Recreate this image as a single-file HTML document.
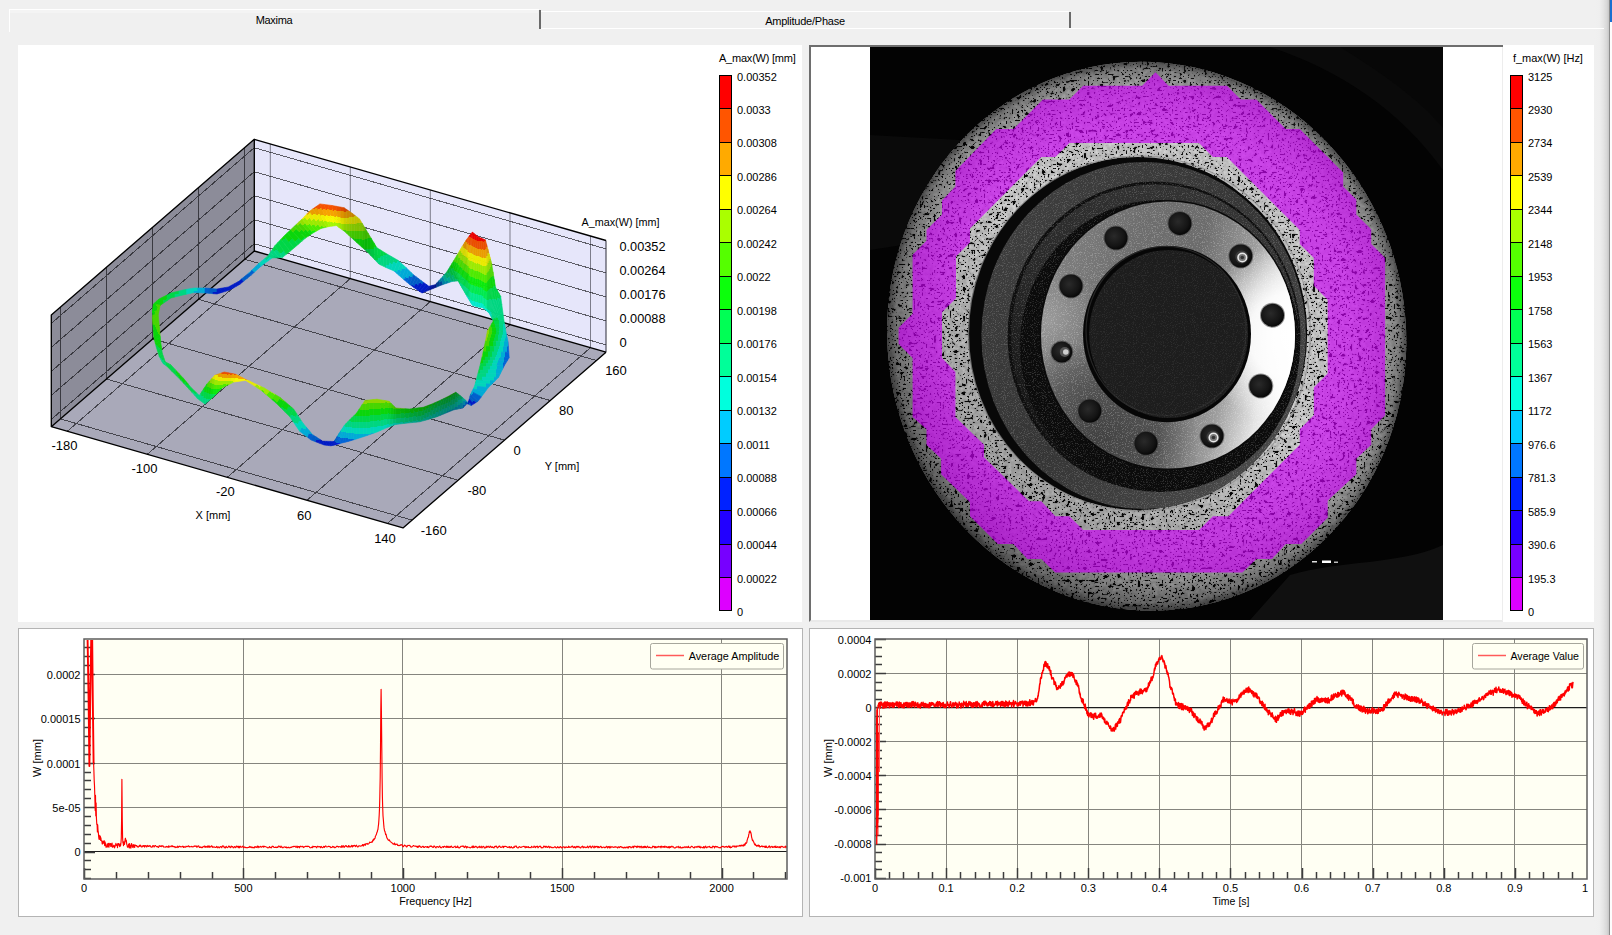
<!DOCTYPE html>
<html lang="en"><head><meta charset="utf-8"><title>Maxima</title>
<style>
html,body{margin:0;padding:0;}
body{width:1612px;height:935px;overflow:hidden;background:#f0f0f0;position:relative;
 font-family:"Liberation Sans", sans-serif;font-size:11px;color:#000;}
.abs{position:absolute;}
svg{position:absolute;left:0;top:0;overflow:visible;}
svg text{font-family:"Liberation Sans", sans-serif;fill:#000;}
.tab{position:absolute;text-align:center;font-size:11px;line-height:13px;white-space:nowrap;}
.panel{position:absolute;background:#fff;box-sizing:border-box;}
.cbl{position:absolute;font-size:11px;line-height:12px;white-space:nowrap;}
</style></head>
<body>
<div class="abs" style="left:1594px;top:0;width:15px;height:935px;background:linear-gradient(90deg,#f0f0f0 0,#efefef 35%,#e6e6e6 60%,#d8d8d8 85%,#c6c6c6 100%)"></div>
<div class="abs" style="left:9px;top:9px;width:530px;height:1px;background:#fff"></div>
<div class="abs" style="left:9px;top:9px;width:1px;height:23px;background:#fff"></div>
<div class="abs" style="left:10px;top:10px;width:528px;height:3px;background:#f4f4f4"></div>
<div class="abs" style="left:539px;top:10px;width:2px;height:19px;background:#6a6a6a"></div>
<div class="abs" style="left:541px;top:11px;width:528px;height:1px;background:#fff"></div>
<div class="abs" style="left:1069px;top:12px;width:2px;height:16px;background:#6a6a6a"></div>
<div class="abs" style="left:541px;top:28px;width:1063px;height:1px;background:#fff"></div>
<div class="tab" style="left:9px;top:14px;width:530px;letter-spacing:-0.3px;">Maxima</div>
<div class="tab" style="left:541px;top:15px;width:528px;letter-spacing:-0.23px;">Amplitude/Phase</div>
<div class="abs" style="left:1609px;top:0;width:1px;height:935px;background:#8c8c8c"></div>
<div class="abs" style="left:1610px;top:0;width:2px;height:935px;background:#fdfdfd"></div>
<div class="abs" style="left:1610px;top:0;width:2px;height:22px;background:#1a6fd0"></div>
<div class="panel" style="left:18px;top:45px;width:784px;height:577px;"></div>
<div class="panel" style="left:809px;top:45px;width:694px;height:577px;border-left:2px solid #6e6e6e;border-top:2px solid #6e6e6e;border-bottom:2px solid #e9e9e9;"></div>
<div class="panel" style="left:1503px;top:45px;width:91px;height:577px;"></div>
<div class="abs" style="left:1502px;top:47px;width:1px;height:574px;background:#ededed"></div>
<div class="panel" style="left:18px;top:628px;width:785px;height:289px;border:1px solid #b4b4b4;"></div>
<div class="panel" style="left:809px;top:628px;width:785px;height:289px;border:1px solid #b4b4b4;"></div>
<svg width="1612" height="935" viewBox="0 0 1612 935" shape-rendering="crispEdges"><rect x="719" y="75" width="13" height="536" fill="#000"/><rect x="720" y="76" width="11" height="32" fill="#ff0000"/><rect x="720" y="109" width="11" height="33" fill="#ff5500"/><rect x="720" y="143" width="11" height="32" fill="#ffaa00"/><rect x="720" y="176" width="11" height="33" fill="#ffff00"/><rect x="720" y="210" width="11" height="32" fill="#aaff00"/><rect x="720" y="243" width="11" height="33" fill="#55ff00"/><rect x="720" y="277" width="11" height="32" fill="#0cff0c"/><rect x="720" y="310" width="11" height="33" fill="#00ff55"/><rect x="720" y="344" width="11" height="32" fill="#00ff99"/><rect x="720" y="377" width="11" height="33" fill="#00ffdd"/><rect x="720" y="411" width="11" height="32" fill="#00ccff"/><rect x="720" y="444" width="11" height="33" fill="#0077ff"/><rect x="720" y="478" width="11" height="32" fill="#0022ff"/><rect x="720" y="511" width="11" height="33" fill="#2200ff"/><rect x="720" y="545" width="11" height="32" fill="#7700ff"/><rect x="720" y="578" width="11" height="32" fill="#dd00ff"/></svg>
<div class="cbl" style="left:719px;top:52px;letter-spacing:-0.22px;">A_max(W) [mm]</div>
<div class="cbl" style="left:737px;top:70.5px;">0.00352</div>
<div class="cbl" style="left:737px;top:104.0px;">0.0033</div>
<div class="cbl" style="left:737px;top:137.4px;">0.00308</div>
<div class="cbl" style="left:737px;top:170.9px;">0.00286</div>
<div class="cbl" style="left:737px;top:204.4px;">0.00264</div>
<div class="cbl" style="left:737px;top:237.8px;">0.00242</div>
<div class="cbl" style="left:737px;top:271.3px;">0.0022</div>
<div class="cbl" style="left:737px;top:304.8px;">0.00198</div>
<div class="cbl" style="left:737px;top:338.2px;">0.00176</div>
<div class="cbl" style="left:737px;top:371.7px;">0.00154</div>
<div class="cbl" style="left:737px;top:405.2px;">0.00132</div>
<div class="cbl" style="left:737px;top:438.7px;">0.0011</div>
<div class="cbl" style="left:737px;top:472.1px;">0.00088</div>
<div class="cbl" style="left:737px;top:505.6px;">0.00066</div>
<div class="cbl" style="left:737px;top:539.1px;">0.00044</div>
<div class="cbl" style="left:737px;top:572.5px;">0.00022</div>
<div class="cbl" style="left:737px;top:606.0px;">0</div>
<svg width="1612" height="935" viewBox="0 0 1612 935" shape-rendering="crispEdges"><rect x="1510" y="75" width="13" height="536" fill="#000"/><rect x="1511" y="76" width="11" height="32" fill="#ff0000"/><rect x="1511" y="109" width="11" height="33" fill="#ff5500"/><rect x="1511" y="143" width="11" height="32" fill="#ffaa00"/><rect x="1511" y="176" width="11" height="33" fill="#ffff00"/><rect x="1511" y="210" width="11" height="32" fill="#aaff00"/><rect x="1511" y="243" width="11" height="33" fill="#55ff00"/><rect x="1511" y="277" width="11" height="32" fill="#0cff0c"/><rect x="1511" y="310" width="11" height="33" fill="#00ff55"/><rect x="1511" y="344" width="11" height="32" fill="#00ff99"/><rect x="1511" y="377" width="11" height="33" fill="#00ffdd"/><rect x="1511" y="411" width="11" height="32" fill="#00ccff"/><rect x="1511" y="444" width="11" height="33" fill="#0077ff"/><rect x="1511" y="478" width="11" height="32" fill="#0022ff"/><rect x="1511" y="511" width="11" height="33" fill="#2200ff"/><rect x="1511" y="545" width="11" height="32" fill="#7700ff"/><rect x="1511" y="578" width="11" height="32" fill="#dd00ff"/></svg>
<div class="cbl" style="left:1513px;top:52px;letter-spacing:-0.03px;">f_max(W) [Hz]</div>
<div class="cbl" style="left:1528px;top:70.5px;">3125</div>
<div class="cbl" style="left:1528px;top:104.0px;">2930</div>
<div class="cbl" style="left:1528px;top:137.4px;">2734</div>
<div class="cbl" style="left:1528px;top:170.9px;">2539</div>
<div class="cbl" style="left:1528px;top:204.4px;">2344</div>
<div class="cbl" style="left:1528px;top:237.8px;">2148</div>
<div class="cbl" style="left:1528px;top:271.3px;">1953</div>
<div class="cbl" style="left:1528px;top:304.8px;">1758</div>
<div class="cbl" style="left:1528px;top:338.2px;">1563</div>
<div class="cbl" style="left:1528px;top:371.7px;">1367</div>
<div class="cbl" style="left:1528px;top:405.2px;">1172</div>
<div class="cbl" style="left:1528px;top:438.7px;">976.6</div>
<div class="cbl" style="left:1528px;top:472.1px;">781.3</div>
<div class="cbl" style="left:1528px;top:505.6px;">585.9</div>
<div class="cbl" style="left:1528px;top:539.1px;">390.6</div>
<div class="cbl" style="left:1528px;top:572.5px;">195.3</div>
<div class="cbl" style="left:1528px;top:606.0px;">0</div>
<svg width="1612" height="935" viewBox="0 0 1612 935"><polygon points="254.30,139.30 51.30,315.00 51.30,426.70 254.30,251.00" fill="#8c8c99"/>
<polygon points="254.30,139.30 606.00,240.50 606.00,352.20 254.30,251.00" fill="#e6e6fa"/>
<polygon points="254.30,251.00 606.00,352.20 403.00,527.90 51.30,426.70" fill="#a9a9b9"/>
<path d="M270.3 255.6 V143.9 M350.3 278.6 V166.9 M430.3 301.6 V189.9 M510.0 324.6 V212.9 M590.5 347.7 V236.0" stroke="#7c7c8a" stroke-width="1" fill="none"/>
<path d="M244.7 259.3 V147.6 M244.7 259.3 l351.7 101.2 M198.5 299.3 V187.6 M198.5 299.3 l351.7 101.2 M152.7 338.9 V227.2 M152.7 338.9 l351.7 101.2 M106.4 379.0 V267.3 M106.4 379.0 l351.7 101.2 M60.3 418.9 V307.2 M60.3 418.9 l351.7 101.2 M254.3 243.7 l-203.0 175.7 M254.3 243.7 l351.7 101.2 M254.3 219.7 l-203.0 175.7 M254.3 219.7 l351.7 101.2 M254.3 195.7 l-203.0 175.7 M254.3 195.7 l351.7 101.2 M254.3 171.7 l-203.0 175.7 M254.3 171.7 l351.7 101.2 M254.3 147.7 l-203.0 175.7 M254.3 147.7 l351.7 101.2 M270.3 255.6 l-203.0 175.7 M350.3 278.6 l-203.0 175.7 M430.3 301.6 l-203.0 175.7 M510.0 324.6 l-203.0 175.7 M590.5 347.7 l-203.0 175.7" stroke="#08080c" stroke-width="1" fill="none" stroke-opacity="0.62" shape-rendering="crispEdges"/>
<path d="M606.00,240.50 L606.00,352.20" stroke="#2a2a38" stroke-width="1" fill="none"/>
<path d="M51.30,426.70 L51.30,315.00 L254.30,139.30 L606.00,240.50 M606.00,352.20 L403.00,527.90 L51.30,426.70 L254.30,251.00 L606.00,352.20 M254.30,251.00 L254.30,139.30" stroke="#000" stroke-width="1.35" fill="none" stroke-linejoin="round"/>
<defs><linearGradient id="rb0" gradientUnits="userSpaceOnUse" x1="154.42" y1="303.17" x2="153.75" y2="311.75"><stop offset="0.000" stop-color="#0ad60a"/><stop offset="1.000" stop-color="#0ad60a"/></linearGradient><linearGradient id="rb1" gradientUnits="userSpaceOnUse" x1="156.25" y1="301.50" x2="156.25" y2="309.25"><stop offset="0.000" stop-color="#0ad60a"/><stop offset="1.000" stop-color="#0ad60a"/></linearGradient><linearGradient id="rb2" gradientUnits="userSpaceOnUse" x1="158.08" y1="299.83" x2="158.75" y2="306.75"><stop offset="0.000" stop-color="#0ad60a"/><stop offset="1.000" stop-color="#0ad60a"/></linearGradient><linearGradient id="rb3" gradientUnits="userSpaceOnUse" x1="161.00" y1="298.00" x2="161.83" y2="304.25"><stop offset="0.000" stop-color="#0ad60a"/><stop offset="1.000" stop-color="#0ad60a"/></linearGradient><linearGradient id="rb4" gradientUnits="userSpaceOnUse" x1="165.00" y1="296.00" x2="165.50" y2="301.75"><stop offset="0.000" stop-color="#0ad60a"/><stop offset="0.625" stop-color="#0ad60a"/><stop offset="0.625" stop-color="#00d647"/><stop offset="1.000" stop-color="#00d647"/></linearGradient><linearGradient id="rb5" gradientUnits="userSpaceOnUse" x1="169.00" y1="294.00" x2="169.17" y2="299.25"><stop offset="0.000" stop-color="#00d647"/><stop offset="1.000" stop-color="#00d647"/></linearGradient><linearGradient id="rb6" gradientUnits="userSpaceOnUse" x1="173.00" y1="292.50" x2="173.00" y2="297.50"><stop offset="0.000" stop-color="#00d647"/><stop offset="1.000" stop-color="#00d647"/></linearGradient><linearGradient id="rb7" gradientUnits="userSpaceOnUse" x1="177.00" y1="291.50" x2="177.00" y2="296.50"><stop offset="0.000" stop-color="#00d647"/><stop offset="0.500" stop-color="#00d647"/><stop offset="0.500" stop-color="#00d680"/><stop offset="1.000" stop-color="#00d680"/></linearGradient><linearGradient id="rb8" gradientUnits="userSpaceOnUse" x1="181.00" y1="290.50" x2="181.00" y2="295.50"><stop offset="0.000" stop-color="#00d680"/><stop offset="1.000" stop-color="#00d680"/></linearGradient><linearGradient id="rb9" gradientUnits="userSpaceOnUse" x1="184.83" y1="289.67" x2="184.83" y2="294.58"><stop offset="0.000" stop-color="#00d680"/><stop offset="1.000" stop-color="#00d680"/></linearGradient><linearGradient id="rb10" gradientUnits="userSpaceOnUse" x1="188.50" y1="289.00" x2="188.50" y2="293.75"><stop offset="0.000" stop-color="#00d6b9"/><stop offset="1.000" stop-color="#00d6b9"/></linearGradient><linearGradient id="rb11" gradientUnits="userSpaceOnUse" x1="192.17" y1="288.33" x2="192.17" y2="292.92"><stop offset="0.000" stop-color="#00d6b9"/><stop offset="1.000" stop-color="#00d6b9"/></linearGradient><linearGradient id="rb12" gradientUnits="userSpaceOnUse" x1="195.83" y1="288.00" x2="195.83" y2="292.58"><stop offset="0.000" stop-color="#00d6b9"/><stop offset="0.583" stop-color="#00d6b9"/><stop offset="0.583" stop-color="#00abd6"/><stop offset="1.000" stop-color="#00abd6"/></linearGradient><linearGradient id="rb13" gradientUnits="userSpaceOnUse" x1="199.50" y1="288.00" x2="199.50" y2="292.75"><stop offset="0.000" stop-color="#00abd6"/><stop offset="1.000" stop-color="#00abd6"/></linearGradient><linearGradient id="rb14" gradientUnits="userSpaceOnUse" x1="203.17" y1="288.00" x2="203.17" y2="292.92"><stop offset="0.000" stop-color="#00abd6"/><stop offset="1.000" stop-color="#00abd6"/></linearGradient><linearGradient id="rb15" gradientUnits="userSpaceOnUse" x1="207.00" y1="288.17" x2="207.00" y2="293.17"><stop offset="0.000" stop-color="#0060ce"/><stop offset="1.000" stop-color="#0060ce"/></linearGradient><linearGradient id="rb16" gradientUnits="userSpaceOnUse" x1="211.00" y1="288.50" x2="211.00" y2="293.50"><stop offset="0.000" stop-color="#005cc6"/><stop offset="1.000" stop-color="#005cc6"/></linearGradient><linearGradient id="rb17" gradientUnits="userSpaceOnUse" x1="215.00" y1="288.83" x2="215.00" y2="293.83"><stop offset="0.000" stop-color="#005cc6"/><stop offset="0.583" stop-color="#005cc6"/><stop offset="0.583" stop-color="#001ac6"/><stop offset="1.000" stop-color="#001ac6"/></linearGradient><linearGradient id="rb18" gradientUnits="userSpaceOnUse" x1="218.88" y1="288.67" x2="219.12" y2="293.33"><stop offset="0.000" stop-color="#001ac6"/><stop offset="1.000" stop-color="#001ac6"/></linearGradient><linearGradient id="rb19" gradientUnits="userSpaceOnUse" x1="222.62" y1="288.00" x2="223.38" y2="292.00"><stop offset="0.000" stop-color="#001ac6"/><stop offset="1.000" stop-color="#001ac6"/></linearGradient><linearGradient id="rb20" gradientUnits="userSpaceOnUse" x1="226.38" y1="287.33" x2="227.62" y2="290.67"><stop offset="0.000" stop-color="#001ac6"/><stop offset="1.000" stop-color="#001ac6"/></linearGradient><linearGradient id="rb21" gradientUnits="userSpaceOnUse" x1="229.93" y1="286.10" x2="231.41" y2="289.07"><stop offset="0.000" stop-color="#001ac6"/><stop offset="1.000" stop-color="#001ac6"/></linearGradient><linearGradient id="rb22" gradientUnits="userSpaceOnUse" x1="233.28" y1="284.30" x2="234.72" y2="287.20"><stop offset="0.000" stop-color="#001ac6"/><stop offset="1.000" stop-color="#001ac6"/></linearGradient><linearGradient id="rb23" gradientUnits="userSpaceOnUse" x1="236.62" y1="282.50" x2="238.04" y2="285.33"><stop offset="0.000" stop-color="#001ac6"/><stop offset="1.000" stop-color="#001ac6"/></linearGradient><linearGradient id="rb24" gradientUnits="userSpaceOnUse" x1="240.01" y1="280.21" x2="241.63" y2="282.84"><stop offset="0.000" stop-color="#005cc6"/><stop offset="-0.000" stop-color="#005cc6"/><stop offset="-0.000" stop-color="#001ac6"/><stop offset="1.000" stop-color="#001ac6"/></linearGradient><linearGradient id="rb25" gradientUnits="userSpaceOnUse" x1="243.42" y1="277.44" x2="245.48" y2="279.71"><stop offset="0.000" stop-color="#005cc6"/><stop offset="1.000" stop-color="#005cc6"/></linearGradient><linearGradient id="rb26" gradientUnits="userSpaceOnUse" x1="246.83" y1="274.66" x2="249.34" y2="276.59"><stop offset="0.000" stop-color="#005cc6"/><stop offset="1.000" stop-color="#005cc6"/></linearGradient><linearGradient id="rb27" gradientUnits="userSpaceOnUse" x1="250.23" y1="271.66" x2="252.94" y2="273.50"><stop offset="0.000" stop-color="#00a5ce"/><stop offset="0.042" stop-color="#00a5ce"/><stop offset="0.042" stop-color="#0060ce"/><stop offset="1.000" stop-color="#0060ce"/></linearGradient><linearGradient id="rb28" gradientUnits="userSpaceOnUse" x1="253.62" y1="268.44" x2="256.28" y2="270.46"><stop offset="0.000" stop-color="#00abd6"/><stop offset="1.000" stop-color="#00abd6"/></linearGradient><linearGradient id="rb29" gradientUnits="userSpaceOnUse" x1="257.01" y1="265.22" x2="259.63" y2="267.41"><stop offset="0.000" stop-color="#00abd6"/><stop offset="1.000" stop-color="#00abd6"/></linearGradient><linearGradient id="rb30" gradientUnits="userSpaceOnUse" x1="260.23" y1="262.33" x2="263.10" y2="264.57"><stop offset="0.000" stop-color="#00d6b9"/><stop offset="0.917" stop-color="#00d6b9"/><stop offset="0.917" stop-color="#00abd6"/><stop offset="1.000" stop-color="#00abd6"/></linearGradient><linearGradient id="rb31" gradientUnits="userSpaceOnUse" x1="263.30" y1="259.77" x2="266.70" y2="261.93"><stop offset="0.000" stop-color="#00d6b9"/><stop offset="1.000" stop-color="#00d6b9"/></linearGradient><linearGradient id="rb32" gradientUnits="userSpaceOnUse" x1="266.37" y1="257.21" x2="270.30" y2="259.29"><stop offset="0.000" stop-color="#00d680"/><stop offset="0.458" stop-color="#00d680"/><stop offset="0.458" stop-color="#00d6b9"/><stop offset="1.000" stop-color="#00d6b9"/></linearGradient><linearGradient id="rb33" gradientUnits="userSpaceOnUse" x1="269.05" y1="254.25" x2="273.83" y2="257.87"><stop offset="0.000" stop-color="#00d680"/><stop offset="1.000" stop-color="#00d680"/></linearGradient><linearGradient id="rb34" gradientUnits="userSpaceOnUse" x1="271.35" y1="250.87" x2="277.30" y2="257.68"><stop offset="0.000" stop-color="#00d680"/><stop offset="1.000" stop-color="#00d680"/></linearGradient><linearGradient id="rb35" gradientUnits="userSpaceOnUse" x1="273.65" y1="247.49" x2="280.77" y2="257.49"><stop offset="0.000" stop-color="#00d647"/><stop offset="0.273" stop-color="#00d647"/><stop offset="0.273" stop-color="#00d680"/><stop offset="1.000" stop-color="#00d680"/></linearGradient><linearGradient id="rb36" gradientUnits="userSpaceOnUse" x1="276.33" y1="244.17" x2="284.42" y2="255.83"><stop offset="0.000" stop-color="#00d647"/><stop offset="0.692" stop-color="#00d647"/><stop offset="0.692" stop-color="#00d680"/><stop offset="1.000" stop-color="#00d680"/></linearGradient><linearGradient id="rb37" gradientUnits="userSpaceOnUse" x1="279.40" y1="240.90" x2="288.25" y2="252.70"><stop offset="0.000" stop-color="#00d647"/><stop offset="1.000" stop-color="#00d647"/></linearGradient><linearGradient id="rb38" gradientUnits="userSpaceOnUse" x1="282.47" y1="237.63" x2="292.08" y2="249.57"><stop offset="0.000" stop-color="#0ad60a"/><stop offset="0.132" stop-color="#0ad60a"/><stop offset="0.132" stop-color="#00d647"/><stop offset="1.000" stop-color="#00d647"/></linearGradient><linearGradient id="rb39" gradientUnits="userSpaceOnUse" x1="285.67" y1="234.43" x2="295.93" y2="246.33"><stop offset="0.000" stop-color="#0ad60a"/><stop offset="0.462" stop-color="#0ad60a"/><stop offset="0.462" stop-color="#00d647"/><stop offset="1.000" stop-color="#00d647"/></linearGradient><linearGradient id="rb40" gradientUnits="userSpaceOnUse" x1="289.00" y1="231.30" x2="299.80" y2="243.00"><stop offset="0.000" stop-color="#0ad60a"/><stop offset="0.719" stop-color="#0ad60a"/><stop offset="0.719" stop-color="#00d647"/><stop offset="1.000" stop-color="#00d647"/></linearGradient><linearGradient id="rb41" gradientUnits="userSpaceOnUse" x1="292.33" y1="228.17" x2="303.67" y2="239.67"><stop offset="0.000" stop-color="#47d600"/><stop offset="0.232" stop-color="#47d600"/><stop offset="0.232" stop-color="#0ad60a"/><stop offset="0.902" stop-color="#0ad60a"/><stop offset="0.902" stop-color="#00d647"/><stop offset="1.000" stop-color="#00d647"/></linearGradient><linearGradient id="rb42" gradientUnits="userSpaceOnUse" x1="295.33" y1="225.33" x2="306.83" y2="237.17"><stop offset="0.000" stop-color="#47d600"/><stop offset="0.453" stop-color="#47d600"/><stop offset="0.453" stop-color="#0ad60a"/><stop offset="1.000" stop-color="#0ad60a"/></linearGradient><linearGradient id="rb43" gradientUnits="userSpaceOnUse" x1="298.00" y1="222.80" x2="309.30" y2="235.50"><stop offset="0.000" stop-color="#8ed600"/><stop offset="0.104" stop-color="#8ed600"/><stop offset="0.104" stop-color="#47d600"/><stop offset="0.625" stop-color="#47d600"/><stop offset="0.625" stop-color="#0ad60a"/><stop offset="1.000" stop-color="#0ad60a"/></linearGradient><linearGradient id="rb44" gradientUnits="userSpaceOnUse" x1="300.67" y1="220.27" x2="311.77" y2="233.83"><stop offset="0.000" stop-color="#95e000"/><stop offset="0.294" stop-color="#95e000"/><stop offset="0.294" stop-color="#4ae000"/><stop offset="0.762" stop-color="#4ae000"/><stop offset="0.762" stop-color="#0ae00a"/><stop offset="1.000" stop-color="#0ae00a"/></linearGradient><linearGradient id="rb45" gradientUnits="userSpaceOnUse" x1="303.25" y1="217.70" x2="314.33" y2="232.25"><stop offset="0.000" stop-color="#eaea00"/><stop offset="0.045" stop-color="#eaea00"/><stop offset="0.045" stop-color="#9cea00"/><stop offset="0.472" stop-color="#9cea00"/><stop offset="0.472" stop-color="#4eea00"/><stop offset="0.898" stop-color="#4eea00"/><stop offset="0.898" stop-color="#0bea0b"/><stop offset="1.000" stop-color="#0bea0b"/></linearGradient><linearGradient id="rb46" gradientUnits="userSpaceOnUse" x1="305.75" y1="215.10" x2="317.00" y2="230.75"><stop offset="0.000" stop-color="#eaea00"/><stop offset="0.250" stop-color="#eaea00"/><stop offset="0.250" stop-color="#9cea00"/><stop offset="0.641" stop-color="#9cea00"/><stop offset="0.641" stop-color="#4eea00"/><stop offset="1.000" stop-color="#4eea00"/></linearGradient><linearGradient id="rb47" gradientUnits="userSpaceOnUse" x1="308.25" y1="212.50" x2="319.67" y2="229.25"><stop offset="0.000" stop-color="#ea9c00"/><stop offset="0.062" stop-color="#ea9c00"/><stop offset="0.062" stop-color="#eaea00"/><stop offset="0.423" stop-color="#eaea00"/><stop offset="0.423" stop-color="#9cea00"/><stop offset="0.784" stop-color="#9cea00"/><stop offset="0.784" stop-color="#4eea00"/><stop offset="1.000" stop-color="#4eea00"/></linearGradient><linearGradient id="rb48" gradientUnits="userSpaceOnUse" x1="311.25" y1="209.98" x2="322.33" y2="228.17"><stop offset="0.000" stop-color="#ea9c00"/><stop offset="0.222" stop-color="#ea9c00"/><stop offset="0.222" stop-color="#eaea00"/><stop offset="0.556" stop-color="#eaea00"/><stop offset="0.556" stop-color="#9cea00"/><stop offset="0.889" stop-color="#9cea00"/><stop offset="0.889" stop-color="#4eea00"/><stop offset="1.000" stop-color="#4eea00"/></linearGradient><linearGradient id="rb49" gradientUnits="userSpaceOnUse" x1="314.75" y1="207.55" x2="325.00" y2="227.50"><stop offset="0.000" stop-color="#ea4e00"/><stop offset="0.037" stop-color="#ea4e00"/><stop offset="0.037" stop-color="#ea9c00"/><stop offset="0.346" stop-color="#ea9c00"/><stop offset="0.346" stop-color="#eaea00"/><stop offset="0.654" stop-color="#eaea00"/><stop offset="0.654" stop-color="#9cea00"/><stop offset="0.963" stop-color="#9cea00"/><stop offset="0.963" stop-color="#4eea00"/><stop offset="1.000" stop-color="#4eea00"/></linearGradient><linearGradient id="rb50" gradientUnits="userSpaceOnUse" x1="318.25" y1="205.12" x2="327.67" y2="226.83"><stop offset="0.000" stop-color="#f05000"/><stop offset="0.165" stop-color="#f05000"/><stop offset="0.165" stop-color="#f0a000"/><stop offset="0.452" stop-color="#f0a000"/><stop offset="0.452" stop-color="#f0f000"/><stop offset="0.739" stop-color="#f0f000"/><stop offset="0.739" stop-color="#a0f000"/><stop offset="1.000" stop-color="#a0f000"/></linearGradient><linearGradient id="rb51" gradientUnits="userSpaceOnUse" x1="322.00" y1="204.17" x2="330.23" y2="226.35"><stop offset="0.000" stop-color="#f75200"/><stop offset="0.223" stop-color="#f75200"/><stop offset="0.223" stop-color="#f7a400"/><stop offset="0.506" stop-color="#f7a400"/><stop offset="0.506" stop-color="#f7f700"/><stop offset="0.789" stop-color="#f7f700"/><stop offset="0.789" stop-color="#a4f700"/><stop offset="1.000" stop-color="#a4f700"/></linearGradient><linearGradient id="rb52" gradientUnits="userSpaceOnUse" x1="326.00" y1="204.70" x2="332.70" y2="226.05"><stop offset="0.000" stop-color="#f75200"/><stop offset="0.224" stop-color="#f75200"/><stop offset="0.224" stop-color="#f7a400"/><stop offset="0.518" stop-color="#f7a400"/><stop offset="0.518" stop-color="#f7f700"/><stop offset="0.812" stop-color="#f7f700"/><stop offset="0.812" stop-color="#a4f700"/><stop offset="1.000" stop-color="#a4f700"/></linearGradient><linearGradient id="rb53" gradientUnits="userSpaceOnUse" x1="330.00" y1="205.23" x2="335.17" y2="225.75"><stop offset="0.000" stop-color="#f75200"/><stop offset="0.224" stop-color="#f75200"/><stop offset="0.224" stop-color="#f7a400"/><stop offset="0.531" stop-color="#f7a400"/><stop offset="0.531" stop-color="#f7f700"/><stop offset="0.837" stop-color="#f7f700"/><stop offset="0.837" stop-color="#a4f700"/><stop offset="1.000" stop-color="#a4f700"/></linearGradient><linearGradient id="rb54" gradientUnits="userSpaceOnUse" x1="334.00" y1="205.87" x2="337.67" y2="226.50"><stop offset="0.000" stop-color="#f35100"/><stop offset="0.215" stop-color="#f35100"/><stop offset="0.215" stop-color="#f3a200"/><stop offset="0.518" stop-color="#f3a200"/><stop offset="0.518" stop-color="#f3f300"/><stop offset="0.822" stop-color="#f3f300"/><stop offset="0.822" stop-color="#a2f300"/><stop offset="1.000" stop-color="#a2f300"/></linearGradient><linearGradient id="rb55" gradientUnits="userSpaceOnUse" x1="338.00" y1="206.60" x2="340.20" y2="228.30"><stop offset="0.000" stop-color="#ea4e00"/><stop offset="0.195" stop-color="#ea4e00"/><stop offset="0.195" stop-color="#ea9c00"/><stop offset="0.483" stop-color="#ea9c00"/><stop offset="0.483" stop-color="#eaea00"/><stop offset="0.770" stop-color="#eaea00"/><stop offset="0.770" stop-color="#9cea00"/><stop offset="1.000" stop-color="#9cea00"/></linearGradient><linearGradient id="rb56" gradientUnits="userSpaceOnUse" x1="342.00" y1="207.33" x2="342.73" y2="230.10"><stop offset="0.000" stop-color="#dd4900"/><stop offset="0.178" stop-color="#dd4900"/><stop offset="0.178" stop-color="#dd9300"/><stop offset="0.451" stop-color="#dd9300"/><stop offset="0.451" stop-color="#dddd00"/><stop offset="0.724" stop-color="#dddd00"/><stop offset="0.724" stop-color="#93dd00"/><stop offset="0.996" stop-color="#93dd00"/><stop offset="0.996" stop-color="#49dd00"/><stop offset="1.000" stop-color="#49dd00"/></linearGradient><linearGradient id="rb57" gradientUnits="userSpaceOnUse" x1="345.30" y1="208.58" x2="345.30" y2="232.17"><stop offset="0.000" stop-color="#d04500"/><stop offset="0.125" stop-color="#d04500"/><stop offset="0.125" stop-color="#d08b00"/><stop offset="0.391" stop-color="#d08b00"/><stop offset="0.391" stop-color="#d0d000"/><stop offset="0.658" stop-color="#d0d000"/><stop offset="0.658" stop-color="#8bd000"/><stop offset="0.925" stop-color="#8bd000"/><stop offset="0.925" stop-color="#45d000"/><stop offset="1.000" stop-color="#45d000"/></linearGradient><linearGradient id="rb58" gradientUnits="userSpaceOnUse" x1="347.90" y1="210.35" x2="347.90" y2="234.50"><stop offset="0.000" stop-color="#cc4400"/><stop offset="0.032" stop-color="#cc4400"/><stop offset="0.032" stop-color="#cc8800"/><stop offset="0.301" stop-color="#cc8800"/><stop offset="0.301" stop-color="#cccc00"/><stop offset="0.570" stop-color="#cccc00"/><stop offset="0.570" stop-color="#88cc00"/><stop offset="0.839" stop-color="#88cc00"/><stop offset="0.839" stop-color="#44cc00"/><stop offset="1.000" stop-color="#44cc00"/></linearGradient><linearGradient id="rb59" gradientUnits="userSpaceOnUse" x1="350.50" y1="212.12" x2="350.50" y2="236.83"><stop offset="0.000" stop-color="#c78400"/><stop offset="0.209" stop-color="#c78400"/><stop offset="0.209" stop-color="#c7c700"/><stop offset="0.480" stop-color="#c7c700"/><stop offset="0.480" stop-color="#84c700"/><stop offset="0.751" stop-color="#84c700"/><stop offset="0.751" stop-color="#42c700"/><stop offset="1.000" stop-color="#42c700"/></linearGradient><linearGradient id="rb60" gradientUnits="userSpaceOnUse" x1="353.08" y1="213.98" x2="353.08" y2="239.17"><stop offset="0.000" stop-color="#c48200"/><stop offset="0.115" stop-color="#c48200"/><stop offset="0.115" stop-color="#c4c400"/><stop offset="0.393" stop-color="#c4c400"/><stop offset="0.393" stop-color="#82c400"/><stop offset="0.670" stop-color="#82c400"/><stop offset="0.670" stop-color="#41c400"/><stop offset="0.948" stop-color="#41c400"/><stop offset="0.948" stop-color="#09c409"/><stop offset="1.000" stop-color="#09c409"/></linearGradient><linearGradient id="rb61" gradientUnits="userSpaceOnUse" x1="355.65" y1="215.95" x2="355.65" y2="241.50"><stop offset="0.000" stop-color="#c28100"/><stop offset="0.012" stop-color="#c28100"/><stop offset="0.012" stop-color="#c2c200"/><stop offset="0.302" stop-color="#c2c200"/><stop offset="0.302" stop-color="#81c200"/><stop offset="0.593" stop-color="#81c200"/><stop offset="0.593" stop-color="#40c200"/><stop offset="0.884" stop-color="#40c200"/><stop offset="0.884" stop-color="#09c209"/><stop offset="1.000" stop-color="#09c209"/></linearGradient><linearGradient id="rb62" gradientUnits="userSpaceOnUse" x1="358.22" y1="217.92" x2="358.22" y2="243.83"><stop offset="0.000" stop-color="#c1c100"/><stop offset="0.203" stop-color="#c1c100"/><stop offset="0.203" stop-color="#80c100"/><stop offset="0.508" stop-color="#80c100"/><stop offset="0.508" stop-color="#40c100"/><stop offset="0.813" stop-color="#40c100"/><stop offset="0.813" stop-color="#09c109"/><stop offset="1.000" stop-color="#09c109"/></linearGradient><linearGradient id="rb63" gradientUnits="userSpaceOnUse" x1="360.92" y1="221.25" x2="360.75" y2="246.10"><stop offset="0.000" stop-color="#c1c100"/><stop offset="0.054" stop-color="#c1c100"/><stop offset="0.054" stop-color="#81c100"/><stop offset="0.392" stop-color="#81c100"/><stop offset="0.392" stop-color="#40c100"/><stop offset="0.730" stop-color="#40c100"/><stop offset="0.730" stop-color="#09c109"/><stop offset="1.000" stop-color="#09c109"/></linearGradient><linearGradient id="rb64" gradientUnits="userSpaceOnUse" x1="363.75" y1="225.95" x2="363.25" y2="248.30"><stop offset="0.000" stop-color="#7cbb00"/><stop offset="0.210" stop-color="#7cbb00"/><stop offset="0.210" stop-color="#3ebb00"/><stop offset="0.613" stop-color="#3ebb00"/><stop offset="0.613" stop-color="#08bb08"/><stop offset="1.000" stop-color="#08bb08"/></linearGradient><linearGradient id="rb65" gradientUnits="userSpaceOnUse" x1="366.58" y1="230.65" x2="365.75" y2="250.50"><stop offset="0.000" stop-color="#3cb400"/><stop offset="0.440" stop-color="#3cb400"/><stop offset="0.440" stop-color="#08b408"/><stop offset="0.940" stop-color="#08b408"/><stop offset="0.940" stop-color="#00b43c"/><stop offset="1.000" stop-color="#00b43c"/></linearGradient><linearGradient id="rb66" gradientUnits="userSpaceOnUse" x1="369.48" y1="235.47" x2="368.97" y2="253.67"><stop offset="0.000" stop-color="#3ebb00"/><stop offset="0.161" stop-color="#3ebb00"/><stop offset="0.161" stop-color="#08bb08"/><stop offset="0.766" stop-color="#08bb08"/><stop offset="0.766" stop-color="#00bb3e"/><stop offset="1.000" stop-color="#00bb3e"/></linearGradient><linearGradient id="rb67" gradientUnits="userSpaceOnUse" x1="372.45" y1="240.40" x2="372.90" y2="257.80"><stop offset="0.000" stop-color="#09c609"/><stop offset="0.472" stop-color="#09c609"/><stop offset="0.472" stop-color="#00c642"/><stop offset="1.000" stop-color="#00c642"/></linearGradient><linearGradient id="rb68" gradientUnits="userSpaceOnUse" x1="375.42" y1="245.33" x2="376.83" y2="261.93"><stop offset="0.000" stop-color="#09d009"/><stop offset="0.076" stop-color="#09d009"/><stop offset="0.076" stop-color="#00d045"/><stop offset="0.891" stop-color="#00d045"/><stop offset="0.891" stop-color="#00d07d"/><stop offset="1.000" stop-color="#00d07d"/></linearGradient><linearGradient id="rb69" gradientUnits="userSpaceOnUse" x1="378.58" y1="248.83" x2="380.00" y2="264.58"><stop offset="0.000" stop-color="#00d647"/><stop offset="0.595" stop-color="#00d647"/><stop offset="0.595" stop-color="#00d680"/><stop offset="1.000" stop-color="#00d680"/></linearGradient><linearGradient id="rb70" gradientUnits="userSpaceOnUse" x1="381.95" y1="250.90" x2="382.40" y2="265.75"><stop offset="0.000" stop-color="#00d647"/><stop offset="0.357" stop-color="#00d647"/><stop offset="0.357" stop-color="#00d680"/><stop offset="1.000" stop-color="#00d680"/></linearGradient><linearGradient id="rb71" gradientUnits="userSpaceOnUse" x1="385.32" y1="252.97" x2="384.80" y2="266.92"><stop offset="0.000" stop-color="#00d647"/><stop offset="0.119" stop-color="#00d647"/><stop offset="0.119" stop-color="#00d680"/><stop offset="1.000" stop-color="#00d680"/></linearGradient><linearGradient id="rb72" gradientUnits="userSpaceOnUse" x1="388.83" y1="255.05" x2="387.33" y2="268.08"><stop offset="0.000" stop-color="#00d680"/><stop offset="0.774" stop-color="#00d680"/><stop offset="0.774" stop-color="#00d6b9"/><stop offset="1.000" stop-color="#00d6b9"/></linearGradient><linearGradient id="rb73" gradientUnits="userSpaceOnUse" x1="392.50" y1="257.15" x2="390.00" y2="269.25"><stop offset="0.000" stop-color="#00d680"/><stop offset="0.536" stop-color="#00d680"/><stop offset="0.536" stop-color="#00d6b9"/><stop offset="1.000" stop-color="#00d6b9"/></linearGradient><linearGradient id="rb74" gradientUnits="userSpaceOnUse" x1="396.17" y1="259.25" x2="392.67" y2="270.42"><stop offset="0.000" stop-color="#00d680"/><stop offset="0.298" stop-color="#00d680"/><stop offset="0.298" stop-color="#00d6b9"/><stop offset="1.000" stop-color="#00d6b9"/></linearGradient><linearGradient id="rb75" gradientUnits="userSpaceOnUse" x1="399.33" y1="261.50" x2="395.33" y2="272.17"><stop offset="0.000" stop-color="#00d680"/><stop offset="0.012" stop-color="#00d680"/><stop offset="0.012" stop-color="#00d6b9"/><stop offset="0.927" stop-color="#00d6b9"/><stop offset="0.927" stop-color="#00abd6"/><stop offset="1.000" stop-color="#00abd6"/></linearGradient><linearGradient id="rb76" gradientUnits="userSpaceOnUse" x1="402.00" y1="263.90" x2="398.00" y2="274.50"><stop offset="0.000" stop-color="#00d6b9"/><stop offset="0.615" stop-color="#00d6b9"/><stop offset="0.615" stop-color="#00abd6"/><stop offset="1.000" stop-color="#00abd6"/></linearGradient><linearGradient id="rb77" gradientUnits="userSpaceOnUse" x1="404.67" y1="266.30" x2="400.67" y2="276.83"><stop offset="0.000" stop-color="#00d6b9"/><stop offset="0.270" stop-color="#00d6b9"/><stop offset="0.270" stop-color="#00abd6"/><stop offset="1.000" stop-color="#00abd6"/></linearGradient><linearGradient id="rb78" gradientUnits="userSpaceOnUse" x1="407.23" y1="268.70" x2="403.27" y2="279.07"><stop offset="0.000" stop-color="#00abd6"/><stop offset="0.986" stop-color="#00abd6"/><stop offset="0.986" stop-color="#0063d6"/><stop offset="1.000" stop-color="#0063d6"/></linearGradient><linearGradient id="rb79" gradientUnits="userSpaceOnUse" x1="409.70" y1="271.10" x2="405.80" y2="281.20"><stop offset="0.000" stop-color="#00abd6"/><stop offset="0.682" stop-color="#00abd6"/><stop offset="0.682" stop-color="#0063d6"/><stop offset="1.000" stop-color="#0063d6"/></linearGradient><linearGradient id="rb80" gradientUnits="userSpaceOnUse" x1="412.17" y1="273.50" x2="408.33" y2="283.33"><stop offset="0.000" stop-color="#00a5ce"/><stop offset="0.339" stop-color="#00a5ce"/><stop offset="0.339" stop-color="#0060ce"/><stop offset="1.000" stop-color="#0060ce"/></linearGradient><linearGradient id="rb81" gradientUnits="userSpaceOnUse" x1="414.67" y1="275.67" x2="410.67" y2="285.17"><stop offset="0.000" stop-color="#005cc6"/><stop offset="1.000" stop-color="#005cc6"/></linearGradient><linearGradient id="rb82" gradientUnits="userSpaceOnUse" x1="417.20" y1="277.60" x2="412.80" y2="286.70"><stop offset="0.000" stop-color="#005cc6"/><stop offset="0.900" stop-color="#005cc6"/><stop offset="0.900" stop-color="#001ac6"/><stop offset="1.000" stop-color="#001ac6"/></linearGradient><linearGradient id="rb83" gradientUnits="userSpaceOnUse" x1="419.73" y1="279.53" x2="414.93" y2="288.23"><stop offset="0.000" stop-color="#005cc6"/><stop offset="0.567" stop-color="#005cc6"/><stop offset="0.567" stop-color="#001ac6"/><stop offset="1.000" stop-color="#001ac6"/></linearGradient><linearGradient id="rb84" gradientUnits="userSpaceOnUse" x1="422.32" y1="281.47" x2="417.00" y2="289.67"><stop offset="0.000" stop-color="#005cc6"/><stop offset="0.259" stop-color="#005cc6"/><stop offset="0.259" stop-color="#001ac6"/><stop offset="1.000" stop-color="#001ac6"/></linearGradient><linearGradient id="rb85" gradientUnits="userSpaceOnUse" x1="424.95" y1="283.40" x2="419.00" y2="291.00"><stop offset="0.000" stop-color="#001ac6"/><stop offset="1.000" stop-color="#001ac6"/></linearGradient><linearGradient id="rb86" gradientUnits="userSpaceOnUse" x1="427.58" y1="285.33" x2="421.00" y2="292.33"><stop offset="0.000" stop-color="#001ac6"/><stop offset="1.000" stop-color="#001ac6"/></linearGradient><linearGradient id="rb87" gradientUnits="userSpaceOnUse" x1="429.95" y1="286.03" x2="423.83" y2="292.25"><stop offset="0.000" stop-color="#0019bc"/><stop offset="1.000" stop-color="#0019bc"/></linearGradient><linearGradient id="rb88" gradientUnits="userSpaceOnUse" x1="432.05" y1="285.50" x2="427.50" y2="290.75"><stop offset="0.000" stop-color="#0016a9"/><stop offset="1.000" stop-color="#0016a9"/></linearGradient><linearGradient id="rb89" gradientUnits="userSpaceOnUse" x1="434.15" y1="284.97" x2="431.17" y2="289.25"><stop offset="0.000" stop-color="#001395"/><stop offset="1.000" stop-color="#001395"/></linearGradient><linearGradient id="rb90" gradientUnits="userSpaceOnUse" x1="436.17" y1="283.67" x2="434.67" y2="287.83"><stop offset="0.000" stop-color="#00128c"/><stop offset="1.000" stop-color="#00128c"/></linearGradient><linearGradient id="rb91" gradientUnits="userSpaceOnUse" x1="438.10" y1="281.60" x2="438.00" y2="286.50"><stop offset="0.000" stop-color="#004390"/><stop offset="1.000" stop-color="#004390"/></linearGradient><linearGradient id="rb92" gradientUnits="userSpaceOnUse" x1="440.03" y1="279.53" x2="441.33" y2="285.17"><stop offset="0.000" stop-color="#007a99"/><stop offset="0.352" stop-color="#007a99"/><stop offset="0.352" stop-color="#004799"/><stop offset="1.000" stop-color="#004799"/></linearGradient><linearGradient id="rb93" gradientUnits="userSpaceOnUse" x1="441.97" y1="277.40" x2="444.50" y2="284.00"><stop offset="0.000" stop-color="#00a28c"/><stop offset="-0.000" stop-color="#00a28c"/><stop offset="-0.000" stop-color="#0081a2"/><stop offset="1.000" stop-color="#0081a2"/></linearGradient><linearGradient id="rb94" gradientUnits="userSpaceOnUse" x1="443.90" y1="275.20" x2="447.50" y2="283.00"><stop offset="0.000" stop-color="#00a68f"/><stop offset="0.769" stop-color="#00a68f"/><stop offset="0.769" stop-color="#0084a6"/><stop offset="1.000" stop-color="#0084a6"/></linearGradient><linearGradient id="rb95" gradientUnits="userSpaceOnUse" x1="445.83" y1="273.00" x2="450.50" y2="282.00"><stop offset="0.000" stop-color="#00a965"/><stop offset="0.500" stop-color="#00a965"/><stop offset="0.500" stop-color="#00a992"/><stop offset="1.000" stop-color="#00a992"/></linearGradient><linearGradient id="rb96" gradientUnits="userSpaceOnUse" x1="447.67" y1="270.50" x2="453.05" y2="281.40"><stop offset="0.000" stop-color="#00ae3a"/><stop offset="0.200" stop-color="#00ae3a"/><stop offset="0.200" stop-color="#00ae68"/><stop offset="0.950" stop-color="#00ae68"/><stop offset="0.950" stop-color="#00ae97"/><stop offset="1.000" stop-color="#00ae97"/></linearGradient><linearGradient id="rb97" gradientUnits="userSpaceOnUse" x1="449.40" y1="267.70" x2="455.15" y2="281.20"><stop offset="0.000" stop-color="#00b63c"/><stop offset="0.556" stop-color="#00b63c"/><stop offset="0.556" stop-color="#00b66d"/><stop offset="1.000" stop-color="#00b66d"/></linearGradient><linearGradient id="rb98" gradientUnits="userSpaceOnUse" x1="451.13" y1="264.90" x2="457.25" y2="281.00"><stop offset="0.000" stop-color="#08bd08"/><stop offset="0.216" stop-color="#08bd08"/><stop offset="0.216" stop-color="#00bd3f"/><stop offset="0.862" stop-color="#00bd3f"/><stop offset="0.862" stop-color="#00bd71"/><stop offset="1.000" stop-color="#00bd71"/></linearGradient><linearGradient id="rb99" gradientUnits="userSpaceOnUse" x1="452.83" y1="262.12" x2="458.75" y2="281.75"><stop offset="0.000" stop-color="#09c409"/><stop offset="0.436" stop-color="#09c409"/><stop offset="0.436" stop-color="#00c441"/><stop offset="0.971" stop-color="#00c441"/><stop offset="0.971" stop-color="#00c475"/><stop offset="1.000" stop-color="#00c475"/></linearGradient><linearGradient id="rb100" gradientUnits="userSpaceOnUse" x1="454.50" y1="259.35" x2="459.65" y2="283.45"><stop offset="0.000" stop-color="#43cb00"/><stop offset="0.100" stop-color="#43cb00"/><stop offset="0.100" stop-color="#09cb09"/><stop offset="0.517" stop-color="#09cb09"/><stop offset="0.517" stop-color="#00cb43"/><stop offset="0.933" stop-color="#00cb43"/><stop offset="0.933" stop-color="#00cb7a"/><stop offset="1.000" stop-color="#00cb7a"/></linearGradient><linearGradient id="rb101" gradientUnits="userSpaceOnUse" x1="456.17" y1="256.58" x2="460.55" y2="285.15"><stop offset="0.000" stop-color="#46d200"/><stop offset="0.227" stop-color="#46d200"/><stop offset="0.227" stop-color="#09d209"/><stop offset="0.568" stop-color="#09d209"/><stop offset="0.568" stop-color="#00d246"/><stop offset="0.909" stop-color="#00d246"/><stop offset="0.909" stop-color="#00d27e"/><stop offset="1.000" stop-color="#00d27e"/></linearGradient><linearGradient id="rb102" gradientUnits="userSpaceOnUse" x1="457.67" y1="254.08" x2="461.62" y2="287.07"><stop offset="0.000" stop-color="#8ed600"/><stop offset="0.041" stop-color="#8ed600"/><stop offset="0.041" stop-color="#47d600"/><stop offset="0.323" stop-color="#47d600"/><stop offset="0.323" stop-color="#0ad60a"/><stop offset="0.605" stop-color="#0ad60a"/><stop offset="0.605" stop-color="#00d647"/><stop offset="0.887" stop-color="#00d647"/><stop offset="0.887" stop-color="#00d680"/><stop offset="1.000" stop-color="#00d680"/></linearGradient><linearGradient id="rb103" gradientUnits="userSpaceOnUse" x1="459.00" y1="251.85" x2="462.85" y2="289.20"><stop offset="0.000" stop-color="#8ed600"/><stop offset="0.160" stop-color="#8ed600"/><stop offset="0.160" stop-color="#47d600"/><stop offset="0.396" stop-color="#47d600"/><stop offset="0.396" stop-color="#0ad60a"/><stop offset="0.632" stop-color="#0ad60a"/><stop offset="0.632" stop-color="#00d647"/><stop offset="0.868" stop-color="#00d647"/><stop offset="0.868" stop-color="#00d680"/><stop offset="1.000" stop-color="#00d680"/></linearGradient><linearGradient id="rb104" gradientUnits="userSpaceOnUse" x1="460.33" y1="249.62" x2="464.08" y2="291.33"><stop offset="0.000" stop-color="#d6d600"/><stop offset="0.043" stop-color="#d6d600"/><stop offset="0.043" stop-color="#8ed600"/><stop offset="0.246" stop-color="#8ed600"/><stop offset="0.246" stop-color="#47d600"/><stop offset="0.449" stop-color="#47d600"/><stop offset="0.449" stop-color="#0ad60a"/><stop offset="0.651" stop-color="#0ad60a"/><stop offset="0.651" stop-color="#00d647"/><stop offset="0.854" stop-color="#00d647"/><stop offset="0.854" stop-color="#00d680"/><stop offset="1.000" stop-color="#00d680"/></linearGradient><linearGradient id="rb105" gradientUnits="userSpaceOnUse" x1="461.62" y1="247.48" x2="465.33" y2="293.50"><stop offset="0.000" stop-color="#d6d600"/><stop offset="0.124" stop-color="#d6d600"/><stop offset="0.124" stop-color="#8ed600"/><stop offset="0.304" stop-color="#8ed600"/><stop offset="0.304" stop-color="#47d600"/><stop offset="0.483" stop-color="#47d600"/><stop offset="0.483" stop-color="#0ad60a"/><stop offset="0.663" stop-color="#0ad60a"/><stop offset="0.663" stop-color="#00d647"/><stop offset="0.842" stop-color="#00d647"/><stop offset="0.842" stop-color="#00d680"/><stop offset="1.000" stop-color="#00d680"/></linearGradient><linearGradient id="rb106" gradientUnits="userSpaceOnUse" x1="462.85" y1="245.45" x2="466.60" y2="295.70"><stop offset="0.000" stop-color="#d68e00"/><stop offset="0.019" stop-color="#d68e00"/><stop offset="0.019" stop-color="#d6d600"/><stop offset="0.182" stop-color="#d6d600"/><stop offset="0.182" stop-color="#8ed600"/><stop offset="0.344" stop-color="#8ed600"/><stop offset="0.344" stop-color="#47d600"/><stop offset="0.506" stop-color="#47d600"/><stop offset="0.506" stop-color="#0ad60a"/><stop offset="0.669" stop-color="#0ad60a"/><stop offset="0.669" stop-color="#00d647"/><stop offset="0.831" stop-color="#00d647"/><stop offset="0.831" stop-color="#00d680"/><stop offset="0.994" stop-color="#00d680"/><stop offset="0.994" stop-color="#00d6b9"/><stop offset="1.000" stop-color="#00d6b9"/></linearGradient><linearGradient id="rb107" gradientUnits="userSpaceOnUse" x1="464.08" y1="243.42" x2="467.87" y2="297.90"><stop offset="0.000" stop-color="#d68e00"/><stop offset="0.081" stop-color="#d68e00"/><stop offset="0.081" stop-color="#d6d600"/><stop offset="0.229" stop-color="#d6d600"/><stop offset="0.229" stop-color="#8ed600"/><stop offset="0.377" stop-color="#8ed600"/><stop offset="0.377" stop-color="#47d600"/><stop offset="0.526" stop-color="#47d600"/><stop offset="0.526" stop-color="#0ad60a"/><stop offset="0.674" stop-color="#0ad60a"/><stop offset="0.674" stop-color="#00d647"/><stop offset="0.822" stop-color="#00d647"/><stop offset="0.822" stop-color="#00d680"/><stop offset="0.970" stop-color="#00d680"/><stop offset="0.970" stop-color="#00d6b9"/><stop offset="1.000" stop-color="#00d6b9"/></linearGradient><linearGradient id="rb108" gradientUnits="userSpaceOnUse" x1="465.33" y1="241.50" x2="469.15" y2="300.05"><stop offset="0.000" stop-color="#d68e00"/><stop offset="0.130" stop-color="#d68e00"/><stop offset="0.130" stop-color="#d6d600"/><stop offset="0.267" stop-color="#d6d600"/><stop offset="0.267" stop-color="#8ed600"/><stop offset="0.405" stop-color="#8ed600"/><stop offset="0.405" stop-color="#47d600"/><stop offset="0.542" stop-color="#47d600"/><stop offset="0.542" stop-color="#0ad60a"/><stop offset="0.679" stop-color="#0ad60a"/><stop offset="0.679" stop-color="#00d647"/><stop offset="0.817" stop-color="#00d647"/><stop offset="0.817" stop-color="#00d680"/><stop offset="0.954" stop-color="#00d680"/><stop offset="0.954" stop-color="#00d6b9"/><stop offset="1.000" stop-color="#00d6b9"/></linearGradient><linearGradient id="rb109" gradientUnits="userSpaceOnUse" x1="466.60" y1="239.70" x2="470.45" y2="302.15"><stop offset="0.000" stop-color="#e04a00"/><stop offset="0.041" stop-color="#e04a00"/><stop offset="0.041" stop-color="#e09500"/><stop offset="0.170" stop-color="#e09500"/><stop offset="0.170" stop-color="#e0e000"/><stop offset="0.299" stop-color="#e0e000"/><stop offset="0.299" stop-color="#95e000"/><stop offset="0.428" stop-color="#95e000"/><stop offset="0.428" stop-color="#4ae000"/><stop offset="0.557" stop-color="#4ae000"/><stop offset="0.557" stop-color="#0ae00a"/><stop offset="0.686" stop-color="#0ae00a"/><stop offset="0.686" stop-color="#00e04a"/><stop offset="0.814" stop-color="#00e04a"/><stop offset="0.814" stop-color="#00e086"/><stop offset="0.943" stop-color="#00e086"/><stop offset="0.943" stop-color="#00e0c2"/><stop offset="1.000" stop-color="#00e0c2"/></linearGradient><linearGradient id="rb110" gradientUnits="userSpaceOnUse" x1="467.87" y1="237.90" x2="471.75" y2="304.25"><stop offset="0.000" stop-color="#ea4e00"/><stop offset="0.084" stop-color="#ea4e00"/><stop offset="0.084" stop-color="#ea9c00"/><stop offset="0.206" stop-color="#ea9c00"/><stop offset="0.206" stop-color="#eaea00"/><stop offset="0.327" stop-color="#eaea00"/><stop offset="0.327" stop-color="#9cea00"/><stop offset="0.448" stop-color="#9cea00"/><stop offset="0.448" stop-color="#4eea00"/><stop offset="0.570" stop-color="#4eea00"/><stop offset="0.570" stop-color="#0bea0b"/><stop offset="0.691" stop-color="#0bea0b"/><stop offset="0.691" stop-color="#00ea4e"/><stop offset="0.812" stop-color="#00ea4e"/><stop offset="0.812" stop-color="#00ea8c"/><stop offset="0.934" stop-color="#00ea8c"/><stop offset="0.934" stop-color="#00eacb"/><stop offset="1.000" stop-color="#00eacb"/></linearGradient><linearGradient id="rb111" gradientUnits="userSpaceOnUse" x1="469.15" y1="236.18" x2="473.17" y2="305.55"><stop offset="0.000" stop-color="#ea0000"/><stop offset="0.005" stop-color="#ea0000"/><stop offset="0.005" stop-color="#ea4e00"/><stop offset="0.120" stop-color="#ea4e00"/><stop offset="0.120" stop-color="#ea9c00"/><stop offset="0.236" stop-color="#ea9c00"/><stop offset="0.236" stop-color="#eaea00"/><stop offset="0.352" stop-color="#eaea00"/><stop offset="0.352" stop-color="#9cea00"/><stop offset="0.468" stop-color="#9cea00"/><stop offset="0.468" stop-color="#4eea00"/><stop offset="0.583" stop-color="#4eea00"/><stop offset="0.583" stop-color="#0bea0b"/><stop offset="0.699" stop-color="#0bea0b"/><stop offset="0.699" stop-color="#00ea4e"/><stop offset="0.815" stop-color="#00ea4e"/><stop offset="0.815" stop-color="#00ea8c"/><stop offset="0.931" stop-color="#00ea8c"/><stop offset="0.931" stop-color="#00eacb"/><stop offset="1.000" stop-color="#00eacb"/></linearGradient><linearGradient id="rb112" gradientUnits="userSpaceOnUse" x1="470.45" y1="234.55" x2="474.70" y2="306.05"><stop offset="0.000" stop-color="#ea0000"/><stop offset="0.040" stop-color="#ea0000"/><stop offset="0.040" stop-color="#ea4e00"/><stop offset="0.152" stop-color="#ea4e00"/><stop offset="0.152" stop-color="#ea9c00"/><stop offset="0.263" stop-color="#ea9c00"/><stop offset="0.263" stop-color="#eaea00"/><stop offset="0.375" stop-color="#eaea00"/><stop offset="0.375" stop-color="#9cea00"/><stop offset="0.487" stop-color="#9cea00"/><stop offset="0.487" stop-color="#4eea00"/><stop offset="0.598" stop-color="#4eea00"/><stop offset="0.598" stop-color="#0bea0b"/><stop offset="0.710" stop-color="#0bea0b"/><stop offset="0.710" stop-color="#00ea4e"/><stop offset="0.821" stop-color="#00ea4e"/><stop offset="0.821" stop-color="#00ea8c"/><stop offset="0.933" stop-color="#00ea8c"/><stop offset="0.933" stop-color="#00eacb"/><stop offset="1.000" stop-color="#00eacb"/></linearGradient><linearGradient id="rb113" gradientUnits="userSpaceOnUse" x1="471.75" y1="232.92" x2="476.23" y2="306.55"><stop offset="0.000" stop-color="#ea0000"/><stop offset="0.073" stop-color="#ea0000"/><stop offset="0.073" stop-color="#ea4e00"/><stop offset="0.181" stop-color="#ea4e00"/><stop offset="0.181" stop-color="#ea9c00"/><stop offset="0.289" stop-color="#ea9c00"/><stop offset="0.289" stop-color="#eaea00"/><stop offset="0.397" stop-color="#eaea00"/><stop offset="0.397" stop-color="#9cea00"/><stop offset="0.504" stop-color="#9cea00"/><stop offset="0.504" stop-color="#4eea00"/><stop offset="0.612" stop-color="#4eea00"/><stop offset="0.612" stop-color="#0bea0b"/><stop offset="0.720" stop-color="#0bea0b"/><stop offset="0.720" stop-color="#00ea4e"/><stop offset="0.828" stop-color="#00ea4e"/><stop offset="0.828" stop-color="#00ea8c"/><stop offset="0.935" stop-color="#00ea8c"/><stop offset="0.935" stop-color="#00eacb"/><stop offset="1.000" stop-color="#00eacb"/></linearGradient><linearGradient id="rb114" gradientUnits="userSpaceOnUse" x1="473.47" y1="232.95" x2="477.95" y2="306.97"><stop offset="0.000" stop-color="#ea0000"/><stop offset="0.084" stop-color="#ea0000"/><stop offset="0.084" stop-color="#ea4e00"/><stop offset="0.190" stop-color="#ea4e00"/><stop offset="0.190" stop-color="#ea9c00"/><stop offset="0.297" stop-color="#ea9c00"/><stop offset="0.297" stop-color="#eaea00"/><stop offset="0.403" stop-color="#eaea00"/><stop offset="0.403" stop-color="#9cea00"/><stop offset="0.510" stop-color="#9cea00"/><stop offset="0.510" stop-color="#4eea00"/><stop offset="0.616" stop-color="#4eea00"/><stop offset="0.616" stop-color="#0bea0b"/><stop offset="0.723" stop-color="#0bea0b"/><stop offset="0.723" stop-color="#00ea4e"/><stop offset="0.830" stop-color="#00ea4e"/><stop offset="0.830" stop-color="#00ea8c"/><stop offset="0.936" stop-color="#00ea8c"/><stop offset="0.936" stop-color="#00eacb"/><stop offset="1.000" stop-color="#00eacb"/></linearGradient><linearGradient id="rb115" gradientUnits="userSpaceOnUse" x1="475.60" y1="234.65" x2="479.85" y2="307.30"><stop offset="0.000" stop-color="#ea0000"/><stop offset="0.073" stop-color="#ea0000"/><stop offset="0.073" stop-color="#ea4e00"/><stop offset="0.181" stop-color="#ea4e00"/><stop offset="0.181" stop-color="#ea9c00"/><stop offset="0.289" stop-color="#ea9c00"/><stop offset="0.289" stop-color="#eaea00"/><stop offset="0.397" stop-color="#eaea00"/><stop offset="0.397" stop-color="#9cea00"/><stop offset="0.504" stop-color="#9cea00"/><stop offset="0.504" stop-color="#4eea00"/><stop offset="0.612" stop-color="#4eea00"/><stop offset="0.612" stop-color="#0bea0b"/><stop offset="0.720" stop-color="#0bea0b"/><stop offset="0.720" stop-color="#00ea4e"/><stop offset="0.828" stop-color="#00ea4e"/><stop offset="0.828" stop-color="#00ea8c"/><stop offset="0.935" stop-color="#00ea8c"/><stop offset="0.935" stop-color="#00eacb"/><stop offset="1.000" stop-color="#00eacb"/></linearGradient><linearGradient id="rb116" gradientUnits="userSpaceOnUse" x1="477.73" y1="236.35" x2="481.75" y2="307.63"><stop offset="0.000" stop-color="#ea0000"/><stop offset="0.063" stop-color="#ea0000"/><stop offset="0.063" stop-color="#ea4e00"/><stop offset="0.172" stop-color="#ea4e00"/><stop offset="0.172" stop-color="#ea9c00"/><stop offset="0.281" stop-color="#ea9c00"/><stop offset="0.281" stop-color="#eaea00"/><stop offset="0.390" stop-color="#eaea00"/><stop offset="0.390" stop-color="#9cea00"/><stop offset="0.499" stop-color="#9cea00"/><stop offset="0.499" stop-color="#4eea00"/><stop offset="0.608" stop-color="#4eea00"/><stop offset="0.608" stop-color="#0bea0b"/><stop offset="0.717" stop-color="#0bea0b"/><stop offset="0.717" stop-color="#00ea4e"/><stop offset="0.826" stop-color="#00ea4e"/><stop offset="0.826" stop-color="#00ea8c"/><stop offset="0.935" stop-color="#00ea8c"/><stop offset="0.935" stop-color="#00eacb"/><stop offset="1.000" stop-color="#00eacb"/></linearGradient><linearGradient id="rb117" gradientUnits="userSpaceOnUse" x1="479.88" y1="237.63" x2="483.42" y2="308.33"><stop offset="0.000" stop-color="#ea0000"/><stop offset="0.052" stop-color="#ea0000"/><stop offset="0.052" stop-color="#ea4e00"/><stop offset="0.163" stop-color="#ea4e00"/><stop offset="0.163" stop-color="#ea9c00"/><stop offset="0.274" stop-color="#ea9c00"/><stop offset="0.274" stop-color="#eaea00"/><stop offset="0.385" stop-color="#eaea00"/><stop offset="0.385" stop-color="#9cea00"/><stop offset="0.496" stop-color="#9cea00"/><stop offset="0.496" stop-color="#4eea00"/><stop offset="0.607" stop-color="#4eea00"/><stop offset="0.607" stop-color="#0bea0b"/><stop offset="0.717" stop-color="#0bea0b"/><stop offset="0.717" stop-color="#00ea4e"/><stop offset="0.828" stop-color="#00ea4e"/><stop offset="0.828" stop-color="#00ea8c"/><stop offset="0.939" stop-color="#00ea8c"/><stop offset="0.939" stop-color="#00eacb"/><stop offset="1.000" stop-color="#00eacb"/></linearGradient><linearGradient id="rb118" gradientUnits="userSpaceOnUse" x1="482.05" y1="238.50" x2="484.85" y2="309.40"><stop offset="0.000" stop-color="#ea0000"/><stop offset="0.041" stop-color="#ea0000"/><stop offset="0.041" stop-color="#ea4e00"/><stop offset="0.155" stop-color="#ea4e00"/><stop offset="0.155" stop-color="#ea9c00"/><stop offset="0.268" stop-color="#ea9c00"/><stop offset="0.268" stop-color="#eaea00"/><stop offset="0.382" stop-color="#eaea00"/><stop offset="0.382" stop-color="#9cea00"/><stop offset="0.495" stop-color="#9cea00"/><stop offset="0.495" stop-color="#4eea00"/><stop offset="0.609" stop-color="#4eea00"/><stop offset="0.609" stop-color="#0bea0b"/><stop offset="0.723" stop-color="#0bea0b"/><stop offset="0.723" stop-color="#00ea4e"/><stop offset="0.836" stop-color="#00ea4e"/><stop offset="0.836" stop-color="#00ea8c"/><stop offset="0.950" stop-color="#00ea8c"/><stop offset="0.950" stop-color="#00eacb"/><stop offset="1.000" stop-color="#00eacb"/></linearGradient><linearGradient id="rb119" gradientUnits="userSpaceOnUse" x1="484.22" y1="239.37" x2="486.28" y2="310.47"><stop offset="0.000" stop-color="#ea0000"/><stop offset="0.030" stop-color="#ea0000"/><stop offset="0.030" stop-color="#ea4e00"/><stop offset="0.146" stop-color="#ea4e00"/><stop offset="0.146" stop-color="#ea9c00"/><stop offset="0.262" stop-color="#ea9c00"/><stop offset="0.262" stop-color="#eaea00"/><stop offset="0.379" stop-color="#eaea00"/><stop offset="0.379" stop-color="#9cea00"/><stop offset="0.495" stop-color="#9cea00"/><stop offset="0.495" stop-color="#4eea00"/><stop offset="0.612" stop-color="#4eea00"/><stop offset="0.612" stop-color="#0bea0b"/><stop offset="0.728" stop-color="#0bea0b"/><stop offset="0.728" stop-color="#00ea4e"/><stop offset="0.845" stop-color="#00ea4e"/><stop offset="0.845" stop-color="#00ea8c"/><stop offset="0.961" stop-color="#00ea8c"/><stop offset="0.961" stop-color="#00eacb"/><stop offset="1.000" stop-color="#00eacb"/></linearGradient><linearGradient id="rb120" gradientUnits="userSpaceOnUse" x1="485.93" y1="242.15" x2="487.17" y2="311.17"><stop offset="0.000" stop-color="#ea4e00"/><stop offset="0.099" stop-color="#ea4e00"/><stop offset="0.099" stop-color="#ea9c00"/><stop offset="0.223" stop-color="#ea9c00"/><stop offset="0.223" stop-color="#eaea00"/><stop offset="0.347" stop-color="#eaea00"/><stop offset="0.347" stop-color="#9cea00"/><stop offset="0.470" stop-color="#9cea00"/><stop offset="0.470" stop-color="#4eea00"/><stop offset="0.594" stop-color="#4eea00"/><stop offset="0.594" stop-color="#0bea0b"/><stop offset="0.718" stop-color="#0bea0b"/><stop offset="0.718" stop-color="#00ea4e"/><stop offset="0.842" stop-color="#00ea4e"/><stop offset="0.842" stop-color="#00ea8c"/><stop offset="0.965" stop-color="#00ea8c"/><stop offset="0.965" stop-color="#00eacb"/><stop offset="1.000" stop-color="#00eacb"/></linearGradient><linearGradient id="rb121" gradientUnits="userSpaceOnUse" x1="487.20" y1="246.85" x2="487.50" y2="311.50"><stop offset="0.000" stop-color="#e04a00"/><stop offset="-0.000" stop-color="#e04a00"/><stop offset="-0.000" stop-color="#e09500"/><stop offset="0.137" stop-color="#e09500"/><stop offset="0.137" stop-color="#e0e000"/><stop offset="0.275" stop-color="#e0e000"/><stop offset="0.275" stop-color="#95e000"/><stop offset="0.412" stop-color="#95e000"/><stop offset="0.412" stop-color="#4ae000"/><stop offset="0.549" stop-color="#4ae000"/><stop offset="0.549" stop-color="#0ae00a"/><stop offset="0.687" stop-color="#0ae00a"/><stop offset="0.687" stop-color="#00e04a"/><stop offset="0.824" stop-color="#00e04a"/><stop offset="0.824" stop-color="#00e086"/><stop offset="0.962" stop-color="#00e086"/><stop offset="0.962" stop-color="#00e0c2"/><stop offset="1.000" stop-color="#00e0c2"/></linearGradient><linearGradient id="rb122" gradientUnits="userSpaceOnUse" x1="488.47" y1="251.55" x2="487.83" y2="311.83"><stop offset="0.000" stop-color="#d68e00"/><stop offset="0.031" stop-color="#d68e00"/><stop offset="0.031" stop-color="#d6d600"/><stop offset="0.185" stop-color="#d6d600"/><stop offset="0.185" stop-color="#8ed600"/><stop offset="0.340" stop-color="#8ed600"/><stop offset="0.340" stop-color="#47d600"/><stop offset="0.494" stop-color="#47d600"/><stop offset="0.494" stop-color="#0ad60a"/><stop offset="0.648" stop-color="#0ad60a"/><stop offset="0.648" stop-color="#00d647"/><stop offset="0.802" stop-color="#00d647"/><stop offset="0.802" stop-color="#00d680"/><stop offset="0.957" stop-color="#00d680"/><stop offset="0.957" stop-color="#00d6b9"/><stop offset="1.000" stop-color="#00d6b9"/></linearGradient><linearGradient id="rb123" gradientUnits="userSpaceOnUse" x1="489.53" y1="255.62" x2="488.18" y2="312.17"><stop offset="0.000" stop-color="#d6d600"/><stop offset="0.092" stop-color="#d6d600"/><stop offset="0.092" stop-color="#8ed600"/><stop offset="0.264" stop-color="#8ed600"/><stop offset="0.264" stop-color="#47d600"/><stop offset="0.436" stop-color="#47d600"/><stop offset="0.436" stop-color="#0ad60a"/><stop offset="0.608" stop-color="#0ad60a"/><stop offset="0.608" stop-color="#00d647"/><stop offset="0.780" stop-color="#00d647"/><stop offset="0.780" stop-color="#00d680"/><stop offset="0.952" stop-color="#00d680"/><stop offset="0.952" stop-color="#00d6b9"/><stop offset="1.000" stop-color="#00d6b9"/></linearGradient><linearGradient id="rb124" gradientUnits="userSpaceOnUse" x1="490.40" y1="259.05" x2="488.55" y2="312.50"><stop offset="0.000" stop-color="#d6d600"/><stop offset="-0.000" stop-color="#d6d600"/><stop offset="-0.000" stop-color="#8ed600"/><stop offset="0.189" stop-color="#8ed600"/><stop offset="0.189" stop-color="#47d600"/><stop offset="0.379" stop-color="#47d600"/><stop offset="0.379" stop-color="#0ad60a"/><stop offset="0.568" stop-color="#0ad60a"/><stop offset="0.568" stop-color="#00d647"/><stop offset="0.758" stop-color="#00d647"/><stop offset="0.758" stop-color="#00d680"/><stop offset="0.947" stop-color="#00d680"/><stop offset="0.947" stop-color="#00d6b9"/><stop offset="1.000" stop-color="#00d6b9"/></linearGradient><linearGradient id="rb125" gradientUnits="userSpaceOnUse" x1="491.27" y1="262.48" x2="488.92" y2="312.83"><stop offset="0.000" stop-color="#8ed600"/><stop offset="0.098" stop-color="#8ed600"/><stop offset="0.098" stop-color="#47d600"/><stop offset="0.309" stop-color="#47d600"/><stop offset="0.309" stop-color="#0ad60a"/><stop offset="0.520" stop-color="#0ad60a"/><stop offset="0.520" stop-color="#00d647"/><stop offset="0.730" stop-color="#00d647"/><stop offset="0.730" stop-color="#00d680"/><stop offset="0.941" stop-color="#00d680"/><stop offset="0.941" stop-color="#00d6b9"/><stop offset="1.000" stop-color="#00d6b9"/></linearGradient><linearGradient id="rb126" gradientUnits="userSpaceOnUse" x1="492.33" y1="268.05" x2="489.42" y2="313.58"><stop offset="0.000" stop-color="#47d600"/><stop offset="0.196" stop-color="#47d600"/><stop offset="0.196" stop-color="#0ad60a"/><stop offset="0.441" stop-color="#0ad60a"/><stop offset="0.441" stop-color="#00d647"/><stop offset="0.686" stop-color="#00d647"/><stop offset="0.686" stop-color="#00d680"/><stop offset="0.931" stop-color="#00d680"/><stop offset="0.931" stop-color="#00d6b9"/><stop offset="1.000" stop-color="#00d6b9"/></linearGradient><linearGradient id="rb127" gradientUnits="userSpaceOnUse" x1="493.60" y1="275.75" x2="490.05" y2="314.75"><stop offset="0.000" stop-color="#47d600"/><stop offset="-0.000" stop-color="#47d600"/><stop offset="-0.000" stop-color="#0ad60a"/><stop offset="0.305" stop-color="#0ad60a"/><stop offset="0.305" stop-color="#00d647"/><stop offset="0.610" stop-color="#00d647"/><stop offset="0.610" stop-color="#00d680"/><stop offset="0.915" stop-color="#00d680"/><stop offset="0.915" stop-color="#00d6b9"/><stop offset="1.000" stop-color="#00d6b9"/></linearGradient><linearGradient id="rb128" gradientUnits="userSpaceOnUse" x1="494.87" y1="283.45" x2="490.68" y2="315.92"><stop offset="0.000" stop-color="#0ad60a"/><stop offset="0.081" stop-color="#0ad60a"/><stop offset="0.081" stop-color="#00d647"/><stop offset="0.484" stop-color="#00d647"/><stop offset="0.484" stop-color="#00d680"/><stop offset="0.887" stop-color="#00d680"/><stop offset="0.887" stop-color="#00d6b9"/><stop offset="1.000" stop-color="#00d6b9"/></linearGradient><linearGradient id="rb129" gradientUnits="userSpaceOnUse" x1="496.37" y1="288.80" x2="491.33" y2="317.08"><stop offset="0.000" stop-color="#00d647"/><stop offset="0.362" stop-color="#00d647"/><stop offset="0.362" stop-color="#00d680"/><stop offset="0.906" stop-color="#00d680"/><stop offset="0.906" stop-color="#00d6b9"/><stop offset="1.000" stop-color="#00d6b9"/></linearGradient><linearGradient id="rb130" gradientUnits="userSpaceOnUse" x1="498.10" y1="291.80" x2="492.00" y2="318.25"><stop offset="0.000" stop-color="#00d647"/><stop offset="0.294" stop-color="#00d647"/><stop offset="0.294" stop-color="#00d680"/><stop offset="1.000" stop-color="#00d680"/></linearGradient><linearGradient id="rb131" gradientUnits="userSpaceOnUse" x1="499.83" y1="294.80" x2="492.67" y2="319.42"><stop offset="0.000" stop-color="#00d647"/><stop offset="0.152" stop-color="#00d647"/><stop offset="0.152" stop-color="#00d680"/><stop offset="1.000" stop-color="#00d680"/></linearGradient><linearGradient id="rb132" gradientUnits="userSpaceOnUse" x1="501.23" y1="300.25" x2="493.07" y2="320.13"><stop offset="0.000" stop-color="#00d680"/><stop offset="1.000" stop-color="#00d680"/></linearGradient><linearGradient id="rb133" gradientUnits="userSpaceOnUse" x1="502.30" y1="308.15" x2="493.20" y2="320.40"><stop offset="0.000" stop-color="#00d680"/><stop offset="0.833" stop-color="#00d680"/><stop offset="0.833" stop-color="#00d647"/><stop offset="1.000" stop-color="#00d647"/></linearGradient><linearGradient id="rb134" gradientUnits="userSpaceOnUse" x1="503.37" y1="316.05" x2="493.33" y2="320.67"><stop offset="0.000" stop-color="#00d680"/><stop offset="0.543" stop-color="#00d680"/><stop offset="0.543" stop-color="#00d647"/><stop offset="1.000" stop-color="#00d647"/></linearGradient><linearGradient id="rb135" gradientUnits="userSpaceOnUse" x1="504.25" y1="322.00" x2="492.40" y2="322.52"><stop offset="0.000" stop-color="#00d680"/><stop offset="0.440" stop-color="#00d680"/><stop offset="0.440" stop-color="#00d647"/><stop offset="0.887" stop-color="#00d647"/><stop offset="0.887" stop-color="#0ad60a"/><stop offset="1.000" stop-color="#0ad60a"/></linearGradient><linearGradient id="rb136" gradientUnits="userSpaceOnUse" x1="504.95" y1="326.00" x2="490.40" y2="325.95"><stop offset="0.000" stop-color="#00d6b9"/><stop offset="0.102" stop-color="#00d6b9"/><stop offset="0.102" stop-color="#00d680"/><stop offset="0.386" stop-color="#00d680"/><stop offset="0.386" stop-color="#00d647"/><stop offset="0.670" stop-color="#00d647"/><stop offset="0.670" stop-color="#0ad60a"/><stop offset="0.955" stop-color="#0ad60a"/><stop offset="0.955" stop-color="#47d600"/><stop offset="1.000" stop-color="#47d600"/></linearGradient><linearGradient id="rb137" gradientUnits="userSpaceOnUse" x1="505.65" y1="330.00" x2="488.40" y2="329.38"><stop offset="0.000" stop-color="#00d6b9"/><stop offset="0.153" stop-color="#00d6b9"/><stop offset="0.153" stop-color="#00d680"/><stop offset="0.361" stop-color="#00d680"/><stop offset="0.361" stop-color="#00d647"/><stop offset="0.569" stop-color="#00d647"/><stop offset="0.569" stop-color="#0ad60a"/><stop offset="0.778" stop-color="#0ad60a"/><stop offset="0.778" stop-color="#47d600"/><stop offset="0.986" stop-color="#47d600"/><stop offset="0.986" stop-color="#8ed600"/><stop offset="1.000" stop-color="#8ed600"/></linearGradient><linearGradient id="rb138" gradientUnits="userSpaceOnUse" x1="506.33" y1="333.57" x2="487.08" y2="332.75"><stop offset="0.000" stop-color="#00abd6"/><stop offset="0.014" stop-color="#00abd6"/><stop offset="0.014" stop-color="#00d6b9"/><stop offset="0.195" stop-color="#00d6b9"/><stop offset="0.195" stop-color="#00d680"/><stop offset="0.375" stop-color="#00d680"/><stop offset="0.375" stop-color="#00d647"/><stop offset="0.555" stop-color="#00d647"/><stop offset="0.555" stop-color="#0ad60a"/><stop offset="0.736" stop-color="#0ad60a"/><stop offset="0.736" stop-color="#47d600"/><stop offset="0.916" stop-color="#47d600"/><stop offset="0.916" stop-color="#8ed600"/><stop offset="1.000" stop-color="#8ed600"/></linearGradient><linearGradient id="rb139" gradientUnits="userSpaceOnUse" x1="507.00" y1="336.70" x2="486.45" y2="336.05"><stop offset="0.000" stop-color="#00abd6"/><stop offset="0.069" stop-color="#00abd6"/><stop offset="0.069" stop-color="#00d6b9"/><stop offset="0.243" stop-color="#00d6b9"/><stop offset="0.243" stop-color="#00d680"/><stop offset="0.417" stop-color="#00d680"/><stop offset="0.417" stop-color="#00d647"/><stop offset="0.590" stop-color="#00d647"/><stop offset="0.590" stop-color="#0ad60a"/><stop offset="0.764" stop-color="#0ad60a"/><stop offset="0.764" stop-color="#47d600"/><stop offset="0.938" stop-color="#47d600"/><stop offset="0.938" stop-color="#8ed600"/><stop offset="1.000" stop-color="#8ed600"/></linearGradient><linearGradient id="rb140" gradientUnits="userSpaceOnUse" x1="507.67" y1="339.83" x2="485.82" y2="339.35"><stop offset="0.000" stop-color="#00abd6"/><stop offset="0.121" stop-color="#00abd6"/><stop offset="0.121" stop-color="#00d6b9"/><stop offset="0.288" stop-color="#00d6b9"/><stop offset="0.288" stop-color="#00d680"/><stop offset="0.455" stop-color="#00d680"/><stop offset="0.455" stop-color="#00d647"/><stop offset="0.623" stop-color="#00d647"/><stop offset="0.623" stop-color="#0ad60a"/><stop offset="0.790" stop-color="#0ad60a"/><stop offset="0.790" stop-color="#47d600"/><stop offset="0.958" stop-color="#47d600"/><stop offset="0.958" stop-color="#8ed600"/><stop offset="1.000" stop-color="#8ed600"/></linearGradient><linearGradient id="rb141" gradientUnits="userSpaceOnUse" x1="508.20" y1="344.10" x2="484.92" y2="343.67"><stop offset="0.000" stop-color="#0063d6"/><stop offset="0.011" stop-color="#0063d6"/><stop offset="0.011" stop-color="#00abd6"/><stop offset="0.176" stop-color="#00abd6"/><stop offset="0.176" stop-color="#00d6b9"/><stop offset="0.341" stop-color="#00d6b9"/><stop offset="0.341" stop-color="#00d680"/><stop offset="0.507" stop-color="#00d680"/><stop offset="0.507" stop-color="#00d647"/><stop offset="0.672" stop-color="#00d647"/><stop offset="0.672" stop-color="#0ad60a"/><stop offset="0.837" stop-color="#0ad60a"/><stop offset="0.837" stop-color="#47d600"/><stop offset="1.000" stop-color="#47d600"/></linearGradient><linearGradient id="rb142" gradientUnits="userSpaceOnUse" x1="508.60" y1="349.50" x2="483.75" y2="349.00"><stop offset="0.000" stop-color="#0063d6"/><stop offset="0.073" stop-color="#0063d6"/><stop offset="0.073" stop-color="#00abd6"/><stop offset="0.240" stop-color="#00abd6"/><stop offset="0.240" stop-color="#00d6b9"/><stop offset="0.407" stop-color="#00d6b9"/><stop offset="0.407" stop-color="#00d680"/><stop offset="0.573" stop-color="#00d680"/><stop offset="0.573" stop-color="#00d647"/><stop offset="0.740" stop-color="#00d647"/><stop offset="0.740" stop-color="#0ad60a"/><stop offset="0.907" stop-color="#0ad60a"/><stop offset="0.907" stop-color="#47d600"/><stop offset="1.000" stop-color="#47d600"/></linearGradient><linearGradient id="rb143" gradientUnits="userSpaceOnUse" x1="509.00" y1="354.90" x2="482.58" y2="354.33"><stop offset="0.000" stop-color="#0063d6"/><stop offset="0.137" stop-color="#0063d6"/><stop offset="0.137" stop-color="#00abd6"/><stop offset="0.305" stop-color="#00abd6"/><stop offset="0.305" stop-color="#00d6b9"/><stop offset="0.473" stop-color="#00d6b9"/><stop offset="0.473" stop-color="#00d680"/><stop offset="0.641" stop-color="#00d680"/><stop offset="0.641" stop-color="#00d647"/><stop offset="0.809" stop-color="#00d647"/><stop offset="0.809" stop-color="#0ad60a"/><stop offset="0.978" stop-color="#0ad60a"/><stop offset="0.978" stop-color="#47d600"/><stop offset="1.000" stop-color="#47d600"/></linearGradient><linearGradient id="rb144" gradientUnits="userSpaceOnUse" x1="508.42" y1="358.88" x2="481.62" y2="358.67"><stop offset="0.000" stop-color="#0063d6"/><stop offset="0.155" stop-color="#0063d6"/><stop offset="0.155" stop-color="#00abd6"/><stop offset="0.333" stop-color="#00abd6"/><stop offset="0.333" stop-color="#00d6b9"/><stop offset="0.512" stop-color="#00d6b9"/><stop offset="0.512" stop-color="#00d680"/><stop offset="0.690" stop-color="#00d680"/><stop offset="0.690" stop-color="#00d647"/><stop offset="0.869" stop-color="#00d647"/><stop offset="0.869" stop-color="#0ad60a"/><stop offset="1.000" stop-color="#0ad60a"/></linearGradient><linearGradient id="rb145" gradientUnits="userSpaceOnUse" x1="506.85" y1="361.45" x2="480.85" y2="362.00"><stop offset="0.000" stop-color="#0063d6"/><stop offset="0.121" stop-color="#0063d6"/><stop offset="0.121" stop-color="#00abd6"/><stop offset="0.323" stop-color="#00abd6"/><stop offset="0.323" stop-color="#00d6b9"/><stop offset="0.524" stop-color="#00d6b9"/><stop offset="0.524" stop-color="#00d680"/><stop offset="0.726" stop-color="#00d680"/><stop offset="0.726" stop-color="#00d647"/><stop offset="0.927" stop-color="#00d647"/><stop offset="0.927" stop-color="#0ad60a"/><stop offset="1.000" stop-color="#0ad60a"/></linearGradient><linearGradient id="rb146" gradientUnits="userSpaceOnUse" x1="505.28" y1="364.02" x2="480.08" y2="365.33"><stop offset="0.000" stop-color="#0063d6"/><stop offset="0.077" stop-color="#0063d6"/><stop offset="0.077" stop-color="#00abd6"/><stop offset="0.309" stop-color="#00abd6"/><stop offset="0.309" stop-color="#00d6b9"/><stop offset="0.540" stop-color="#00d6b9"/><stop offset="0.540" stop-color="#00d680"/><stop offset="0.772" stop-color="#00d680"/><stop offset="0.772" stop-color="#00d647"/><stop offset="1.000" stop-color="#00d647"/></linearGradient><linearGradient id="rb147" gradientUnits="userSpaceOnUse" x1="503.52" y1="367.30" x2="479.25" y2="368.67"><stop offset="0.000" stop-color="#0063d6"/><stop offset="0.011" stop-color="#0063d6"/><stop offset="0.011" stop-color="#00abd6"/><stop offset="0.285" stop-color="#00abd6"/><stop offset="0.285" stop-color="#00d6b9"/><stop offset="0.558" stop-color="#00d6b9"/><stop offset="0.558" stop-color="#00d680"/><stop offset="0.832" stop-color="#00d680"/><stop offset="0.832" stop-color="#00d647"/><stop offset="1.000" stop-color="#00d647"/></linearGradient><linearGradient id="rb148" gradientUnits="userSpaceOnUse" x1="501.55" y1="371.30" x2="478.35" y2="372.00"><stop offset="0.000" stop-color="#00abd6"/><stop offset="0.243" stop-color="#00abd6"/><stop offset="0.243" stop-color="#00d6b9"/><stop offset="0.581" stop-color="#00d6b9"/><stop offset="0.581" stop-color="#00d680"/><stop offset="0.919" stop-color="#00d680"/><stop offset="0.919" stop-color="#00d647"/><stop offset="1.000" stop-color="#00d647"/></linearGradient><linearGradient id="rb149" gradientUnits="userSpaceOnUse" x1="499.58" y1="375.30" x2="477.45" y2="375.33"><stop offset="0.000" stop-color="#00abd6"/><stop offset="0.176" stop-color="#00abd6"/><stop offset="0.176" stop-color="#00d6b9"/><stop offset="0.618" stop-color="#00d6b9"/><stop offset="0.618" stop-color="#00d680"/><stop offset="1.000" stop-color="#00d680"/></linearGradient><linearGradient id="rb150" gradientUnits="userSpaceOnUse" x1="496.88" y1="379.02" x2="476.60" y2="378.48"><stop offset="0.000" stop-color="#00abd6"/><stop offset="0.141" stop-color="#00abd6"/><stop offset="0.141" stop-color="#00d6b9"/><stop offset="0.727" stop-color="#00d6b9"/><stop offset="0.727" stop-color="#00d680"/><stop offset="1.000" stop-color="#00d680"/></linearGradient><linearGradient id="rb151" gradientUnits="userSpaceOnUse" x1="493.45" y1="382.45" x2="475.80" y2="381.45"><stop offset="0.000" stop-color="#00abd6"/><stop offset="0.188" stop-color="#00abd6"/><stop offset="0.188" stop-color="#00d6b9"/><stop offset="0.969" stop-color="#00d6b9"/><stop offset="0.969" stop-color="#00d680"/><stop offset="1.000" stop-color="#00d680"/></linearGradient><linearGradient id="rb152" gradientUnits="userSpaceOnUse" x1="490.02" y1="385.88" x2="475.00" y2="384.42"><stop offset="0.000" stop-color="#00abd6"/><stop offset="0.281" stop-color="#00abd6"/><stop offset="0.281" stop-color="#00d6b9"/><stop offset="1.000" stop-color="#00d6b9"/></linearGradient><linearGradient id="rb153" gradientUnits="userSpaceOnUse" x1="486.58" y1="389.88" x2="473.92" y2="387.33"><stop offset="0.000" stop-color="#00abd6"/><stop offset="0.783" stop-color="#00abd6"/><stop offset="0.783" stop-color="#00d6b9"/><stop offset="1.000" stop-color="#00d6b9"/></linearGradient><linearGradient id="rb154" gradientUnits="userSpaceOnUse" x1="483.15" y1="394.45" x2="472.55" y2="390.20"><stop offset="0.000" stop-color="#00abd6"/><stop offset="1.000" stop-color="#00abd6"/></linearGradient><linearGradient id="rb155" gradientUnits="userSpaceOnUse" x1="479.72" y1="399.02" x2="471.18" y2="393.07"><stop offset="0.000" stop-color="#0060ce"/><stop offset="0.868" stop-color="#0060ce"/><stop offset="0.868" stop-color="#00a5ce"/><stop offset="1.000" stop-color="#00a5ce"/></linearGradient><linearGradient id="rb156" gradientUnits="userSpaceOnUse" x1="476.87" y1="402.00" x2="470.18" y2="395.63"><stop offset="0.000" stop-color="#005cc6"/><stop offset="1.000" stop-color="#005cc6"/></linearGradient><linearGradient id="rb157" gradientUnits="userSpaceOnUse" x1="474.60" y1="403.40" x2="469.55" y2="397.90"><stop offset="0.000" stop-color="#001ac6"/><stop offset="0.333" stop-color="#001ac6"/><stop offset="0.333" stop-color="#005cc6"/><stop offset="1.000" stop-color="#005cc6"/></linearGradient><linearGradient id="rb158" gradientUnits="userSpaceOnUse" x1="472.33" y1="404.80" x2="468.92" y2="400.17"><stop offset="0.000" stop-color="#001ac6"/><stop offset="1.000" stop-color="#001ac6"/></linearGradient><linearGradient id="rb159" gradientUnits="userSpaceOnUse" x1="469.67" y1="404.08" x2="467.67" y2="402.42"><stop offset="0.000" stop-color="#0058bd"/><stop offset="0.333" stop-color="#0058bd"/><stop offset="0.333" stop-color="#0019bd"/><stop offset="1.000" stop-color="#0019bd"/></linearGradient><linearGradient id="rb160" gradientUnits="userSpaceOnUse" x1="466.60" y1="401.25" x2="465.80" y2="404.65"><stop offset="0.000" stop-color="#008db1"/><stop offset="0.300" stop-color="#008db1"/><stop offset="0.300" stop-color="#0052b1"/><stop offset="1.000" stop-color="#0052b1"/></linearGradient><linearGradient id="rb161" gradientUnits="userSpaceOnUse" x1="463.53" y1="398.42" x2="463.93" y2="406.88"><stop offset="0.000" stop-color="#00a48e"/><stop offset="0.293" stop-color="#00a48e"/><stop offset="0.293" stop-color="#0083a4"/><stop offset="0.793" stop-color="#0083a4"/><stop offset="0.793" stop-color="#004ca4"/><stop offset="1.000" stop-color="#004ca4"/></linearGradient><linearGradient id="rb162" gradientUnits="userSpaceOnUse" x1="460.97" y1="396.20" x2="461.50" y2="408.30"><stop offset="0.000" stop-color="#00965a"/><stop offset="0.209" stop-color="#00965a"/><stop offset="0.209" stop-color="#009682"/><stop offset="0.592" stop-color="#009682"/><stop offset="0.592" stop-color="#007896"/><stop offset="0.974" stop-color="#007896"/><stop offset="0.974" stop-color="#004696"/><stop offset="1.000" stop-color="#004696"/></linearGradient><linearGradient id="rb163" gradientUnits="userSpaceOnUse" x1="458.90" y1="394.60" x2="458.50" y2="408.90"><stop offset="0.000" stop-color="#008f2f"/><stop offset="0.079" stop-color="#008f2f"/><stop offset="0.079" stop-color="#008f56"/><stop offset="0.408" stop-color="#008f56"/><stop offset="0.408" stop-color="#008f7c"/><stop offset="0.737" stop-color="#008f7c"/><stop offset="0.737" stop-color="#00728f"/><stop offset="1.000" stop-color="#00728f"/></linearGradient><linearGradient id="rb164" gradientUnits="userSpaceOnUse" x1="456.83" y1="393.00" x2="455.50" y2="409.50"><stop offset="0.000" stop-color="#00882d"/><stop offset="0.269" stop-color="#00882d"/><stop offset="0.269" stop-color="#008851"/><stop offset="0.558" stop-color="#008851"/><stop offset="0.558" stop-color="#008876"/><stop offset="0.846" stop-color="#008876"/><stop offset="0.846" stop-color="#006d88"/><stop offset="1.000" stop-color="#006d88"/></linearGradient><linearGradient id="rb165" gradientUnits="userSpaceOnUse" x1="454.67" y1="392.83" x2="452.67" y2="410.33"><stop offset="0.000" stop-color="#068406"/><stop offset="0.077" stop-color="#068406"/><stop offset="0.077" stop-color="#00842c"/><stop offset="0.350" stop-color="#00842c"/><stop offset="0.350" stop-color="#00844f"/><stop offset="0.624" stop-color="#00844f"/><stop offset="0.624" stop-color="#008473"/><stop offset="0.898" stop-color="#008473"/><stop offset="0.898" stop-color="#006a84"/><stop offset="1.000" stop-color="#006a84"/></linearGradient><linearGradient id="rb166" gradientUnits="userSpaceOnUse" x1="452.40" y1="394.10" x2="450.00" y2="411.40"><stop offset="0.000" stop-color="#068406"/><stop offset="0.078" stop-color="#068406"/><stop offset="0.078" stop-color="#00842c"/><stop offset="0.356" stop-color="#00842c"/><stop offset="0.356" stop-color="#00844f"/><stop offset="0.633" stop-color="#00844f"/><stop offset="0.633" stop-color="#008473"/><stop offset="0.911" stop-color="#008473"/><stop offset="0.911" stop-color="#006a84"/><stop offset="1.000" stop-color="#006a84"/></linearGradient><linearGradient id="rb167" gradientUnits="userSpaceOnUse" x1="450.13" y1="395.37" x2="447.33" y2="412.47"><stop offset="0.000" stop-color="#068406"/><stop offset="0.079" stop-color="#068406"/><stop offset="0.079" stop-color="#00842c"/><stop offset="0.361" stop-color="#00842c"/><stop offset="0.361" stop-color="#00844f"/><stop offset="0.643" stop-color="#00844f"/><stop offset="0.643" stop-color="#008473"/><stop offset="0.925" stop-color="#008473"/><stop offset="0.925" stop-color="#006a84"/><stop offset="1.000" stop-color="#006a84"/></linearGradient><linearGradient id="rb168" gradientUnits="userSpaceOnUse" x1="447.83" y1="396.58" x2="444.50" y2="413.62"><stop offset="0.000" stop-color="#068506"/><stop offset="0.066" stop-color="#068506"/><stop offset="0.066" stop-color="#00852c"/><stop offset="0.359" stop-color="#00852c"/><stop offset="0.359" stop-color="#008550"/><stop offset="0.652" stop-color="#008550"/><stop offset="0.652" stop-color="#008573"/><stop offset="0.945" stop-color="#008573"/><stop offset="0.945" stop-color="#006a85"/><stop offset="1.000" stop-color="#006a85"/></linearGradient><linearGradient id="rb169" gradientUnits="userSpaceOnUse" x1="445.50" y1="397.75" x2="441.50" y2="414.85"><stop offset="0.000" stop-color="#068606"/><stop offset="0.038" stop-color="#068606"/><stop offset="0.038" stop-color="#00862c"/><stop offset="0.350" stop-color="#00862c"/><stop offset="0.350" stop-color="#008650"/><stop offset="0.663" stop-color="#008650"/><stop offset="0.663" stop-color="#008674"/><stop offset="0.975" stop-color="#008674"/><stop offset="0.975" stop-color="#006b86"/><stop offset="1.000" stop-color="#006b86"/></linearGradient><linearGradient id="rb170" gradientUnits="userSpaceOnUse" x1="443.17" y1="398.92" x2="438.50" y2="416.08"><stop offset="0.000" stop-color="#068806"/><stop offset="0.004" stop-color="#068806"/><stop offset="0.004" stop-color="#00882d"/><stop offset="0.339" stop-color="#00882d"/><stop offset="0.339" stop-color="#008851"/><stop offset="0.674" stop-color="#008851"/><stop offset="0.674" stop-color="#008876"/><stop offset="1.000" stop-color="#008876"/></linearGradient><linearGradient id="rb171" gradientUnits="userSpaceOnUse" x1="440.33" y1="400.25" x2="435.50" y2="417.17"><stop offset="0.000" stop-color="#068a06"/><stop offset="0.005" stop-color="#068a06"/><stop offset="0.005" stop-color="#008a2e"/><stop offset="0.352" stop-color="#008a2e"/><stop offset="0.352" stop-color="#008a53"/><stop offset="0.699" stop-color="#008a53"/><stop offset="0.699" stop-color="#008a78"/><stop offset="1.000" stop-color="#008a78"/></linearGradient><linearGradient id="rb172" gradientUnits="userSpaceOnUse" x1="437.00" y1="401.75" x2="432.50" y2="418.10"><stop offset="0.000" stop-color="#068d06"/><stop offset="0.042" stop-color="#068d06"/><stop offset="0.042" stop-color="#008d2f"/><stop offset="0.389" stop-color="#008d2f"/><stop offset="0.389" stop-color="#008d54"/><stop offset="0.736" stop-color="#008d54"/><stop offset="0.736" stop-color="#008d7a"/><stop offset="1.000" stop-color="#008d7a"/></linearGradient><linearGradient id="rb173" gradientUnits="userSpaceOnUse" x1="433.67" y1="403.25" x2="429.50" y2="419.03"><stop offset="0.000" stop-color="#069006"/><stop offset="0.079" stop-color="#069006"/><stop offset="0.079" stop-color="#009030"/><stop offset="0.426" stop-color="#009030"/><stop offset="0.426" stop-color="#009056"/><stop offset="0.773" stop-color="#009056"/><stop offset="0.773" stop-color="#00907c"/><stop offset="1.000" stop-color="#00907c"/></linearGradient><linearGradient id="rb174" gradientUnits="userSpaceOnUse" x1="430.53" y1="404.55" x2="426.63" y2="419.88"><stop offset="0.000" stop-color="#069306"/><stop offset="0.116" stop-color="#069306"/><stop offset="0.116" stop-color="#009331"/><stop offset="0.463" stop-color="#009331"/><stop offset="0.463" stop-color="#009358"/><stop offset="0.810" stop-color="#009358"/><stop offset="0.810" stop-color="#00937f"/><stop offset="1.000" stop-color="#00937f"/></linearGradient><linearGradient id="rb175" gradientUnits="userSpaceOnUse" x1="427.60" y1="405.65" x2="423.90" y2="420.65"><stop offset="0.000" stop-color="#079507"/><stop offset="0.153" stop-color="#079507"/><stop offset="0.153" stop-color="#009531"/><stop offset="0.500" stop-color="#009531"/><stop offset="0.500" stop-color="#009559"/><stop offset="0.847" stop-color="#009559"/><stop offset="0.847" stop-color="#009581"/><stop offset="1.000" stop-color="#009581"/></linearGradient><linearGradient id="rb176" gradientUnits="userSpaceOnUse" x1="424.67" y1="406.75" x2="421.17" y2="421.42"><stop offset="0.000" stop-color="#079807"/><stop offset="0.190" stop-color="#079807"/><stop offset="0.190" stop-color="#009832"/><stop offset="0.537" stop-color="#009832"/><stop offset="0.537" stop-color="#00985b"/><stop offset="0.884" stop-color="#00985b"/><stop offset="0.884" stop-color="#009884"/><stop offset="1.000" stop-color="#009884"/></linearGradient><linearGradient id="rb177" gradientUnits="userSpaceOnUse" x1="420.93" y1="407.58" x2="417.83" y2="422.00"><stop offset="0.000" stop-color="#079c07"/><stop offset="0.223" stop-color="#079c07"/><stop offset="0.223" stop-color="#009c34"/><stop offset="0.564" stop-color="#009c34"/><stop offset="0.564" stop-color="#009c5d"/><stop offset="0.905" stop-color="#009c5d"/><stop offset="0.905" stop-color="#009c87"/><stop offset="1.000" stop-color="#009c87"/></linearGradient><linearGradient id="rb178" gradientUnits="userSpaceOnUse" x1="416.40" y1="408.15" x2="413.90" y2="422.40"><stop offset="0.000" stop-color="#07a007"/><stop offset="0.250" stop-color="#07a007"/><stop offset="0.250" stop-color="#00a035"/><stop offset="0.579" stop-color="#00a035"/><stop offset="0.579" stop-color="#00a060"/><stop offset="0.908" stop-color="#00a060"/><stop offset="0.908" stop-color="#00a08b"/><stop offset="1.000" stop-color="#00a08b"/></linearGradient><linearGradient id="rb179" gradientUnits="userSpaceOnUse" x1="411.87" y1="408.72" x2="409.97" y2="422.80"><stop offset="0.000" stop-color="#07a407"/><stop offset="0.275" stop-color="#07a407"/><stop offset="0.275" stop-color="#00a436"/><stop offset="0.593" stop-color="#00a436"/><stop offset="0.593" stop-color="#00a462"/><stop offset="0.911" stop-color="#00a462"/><stop offset="0.911" stop-color="#00a48e"/><stop offset="1.000" stop-color="#00a48e"/></linearGradient><linearGradient id="rb180" gradientUnits="userSpaceOnUse" x1="407.32" y1="408.85" x2="405.98" y2="423.23"><stop offset="0.000" stop-color="#07a907"/><stop offset="0.299" stop-color="#07a907"/><stop offset="0.299" stop-color="#00a938"/><stop offset="0.607" stop-color="#00a938"/><stop offset="0.607" stop-color="#00a965"/><stop offset="0.914" stop-color="#00a965"/><stop offset="0.914" stop-color="#00a992"/><stop offset="1.000" stop-color="#00a992"/></linearGradient><linearGradient id="rb181" gradientUnits="userSpaceOnUse" x1="402.75" y1="408.55" x2="401.95" y2="423.70"><stop offset="0.000" stop-color="#3aae00"/><stop offset="0.024" stop-color="#3aae00"/><stop offset="0.024" stop-color="#08ae08"/><stop offset="0.321" stop-color="#08ae08"/><stop offset="0.321" stop-color="#00ae3a"/><stop offset="0.619" stop-color="#00ae3a"/><stop offset="0.619" stop-color="#00ae68"/><stop offset="0.917" stop-color="#00ae68"/><stop offset="0.917" stop-color="#00ae97"/><stop offset="1.000" stop-color="#00ae97"/></linearGradient><linearGradient id="rb182" gradientUnits="userSpaceOnUse" x1="398.18" y1="408.25" x2="397.92" y2="424.17"><stop offset="0.000" stop-color="#3bb300"/><stop offset="0.054" stop-color="#3bb300"/><stop offset="0.054" stop-color="#08b308"/><stop offset="0.342" stop-color="#08b308"/><stop offset="0.342" stop-color="#00b33b"/><stop offset="0.631" stop-color="#00b33b"/><stop offset="0.631" stop-color="#00b36b"/><stop offset="0.919" stop-color="#00b36b"/><stop offset="0.919" stop-color="#00b39b"/><stop offset="1.000" stop-color="#00b39b"/></linearGradient><linearGradient id="rb183" gradientUnits="userSpaceOnUse" x1="394.75" y1="406.97" x2="394.25" y2="425.00"><stop offset="0.000" stop-color="#3ebb00"/><stop offset="0.107" stop-color="#3ebb00"/><stop offset="0.107" stop-color="#08bb08"/><stop offset="0.375" stop-color="#08bb08"/><stop offset="0.375" stop-color="#00bb3e"/><stop offset="0.643" stop-color="#00bb3e"/><stop offset="0.643" stop-color="#00bb70"/><stop offset="0.911" stop-color="#00bb70"/><stop offset="0.911" stop-color="#00bba2"/><stop offset="1.000" stop-color="#00bba2"/></linearGradient><linearGradient id="rb184" gradientUnits="userSpaceOnUse" x1="392.45" y1="404.70" x2="390.95" y2="426.20"><stop offset="0.000" stop-color="#42c600"/><stop offset="0.173" stop-color="#42c600"/><stop offset="0.173" stop-color="#09c609"/><stop offset="0.413" stop-color="#09c609"/><stop offset="0.413" stop-color="#00c642"/><stop offset="0.654" stop-color="#00c642"/><stop offset="0.654" stop-color="#00c676"/><stop offset="0.894" stop-color="#00c676"/><stop offset="0.894" stop-color="#00c6ab"/><stop offset="1.000" stop-color="#00c6ab"/></linearGradient><linearGradient id="rb185" gradientUnits="userSpaceOnUse" x1="390.15" y1="402.43" x2="387.65" y2="427.40"><stop offset="0.000" stop-color="#8bd000"/><stop offset="0.009" stop-color="#8bd000"/><stop offset="0.009" stop-color="#45d000"/><stop offset="0.227" stop-color="#45d000"/><stop offset="0.227" stop-color="#09d009"/><stop offset="0.445" stop-color="#09d009"/><stop offset="0.445" stop-color="#00d045"/><stop offset="0.663" stop-color="#00d045"/><stop offset="0.663" stop-color="#00d07d"/><stop offset="0.881" stop-color="#00d07d"/><stop offset="0.881" stop-color="#00d0b4"/><stop offset="1.000" stop-color="#00d0b4"/></linearGradient><linearGradient id="rb186" gradientUnits="userSpaceOnUse" x1="387.00" y1="400.95" x2="384.50" y2="428.67"><stop offset="0.000" stop-color="#8ed600"/><stop offset="0.057" stop-color="#8ed600"/><stop offset="0.057" stop-color="#47d600"/><stop offset="0.259" stop-color="#47d600"/><stop offset="0.259" stop-color="#0ad60a"/><stop offset="0.462" stop-color="#0ad60a"/><stop offset="0.462" stop-color="#00d647"/><stop offset="0.665" stop-color="#00d647"/><stop offset="0.665" stop-color="#00d680"/><stop offset="0.868" stop-color="#00d680"/><stop offset="0.868" stop-color="#00d6b9"/><stop offset="1.000" stop-color="#00d6b9"/></linearGradient><linearGradient id="rb187" gradientUnits="userSpaceOnUse" x1="383.00" y1="400.25" x2="381.50" y2="430.00"><stop offset="0.000" stop-color="#8ed600"/><stop offset="0.085" stop-color="#8ed600"/><stop offset="0.085" stop-color="#47d600"/><stop offset="0.277" stop-color="#47d600"/><stop offset="0.277" stop-color="#0ad60a"/><stop offset="0.469" stop-color="#0ad60a"/><stop offset="0.469" stop-color="#00d647"/><stop offset="0.662" stop-color="#00d647"/><stop offset="0.662" stop-color="#00d680"/><stop offset="0.854" stop-color="#00d680"/><stop offset="0.854" stop-color="#00d6b9"/><stop offset="1.000" stop-color="#00d6b9"/></linearGradient><linearGradient id="rb188" gradientUnits="userSpaceOnUse" x1="379.00" y1="399.55" x2="378.50" y2="431.33"><stop offset="0.000" stop-color="#8ed600"/><stop offset="0.110" stop-color="#8ed600"/><stop offset="0.110" stop-color="#47d600"/><stop offset="0.293" stop-color="#47d600"/><stop offset="0.293" stop-color="#0ad60a"/><stop offset="0.476" stop-color="#0ad60a"/><stop offset="0.476" stop-color="#00d647"/><stop offset="0.659" stop-color="#00d647"/><stop offset="0.659" stop-color="#00d680"/><stop offset="0.841" stop-color="#00d680"/><stop offset="0.841" stop-color="#00d6b9"/><stop offset="1.000" stop-color="#00d6b9"/></linearGradient><linearGradient id="rb189" gradientUnits="userSpaceOnUse" x1="375.00" y1="399.40" x2="375.33" y2="432.58"><stop offset="0.000" stop-color="#8ed600"/><stop offset="0.116" stop-color="#8ed600"/><stop offset="0.116" stop-color="#47d600"/><stop offset="0.294" stop-color="#47d600"/><stop offset="0.294" stop-color="#0ad60a"/><stop offset="0.472" stop-color="#0ad60a"/><stop offset="0.472" stop-color="#00d647"/><stop offset="0.649" stop-color="#00d647"/><stop offset="0.649" stop-color="#00d680"/><stop offset="0.827" stop-color="#00d680"/><stop offset="0.827" stop-color="#00d6b9"/><stop offset="1.000" stop-color="#00d6b9"/></linearGradient><linearGradient id="rb190" gradientUnits="userSpaceOnUse" x1="371.00" y1="399.80" x2="372.00" y2="433.75"><stop offset="0.000" stop-color="#8ed600"/><stop offset="0.106" stop-color="#8ed600"/><stop offset="0.106" stop-color="#47d600"/><stop offset="0.282" stop-color="#47d600"/><stop offset="0.282" stop-color="#0ad60a"/><stop offset="0.458" stop-color="#0ad60a"/><stop offset="0.458" stop-color="#00d647"/><stop offset="0.634" stop-color="#00d647"/><stop offset="0.634" stop-color="#00d680"/><stop offset="0.810" stop-color="#00d680"/><stop offset="0.810" stop-color="#00d6b9"/><stop offset="0.986" stop-color="#00d6b9"/><stop offset="0.986" stop-color="#00abd6"/><stop offset="1.000" stop-color="#00abd6"/></linearGradient><linearGradient id="rb191" gradientUnits="userSpaceOnUse" x1="367.00" y1="400.20" x2="368.67" y2="434.92"><stop offset="0.000" stop-color="#8ed600"/><stop offset="0.095" stop-color="#8ed600"/><stop offset="0.095" stop-color="#47d600"/><stop offset="0.270" stop-color="#47d600"/><stop offset="0.270" stop-color="#0ad60a"/><stop offset="0.444" stop-color="#0ad60a"/><stop offset="0.444" stop-color="#00d647"/><stop offset="0.619" stop-color="#00d647"/><stop offset="0.619" stop-color="#00d680"/><stop offset="0.793" stop-color="#00d680"/><stop offset="0.793" stop-color="#00d6b9"/><stop offset="0.967" stop-color="#00d6b9"/><stop offset="0.967" stop-color="#00abd6"/><stop offset="1.000" stop-color="#00abd6"/></linearGradient><linearGradient id="rb192" gradientUnits="userSpaceOnUse" x1="363.58" y1="402.53" x2="365.25" y2="436.08"><stop offset="0.000" stop-color="#8ed600"/><stop offset="0.036" stop-color="#8ed600"/><stop offset="0.036" stop-color="#47d600"/><stop offset="0.216" stop-color="#47d600"/><stop offset="0.216" stop-color="#0ad60a"/><stop offset="0.397" stop-color="#0ad60a"/><stop offset="0.397" stop-color="#00d647"/><stop offset="0.577" stop-color="#00d647"/><stop offset="0.577" stop-color="#00d680"/><stop offset="0.757" stop-color="#00d680"/><stop offset="0.757" stop-color="#00d6b9"/><stop offset="0.938" stop-color="#00d6b9"/><stop offset="0.938" stop-color="#00abd6"/><stop offset="1.000" stop-color="#00abd6"/></linearGradient><linearGradient id="rb193" gradientUnits="userSpaceOnUse" x1="360.75" y1="406.80" x2="361.75" y2="437.25"><stop offset="0.000" stop-color="#47d600"/><stop offset="0.109" stop-color="#47d600"/><stop offset="0.109" stop-color="#0ad60a"/><stop offset="0.305" stop-color="#0ad60a"/><stop offset="0.305" stop-color="#00d647"/><stop offset="0.500" stop-color="#00d647"/><stop offset="0.500" stop-color="#00d680"/><stop offset="0.695" stop-color="#00d680"/><stop offset="0.695" stop-color="#00d6b9"/><stop offset="0.891" stop-color="#00d6b9"/><stop offset="0.891" stop-color="#00abd6"/><stop offset="1.000" stop-color="#00abd6"/></linearGradient><linearGradient id="rb194" gradientUnits="userSpaceOnUse" x1="357.92" y1="411.07" x2="358.25" y2="438.42"><stop offset="0.000" stop-color="#0ad60a"/><stop offset="0.196" stop-color="#0ad60a"/><stop offset="0.196" stop-color="#00d647"/><stop offset="0.409" stop-color="#00d647"/><stop offset="0.409" stop-color="#00d680"/><stop offset="0.622" stop-color="#00d680"/><stop offset="0.622" stop-color="#00d6b9"/><stop offset="0.835" stop-color="#00d6b9"/><stop offset="0.835" stop-color="#00abd6"/><stop offset="1.000" stop-color="#00abd6"/></linearGradient><linearGradient id="rb195" gradientUnits="userSpaceOnUse" x1="355.42" y1="414.25" x2="355.08" y2="439.42"><stop offset="0.000" stop-color="#0ad60a"/><stop offset="0.088" stop-color="#0ad60a"/><stop offset="0.088" stop-color="#00d647"/><stop offset="0.317" stop-color="#00d647"/><stop offset="0.317" stop-color="#00d680"/><stop offset="0.546" stop-color="#00d680"/><stop offset="0.546" stop-color="#00d6b9"/><stop offset="0.774" stop-color="#00d6b9"/><stop offset="0.774" stop-color="#00abd6"/><stop offset="1.000" stop-color="#00abd6"/></linearGradient><linearGradient id="rb196" gradientUnits="userSpaceOnUse" x1="353.25" y1="416.35" x2="352.25" y2="440.25"><stop offset="0.000" stop-color="#00d647"/><stop offset="0.231" stop-color="#00d647"/><stop offset="0.231" stop-color="#00d680"/><stop offset="0.471" stop-color="#00d680"/><stop offset="0.471" stop-color="#00d6b9"/><stop offset="0.712" stop-color="#00d6b9"/><stop offset="0.712" stop-color="#00abd6"/><stop offset="0.952" stop-color="#00abd6"/><stop offset="0.952" stop-color="#0063d6"/><stop offset="1.000" stop-color="#0063d6"/></linearGradient><linearGradient id="rb197" gradientUnits="userSpaceOnUse" x1="351.08" y1="418.45" x2="349.42" y2="441.08"><stop offset="0.000" stop-color="#00d647"/><stop offset="0.135" stop-color="#00d647"/><stop offset="0.135" stop-color="#00d680"/><stop offset="0.389" stop-color="#00d680"/><stop offset="0.389" stop-color="#00d6b9"/><stop offset="0.642" stop-color="#00d6b9"/><stop offset="0.642" stop-color="#00abd6"/><stop offset="0.895" stop-color="#00abd6"/><stop offset="0.895" stop-color="#0063d6"/><stop offset="1.000" stop-color="#0063d6"/></linearGradient><linearGradient id="rb198" gradientUnits="userSpaceOnUse" x1="349.08" y1="420.45" x2="346.67" y2="441.83"><stop offset="0.000" stop-color="#00d647"/><stop offset="0.036" stop-color="#00d647"/><stop offset="0.036" stop-color="#00d680"/><stop offset="0.304" stop-color="#00d680"/><stop offset="0.304" stop-color="#00d6b9"/><stop offset="0.571" stop-color="#00d6b9"/><stop offset="0.571" stop-color="#00abd6"/><stop offset="0.839" stop-color="#00abd6"/><stop offset="0.839" stop-color="#0063d6"/><stop offset="1.000" stop-color="#0063d6"/></linearGradient><linearGradient id="rb199" gradientUnits="userSpaceOnUse" x1="347.25" y1="422.35" x2="344.00" y2="442.50"><stop offset="0.000" stop-color="#00d680"/><stop offset="0.216" stop-color="#00d680"/><stop offset="0.216" stop-color="#00d6b9"/><stop offset="0.500" stop-color="#00d6b9"/><stop offset="0.500" stop-color="#00abd6"/><stop offset="0.784" stop-color="#00abd6"/><stop offset="0.784" stop-color="#0063d6"/><stop offset="1.000" stop-color="#0063d6"/></linearGradient><linearGradient id="rb200" gradientUnits="userSpaceOnUse" x1="345.42" y1="424.25" x2="341.33" y2="443.17"><stop offset="0.000" stop-color="#00d680"/><stop offset="0.117" stop-color="#00d680"/><stop offset="0.117" stop-color="#00d6b9"/><stop offset="0.419" stop-color="#00d6b9"/><stop offset="0.419" stop-color="#00abd6"/><stop offset="0.722" stop-color="#00abd6"/><stop offset="0.722" stop-color="#0063d6"/><stop offset="1.000" stop-color="#0063d6"/></linearGradient><linearGradient id="rb201" gradientUnits="userSpaceOnUse" x1="343.58" y1="426.58" x2="339.17" y2="443.75"><stop offset="0.000" stop-color="#00d6b9"/><stop offset="0.310" stop-color="#00d6b9"/><stop offset="0.310" stop-color="#00abd6"/><stop offset="0.642" stop-color="#00abd6"/><stop offset="0.642" stop-color="#0063d6"/><stop offset="0.973" stop-color="#0063d6"/><stop offset="0.973" stop-color="#001cd6"/><stop offset="1.000" stop-color="#001cd6"/></linearGradient><linearGradient id="rb202" gradientUnits="userSpaceOnUse" x1="341.75" y1="429.35" x2="337.50" y2="444.25"><stop offset="0.000" stop-color="#00d6b9"/><stop offset="0.152" stop-color="#00d6b9"/><stop offset="0.152" stop-color="#00abd6"/><stop offset="0.530" stop-color="#00abd6"/><stop offset="0.530" stop-color="#0063d6"/><stop offset="0.909" stop-color="#0063d6"/><stop offset="0.909" stop-color="#001cd6"/><stop offset="1.000" stop-color="#001cd6"/></linearGradient><linearGradient id="rb203" gradientUnits="userSpaceOnUse" x1="339.92" y1="432.12" x2="335.83" y2="444.75"><stop offset="0.000" stop-color="#00a5ce"/><stop offset="0.382" stop-color="#00a5ce"/><stop offset="0.382" stop-color="#0060ce"/><stop offset="0.824" stop-color="#0060ce"/><stop offset="0.824" stop-color="#001bce"/><stop offset="1.000" stop-color="#001bce"/></linearGradient><linearGradient id="rb204" gradientUnits="userSpaceOnUse" x1="338.20" y1="434.83" x2="334.30" y2="445.13"><stop offset="0.000" stop-color="#009fc6"/><stop offset="0.167" stop-color="#009fc6"/><stop offset="0.167" stop-color="#005cc6"/><stop offset="0.710" stop-color="#005cc6"/><stop offset="0.710" stop-color="#001ac6"/><stop offset="1.000" stop-color="#001ac6"/></linearGradient><linearGradient id="rb205" gradientUnits="userSpaceOnUse" x1="336.60" y1="437.50" x2="332.90" y2="445.40"><stop offset="0.000" stop-color="#005cc6"/><stop offset="0.529" stop-color="#005cc6"/><stop offset="0.529" stop-color="#001ac6"/><stop offset="1.000" stop-color="#001ac6"/></linearGradient><linearGradient id="rb206" gradientUnits="userSpaceOnUse" x1="335.00" y1="440.17" x2="331.50" y2="445.67"><stop offset="0.000" stop-color="#005cc6"/><stop offset="0.152" stop-color="#005cc6"/><stop offset="0.152" stop-color="#001ac6"/><stop offset="1.000" stop-color="#001ac6"/></linearGradient><linearGradient id="rb207" gradientUnits="userSpaceOnUse" x1="332.28" y1="441.45" x2="329.70" y2="445.67"><stop offset="0.000" stop-color="#001ac6"/><stop offset="1.000" stop-color="#001ac6"/></linearGradient><linearGradient id="rb208" gradientUnits="userSpaceOnUse" x1="328.44" y1="441.34" x2="327.50" y2="445.41"><stop offset="0.000" stop-color="#001ac6"/><stop offset="1.000" stop-color="#001ac6"/></linearGradient><linearGradient id="rb209" gradientUnits="userSpaceOnUse" x1="324.61" y1="441.23" x2="325.31" y2="445.15"><stop offset="0.000" stop-color="#001ac6"/><stop offset="1.000" stop-color="#001ac6"/></linearGradient><linearGradient id="rb210" gradientUnits="userSpaceOnUse" x1="321.01" y1="440.10" x2="322.02" y2="444.19"><stop offset="0.000" stop-color="#001ac6"/><stop offset="1.000" stop-color="#001ac6"/></linearGradient><linearGradient id="rb211" gradientUnits="userSpaceOnUse" x1="317.65" y1="437.93" x2="317.65" y2="442.52"><stop offset="0.000" stop-color="#005cc6"/><stop offset="0.400" stop-color="#005cc6"/><stop offset="0.400" stop-color="#001ac6"/><stop offset="1.000" stop-color="#001ac6"/></linearGradient><linearGradient id="rb212" gradientUnits="userSpaceOnUse" x1="314.29" y1="435.75" x2="313.28" y2="440.86"><stop offset="0.000" stop-color="#005cc6"/><stop offset="1.000" stop-color="#005cc6"/></linearGradient><linearGradient id="rb213" gradientUnits="userSpaceOnUse" x1="310.99" y1="432.75" x2="309.19" y2="438.57"><stop offset="0.000" stop-color="#00a5ce"/><stop offset="0.214" stop-color="#00a5ce"/><stop offset="0.214" stop-color="#0060ce"/><stop offset="1.000" stop-color="#0060ce"/></linearGradient><linearGradient id="rb214" gradientUnits="userSpaceOnUse" x1="307.76" y1="428.89" x2="305.39" y2="435.65"><stop offset="0.000" stop-color="#00abd6"/><stop offset="1.000" stop-color="#00abd6"/></linearGradient><linearGradient id="rb215" gradientUnits="userSpaceOnUse" x1="304.53" y1="425.05" x2="301.59" y2="432.74"><stop offset="0.000" stop-color="#00d6b9"/><stop offset="0.455" stop-color="#00d6b9"/><stop offset="0.455" stop-color="#00abd6"/><stop offset="1.000" stop-color="#00abd6"/></linearGradient><linearGradient id="rb216" gradientUnits="userSpaceOnUse" x1="301.36" y1="420.77" x2="298.02" y2="428.83"><stop offset="0.000" stop-color="#00d680"/><stop offset="0.071" stop-color="#00d680"/><stop offset="0.071" stop-color="#00d6b9"/><stop offset="1.000" stop-color="#00d6b9"/></linearGradient><linearGradient id="rb217" gradientUnits="userSpaceOnUse" x1="298.26" y1="416.06" x2="294.69" y2="423.94"><stop offset="0.000" stop-color="#00d680"/><stop offset="0.864" stop-color="#00d680"/><stop offset="0.864" stop-color="#00d6b9"/><stop offset="1.000" stop-color="#00d6b9"/></linearGradient><linearGradient id="rb218" gradientUnits="userSpaceOnUse" x1="295.15" y1="411.35" x2="291.36" y2="419.05"><stop offset="0.000" stop-color="#00d647"/><stop offset="0.548" stop-color="#00d647"/><stop offset="0.548" stop-color="#00d680"/><stop offset="1.000" stop-color="#00d680"/></linearGradient><linearGradient id="rb219" gradientUnits="userSpaceOnUse" x1="291.35" y1="407.07" x2="287.47" y2="414.37"><stop offset="0.000" stop-color="#0ad60a"/><stop offset="0.083" stop-color="#0ad60a"/><stop offset="0.083" stop-color="#00d647"/><stop offset="1.000" stop-color="#00d647"/></linearGradient><linearGradient id="rb220" gradientUnits="userSpaceOnUse" x1="286.85" y1="403.20" x2="283.00" y2="409.90"><stop offset="0.000" stop-color="#0ad60a"/><stop offset="0.750" stop-color="#0ad60a"/><stop offset="0.750" stop-color="#00d647"/><stop offset="1.000" stop-color="#00d647"/></linearGradient><linearGradient id="rb221" gradientUnits="userSpaceOnUse" x1="282.35" y1="399.33" x2="278.53" y2="405.43"><stop offset="0.000" stop-color="#47d600"/><stop offset="0.167" stop-color="#47d600"/><stop offset="0.167" stop-color="#0ad60a"/><stop offset="1.000" stop-color="#0ad60a"/></linearGradient><linearGradient id="rb222" gradientUnits="userSpaceOnUse" x1="277.47" y1="395.85" x2="273.80" y2="401.07"><stop offset="0.000" stop-color="#4ae000"/><stop offset="0.821" stop-color="#4ae000"/><stop offset="0.821" stop-color="#0ae00a"/><stop offset="1.000" stop-color="#0ae00a"/></linearGradient><linearGradient id="rb223" gradientUnits="userSpaceOnUse" x1="272.21" y1="392.75" x2="268.79" y2="396.80"><stop offset="0.000" stop-color="#9cea00"/><stop offset="0.062" stop-color="#9cea00"/><stop offset="0.062" stop-color="#4eea00"/><stop offset="1.000" stop-color="#4eea00"/></linearGradient><linearGradient id="rb224" gradientUnits="userSpaceOnUse" x1="266.95" y1="389.64" x2="263.78" y2="392.54"><stop offset="0.000" stop-color="#9cea00"/><stop offset="0.875" stop-color="#9cea00"/><stop offset="0.875" stop-color="#4eea00"/><stop offset="1.000" stop-color="#4eea00"/></linearGradient><linearGradient id="rb225" gradientUnits="userSpaceOnUse" x1="262.40" y1="387.18" x2="259.60" y2="389.32"><stop offset="0.000" stop-color="#9cea00"/><stop offset="1.000" stop-color="#9cea00"/></linearGradient><linearGradient id="rb226" gradientUnits="userSpaceOnUse" x1="258.56" y1="385.37" x2="256.24" y2="387.13"><stop offset="0.000" stop-color="#eaea00"/><stop offset="0.200" stop-color="#eaea00"/><stop offset="0.200" stop-color="#9cea00"/><stop offset="1.000" stop-color="#9cea00"/></linearGradient><linearGradient id="rb227" gradientUnits="userSpaceOnUse" x1="254.72" y1="383.56" x2="252.88" y2="384.94"><stop offset="0.000" stop-color="#eaea00"/><stop offset="1.000" stop-color="#eaea00"/></linearGradient><linearGradient id="rb228" gradientUnits="userSpaceOnUse" x1="251.58" y1="382.08" x2="250.25" y2="383.27"><stop offset="0.000" stop-color="#eaea00"/><stop offset="1.000" stop-color="#eaea00"/></linearGradient><linearGradient id="rb229" gradientUnits="userSpaceOnUse" x1="249.15" y1="380.94" x2="248.35" y2="382.11"><stop offset="0.000" stop-color="#eaea00"/><stop offset="1.000" stop-color="#eaea00"/></linearGradient><linearGradient id="rb230" gradientUnits="userSpaceOnUse" x1="246.72" y1="379.81" x2="246.45" y2="380.94"><stop offset="0.000" stop-color="#f0a000"/><stop offset="0.042" stop-color="#f0a000"/><stop offset="0.042" stop-color="#f0f000"/><stop offset="1.000" stop-color="#f0f000"/></linearGradient><linearGradient id="rb231" gradientUnits="userSpaceOnUse" x1="243.90" y1="378.42" x2="243.57" y2="380.63"><stop offset="0.000" stop-color="#f7a400"/><stop offset="0.437" stop-color="#f7a400"/><stop offset="0.437" stop-color="#f7f700"/><stop offset="1.000" stop-color="#f7f700"/></linearGradient><linearGradient id="rb232" gradientUnits="userSpaceOnUse" x1="240.70" y1="376.77" x2="239.70" y2="381.18"><stop offset="0.000" stop-color="#f7a400"/><stop offset="0.469" stop-color="#f7a400"/><stop offset="0.469" stop-color="#f7f700"/><stop offset="1.000" stop-color="#f7f700"/></linearGradient><linearGradient id="rb233" gradientUnits="userSpaceOnUse" x1="237.50" y1="375.12" x2="235.83" y2="381.73"><stop offset="0.000" stop-color="#f7a400"/><stop offset="0.479" stop-color="#f7a400"/><stop offset="0.479" stop-color="#f7f700"/><stop offset="1.000" stop-color="#f7f700"/></linearGradient><linearGradient id="rb234" gradientUnits="userSpaceOnUse" x1="233.97" y1="373.92" x2="231.98" y2="382.97"><stop offset="0.000" stop-color="#f05000"/><stop offset="0.070" stop-color="#f05000"/><stop offset="0.070" stop-color="#f0a000"/><stop offset="0.445" stop-color="#f0a000"/><stop offset="0.445" stop-color="#f0f000"/><stop offset="0.820" stop-color="#f0f000"/><stop offset="0.820" stop-color="#a0f000"/><stop offset="1.000" stop-color="#a0f000"/></linearGradient><linearGradient id="rb235" gradientUnits="userSpaceOnUse" x1="230.10" y1="373.15" x2="228.15" y2="384.90"><stop offset="0.000" stop-color="#ea4e00"/><stop offset="0.114" stop-color="#ea4e00"/><stop offset="0.114" stop-color="#ea9c00"/><stop offset="0.398" stop-color="#ea9c00"/><stop offset="0.398" stop-color="#eaea00"/><stop offset="0.682" stop-color="#eaea00"/><stop offset="0.682" stop-color="#9cea00"/><stop offset="0.966" stop-color="#9cea00"/><stop offset="0.966" stop-color="#4eea00"/><stop offset="1.000" stop-color="#4eea00"/></linearGradient><linearGradient id="rb236" gradientUnits="userSpaceOnUse" x1="226.23" y1="372.38" x2="224.32" y2="386.83"><stop offset="0.000" stop-color="#ea4e00"/><stop offset="0.140" stop-color="#ea4e00"/><stop offset="0.140" stop-color="#ea9c00"/><stop offset="0.369" stop-color="#ea9c00"/><stop offset="0.369" stop-color="#eaea00"/><stop offset="0.598" stop-color="#eaea00"/><stop offset="0.598" stop-color="#9cea00"/><stop offset="0.826" stop-color="#9cea00"/><stop offset="0.826" stop-color="#4eea00"/><stop offset="1.000" stop-color="#4eea00"/></linearGradient><linearGradient id="rb237" gradientUnits="userSpaceOnUse" x1="222.70" y1="372.55" x2="220.80" y2="389.40"><stop offset="0.000" stop-color="#ea4e00"/><stop offset="0.084" stop-color="#ea4e00"/><stop offset="0.084" stop-color="#ea9c00"/><stop offset="0.295" stop-color="#ea9c00"/><stop offset="0.295" stop-color="#eaea00"/><stop offset="0.506" stop-color="#eaea00"/><stop offset="0.506" stop-color="#9cea00"/><stop offset="0.716" stop-color="#9cea00"/><stop offset="0.716" stop-color="#4eea00"/><stop offset="0.927" stop-color="#4eea00"/><stop offset="0.927" stop-color="#0bea0b"/><stop offset="1.000" stop-color="#0bea0b"/></linearGradient><linearGradient id="rb238" gradientUnits="userSpaceOnUse" x1="219.50" y1="373.65" x2="217.60" y2="392.60"><stop offset="0.000" stop-color="#ea9c00"/><stop offset="0.164" stop-color="#ea9c00"/><stop offset="0.164" stop-color="#eaea00"/><stop offset="0.379" stop-color="#eaea00"/><stop offset="0.379" stop-color="#9cea00"/><stop offset="0.595" stop-color="#9cea00"/><stop offset="0.595" stop-color="#4eea00"/><stop offset="0.810" stop-color="#4eea00"/><stop offset="0.810" stop-color="#0bea0b"/><stop offset="1.000" stop-color="#0bea0b"/></linearGradient><linearGradient id="rb239" gradientUnits="userSpaceOnUse" x1="216.30" y1="374.75" x2="214.40" y2="395.80"><stop offset="0.000" stop-color="#ea9c00"/><stop offset="0.026" stop-color="#ea9c00"/><stop offset="0.026" stop-color="#eaea00"/><stop offset="0.247" stop-color="#eaea00"/><stop offset="0.247" stop-color="#9cea00"/><stop offset="0.468" stop-color="#9cea00"/><stop offset="0.468" stop-color="#4eea00"/><stop offset="0.688" stop-color="#4eea00"/><stop offset="0.688" stop-color="#0bea0b"/><stop offset="0.909" stop-color="#0bea0b"/><stop offset="0.909" stop-color="#00ea4e"/><stop offset="1.000" stop-color="#00ea4e"/></linearGradient><linearGradient id="rb240" gradientUnits="userSpaceOnUse" x1="213.42" y1="376.73" x2="211.50" y2="398.52"><stop offset="0.000" stop-color="#e0e000"/><stop offset="0.094" stop-color="#e0e000"/><stop offset="0.094" stop-color="#95e000"/><stop offset="0.328" stop-color="#95e000"/><stop offset="0.328" stop-color="#4ae000"/><stop offset="0.562" stop-color="#4ae000"/><stop offset="0.562" stop-color="#0ae00a"/><stop offset="0.797" stop-color="#0ae00a"/><stop offset="0.797" stop-color="#00e04a"/><stop offset="1.000" stop-color="#00e04a"/></linearGradient><linearGradient id="rb241" gradientUnits="userSpaceOnUse" x1="210.85" y1="379.60" x2="208.90" y2="400.75"><stop offset="0.000" stop-color="#8ed600"/><stop offset="0.156" stop-color="#8ed600"/><stop offset="0.156" stop-color="#47d600"/><stop offset="0.417" stop-color="#47d600"/><stop offset="0.417" stop-color="#0ad60a"/><stop offset="0.677" stop-color="#0ad60a"/><stop offset="0.677" stop-color="#00d647"/><stop offset="0.938" stop-color="#00d647"/><stop offset="0.938" stop-color="#00d680"/><stop offset="1.000" stop-color="#00d680"/></linearGradient><linearGradient id="rb242" gradientUnits="userSpaceOnUse" x1="208.28" y1="382.47" x2="206.30" y2="402.98"><stop offset="0.000" stop-color="#47d600"/><stop offset="0.234" stop-color="#47d600"/><stop offset="0.234" stop-color="#0ad60a"/><stop offset="0.527" stop-color="#0ad60a"/><stop offset="0.527" stop-color="#00d647"/><stop offset="0.820" stop-color="#00d647"/><stop offset="0.820" stop-color="#00d680"/><stop offset="1.000" stop-color="#00d680"/></linearGradient><linearGradient id="rb243" gradientUnits="userSpaceOnUse" x1="205.72" y1="385.83" x2="203.73" y2="403.15"><stop offset="0.000" stop-color="#0ad60a"/><stop offset="0.345" stop-color="#0ad60a"/><stop offset="0.345" stop-color="#00d647"/><stop offset="0.709" stop-color="#00d647"/><stop offset="0.709" stop-color="#00d680"/><stop offset="1.000" stop-color="#00d680"/></linearGradient><linearGradient id="rb244" gradientUnits="userSpaceOnUse" x1="203.15" y1="389.70" x2="201.20" y2="401.25"><stop offset="0.000" stop-color="#0ad60a"/><stop offset="0.022" stop-color="#0ad60a"/><stop offset="0.022" stop-color="#00d647"/><stop offset="0.565" stop-color="#00d647"/><stop offset="0.565" stop-color="#00d680"/><stop offset="1.000" stop-color="#00d680"/></linearGradient><linearGradient id="rb245" gradientUnits="userSpaceOnUse" x1="200.58" y1="393.57" x2="198.67" y2="399.35"><stop offset="0.000" stop-color="#00d647"/><stop offset="0.143" stop-color="#00d647"/><stop offset="0.143" stop-color="#00d680"/><stop offset="1.000" stop-color="#00d680"/></linearGradient><linearGradient id="rb246" gradientUnits="userSpaceOnUse" x1="197.88" y1="394.12" x2="196.03" y2="396.88"><stop offset="0.000" stop-color="#00d680"/><stop offset="1.000" stop-color="#00d680"/></linearGradient><linearGradient id="rb247" gradientUnits="userSpaceOnUse" x1="195.05" y1="391.38" x2="193.30" y2="393.82"><stop offset="0.000" stop-color="#00d647"/><stop offset="0.500" stop-color="#00d647"/><stop offset="0.500" stop-color="#00d680"/><stop offset="1.000" stop-color="#00d680"/></linearGradient><linearGradient id="rb248" gradientUnits="userSpaceOnUse" x1="192.22" y1="388.62" x2="190.57" y2="390.77"><stop offset="0.000" stop-color="#00d647"/><stop offset="1.000" stop-color="#00d647"/></linearGradient><linearGradient id="rb249" gradientUnits="userSpaceOnUse" x1="189.59" y1="385.77" x2="187.73" y2="387.68"><stop offset="0.000" stop-color="#00d647"/><stop offset="1.000" stop-color="#00d647"/></linearGradient><linearGradient id="rb250" gradientUnits="userSpaceOnUse" x1="187.16" y1="382.81" x2="184.79" y2="384.53"><stop offset="0.000" stop-color="#0ad60a"/><stop offset="0.357" stop-color="#0ad60a"/><stop offset="0.357" stop-color="#00d647"/><stop offset="1.000" stop-color="#00d647"/></linearGradient><linearGradient id="rb251" gradientUnits="userSpaceOnUse" x1="184.72" y1="379.86" x2="181.86" y2="381.39"><stop offset="0.000" stop-color="#0ad60a"/><stop offset="0.761" stop-color="#0ad60a"/><stop offset="0.761" stop-color="#00d647"/><stop offset="1.000" stop-color="#00d647"/></linearGradient><linearGradient id="rb252" gradientUnits="userSpaceOnUse" x1="181.41" y1="376.13" x2="178.17" y2="377.59"><stop offset="0.000" stop-color="#0ad60a"/><stop offset="0.700" stop-color="#0ad60a"/><stop offset="0.700" stop-color="#00d647"/><stop offset="1.000" stop-color="#00d647"/></linearGradient><linearGradient id="rb253" gradientUnits="userSpaceOnUse" x1="177.22" y1="371.63" x2="173.73" y2="373.12"><stop offset="0.000" stop-color="#0ad60a"/><stop offset="0.278" stop-color="#0ad60a"/><stop offset="0.278" stop-color="#00d647"/><stop offset="1.000" stop-color="#00d647"/></linearGradient><linearGradient id="rb254" gradientUnits="userSpaceOnUse" x1="173.02" y1="367.14" x2="169.30" y2="368.64"><stop offset="0.000" stop-color="#00d647"/><stop offset="1.000" stop-color="#00d647"/></linearGradient><linearGradient id="rb255" gradientUnits="userSpaceOnUse" x1="169.99" y1="364.41" x2="166.40" y2="365.93"><stop offset="0.000" stop-color="#00d647"/><stop offset="0.926" stop-color="#00d647"/><stop offset="0.926" stop-color="#00d680"/><stop offset="1.000" stop-color="#00d680"/></linearGradient><linearGradient id="rb256" gradientUnits="userSpaceOnUse" x1="168.12" y1="363.44" x2="165.03" y2="364.96"><stop offset="0.000" stop-color="#00d647"/><stop offset="0.714" stop-color="#00d647"/><stop offset="0.714" stop-color="#00d680"/><stop offset="1.000" stop-color="#00d680"/></linearGradient><linearGradient id="rb257" gradientUnits="userSpaceOnUse" x1="166.25" y1="362.47" x2="163.67" y2="363.99"><stop offset="0.000" stop-color="#00d647"/><stop offset="0.333" stop-color="#00d647"/><stop offset="0.333" stop-color="#00d680"/><stop offset="1.000" stop-color="#00d680"/></linearGradient><linearGradient id="rb258" gradientUnits="userSpaceOnUse" x1="164.81" y1="360.57" x2="162.37" y2="362.36"><stop offset="0.000" stop-color="#00d647"/><stop offset="0.333" stop-color="#00d647"/><stop offset="0.333" stop-color="#00d680"/><stop offset="1.000" stop-color="#00d680"/></linearGradient><linearGradient id="rb259" gradientUnits="userSpaceOnUse" x1="163.81" y1="357.74" x2="161.13" y2="360.06"><stop offset="0.000" stop-color="#00d647"/><stop offset="0.714" stop-color="#00d647"/><stop offset="0.714" stop-color="#00d680"/><stop offset="1.000" stop-color="#00d680"/></linearGradient><linearGradient id="rb260" gradientUnits="userSpaceOnUse" x1="162.82" y1="354.91" x2="159.90" y2="357.76"><stop offset="0.000" stop-color="#00d647"/><stop offset="0.926" stop-color="#00d647"/><stop offset="0.926" stop-color="#00d680"/><stop offset="1.000" stop-color="#00d680"/></linearGradient><linearGradient id="rb261" gradientUnits="userSpaceOnUse" x1="162.08" y1="351.81" x2="158.75" y2="354.94"><stop offset="0.000" stop-color="#00d647"/><stop offset="1.000" stop-color="#00d647"/></linearGradient><linearGradient id="rb262" gradientUnits="userSpaceOnUse" x1="161.61" y1="348.44" x2="157.69" y2="351.61"><stop offset="0.000" stop-color="#0ad60a"/><stop offset="0.250" stop-color="#0ad60a"/><stop offset="0.250" stop-color="#00d647"/><stop offset="1.000" stop-color="#00d647"/></linearGradient><linearGradient id="rb263" gradientUnits="userSpaceOnUse" x1="161.14" y1="345.08" x2="156.63" y2="348.27"><stop offset="0.000" stop-color="#0ad60a"/><stop offset="0.583" stop-color="#0ad60a"/><stop offset="0.583" stop-color="#00d647"/><stop offset="1.000" stop-color="#00d647"/></linearGradient><linearGradient id="rb264" gradientUnits="userSpaceOnUse" x1="160.75" y1="341.88" x2="155.73" y2="345.05"><stop offset="0.000" stop-color="#0ad60a"/><stop offset="0.911" stop-color="#0ad60a"/><stop offset="0.911" stop-color="#00d647"/><stop offset="1.000" stop-color="#00d647"/></linearGradient><linearGradient id="rb265" gradientUnits="userSpaceOnUse" x1="160.47" y1="338.84" x2="154.99" y2="341.96"><stop offset="0.000" stop-color="#0ad60a"/><stop offset="1.000" stop-color="#0ad60a"/></linearGradient><linearGradient id="rb266" gradientUnits="userSpaceOnUse" x1="160.18" y1="335.80" x2="154.24" y2="338.87"><stop offset="0.000" stop-color="#47d600"/><stop offset="-0.000" stop-color="#47d600"/><stop offset="-0.000" stop-color="#0ad60a"/><stop offset="1.000" stop-color="#0ad60a"/></linearGradient><linearGradient id="rb267" gradientUnits="userSpaceOnUse" x1="159.73" y1="331.06" x2="153.62" y2="334.12"><stop offset="0.000" stop-color="#47d600"/><stop offset="0.333" stop-color="#47d600"/><stop offset="0.333" stop-color="#0ad60a"/><stop offset="1.000" stop-color="#0ad60a"/></linearGradient><linearGradient id="rb268" gradientUnits="userSpaceOnUse" x1="159.14" y1="324.62" x2="153.11" y2="327.73"><stop offset="0.000" stop-color="#47d600"/><stop offset="0.667" stop-color="#47d600"/><stop offset="0.667" stop-color="#0ad60a"/><stop offset="1.000" stop-color="#0ad60a"/></linearGradient><linearGradient id="rb269" gradientUnits="userSpaceOnUse" x1="158.55" y1="318.17" x2="152.60" y2="321.34"><stop offset="0.000" stop-color="#47d600"/><stop offset="1.000" stop-color="#47d600"/></linearGradient><linearGradient id="rb270" gradientUnits="userSpaceOnUse" x1="158.57" y1="313.34" x2="152.48" y2="316.57"><stop offset="0.000" stop-color="#47d600"/><stop offset="1.000" stop-color="#47d600"/></linearGradient><linearGradient id="rb271" gradientUnits="userSpaceOnUse" x1="159.21" y1="310.13" x2="152.74" y2="313.42"><stop offset="0.000" stop-color="#47d600"/><stop offset="0.714" stop-color="#47d600"/><stop offset="0.714" stop-color="#0ad60a"/><stop offset="1.000" stop-color="#0ad60a"/></linearGradient><linearGradient id="rb272" gradientUnits="userSpaceOnUse" x1="159.86" y1="306.91" x2="152.99" y2="310.27"><stop offset="0.000" stop-color="#47d600"/><stop offset="0.478" stop-color="#47d600"/><stop offset="0.478" stop-color="#0ad60a"/><stop offset="1.000" stop-color="#0ad60a"/></linearGradient><linearGradient id="rb273" gradientUnits="userSpaceOnUse" x1="159.06" y1="305.08" x2="153.02" y2="309.42"><stop offset="0.000" stop-color="#47d600"/><stop offset="0.318" stop-color="#47d600"/><stop offset="0.318" stop-color="#0ad60a"/><stop offset="1.000" stop-color="#0ad60a"/></linearGradient><linearGradient id="rb274" gradientUnits="userSpaceOnUse" x1="156.84" y1="304.65" x2="152.81" y2="310.85"><stop offset="0.000" stop-color="#47d600"/><stop offset="0.167" stop-color="#47d600"/><stop offset="0.167" stop-color="#0ad60a"/><stop offset="1.000" stop-color="#0ad60a"/></linearGradient><linearGradient id="rb275" gradientUnits="userSpaceOnUse" x1="154.61" y1="304.22" x2="152.60" y2="312.28"><stop offset="0.000" stop-color="#0ad60a"/><stop offset="1.000" stop-color="#0ad60a"/></linearGradient></defs>
<g><polygon points="152.50,313.00 153.50,304.00 155.33,302.33 155.00,310.50" fill="url(#rb0)" stroke="url(#rb0)" stroke-width="0.6" stroke-linejoin="round"/><polygon points="155.00,310.50 155.33,302.33 157.17,300.67 157.50,308.00" fill="url(#rb1)" stroke="url(#rb1)" stroke-width="0.6" stroke-linejoin="round"/><polygon points="157.17,300.67 159.00,299.00 160.00,305.50 157.50,308.00" fill="url(#rb2)" stroke="url(#rb2)" stroke-width="0.6" stroke-linejoin="round"/><polygon points="159.00,299.00 163.00,297.00 163.67,303.00 160.00,305.50" fill="url(#rb3)" stroke="url(#rb3)" stroke-width="0.6" stroke-linejoin="round"/><polygon points="163.00,297.00 167.00,295.00 167.33,300.50 163.67,303.00" fill="url(#rb4)" stroke="url(#rb4)" stroke-width="0.6" stroke-linejoin="round"/><polygon points="167.00,295.00 171.00,293.00 171.00,298.00 167.33,300.50" fill="url(#rb5)" stroke="url(#rb5)" stroke-width="0.6" stroke-linejoin="round"/><polygon points="171.00,293.00 175.00,292.00 175.00,297.00 171.00,298.00" fill="url(#rb6)" stroke="url(#rb6)" stroke-width="0.6" stroke-linejoin="round"/><polygon points="175.00,292.00 179.00,291.00 179.00,296.00 175.00,297.00" fill="url(#rb7)" stroke="url(#rb7)" stroke-width="0.6" stroke-linejoin="round"/><polygon points="179.00,291.00 183.00,290.00 183.00,295.00 179.00,296.00" fill="url(#rb8)" stroke="url(#rb8)" stroke-width="0.6" stroke-linejoin="round"/><polygon points="183.00,290.00 186.67,289.33 186.67,294.17 183.00,295.00" fill="url(#rb9)" stroke="url(#rb9)" stroke-width="0.6" stroke-linejoin="round"/><polygon points="186.67,289.33 190.33,288.67 190.33,293.33 186.67,294.17" fill="url(#rb10)" stroke="url(#rb10)" stroke-width="0.6" stroke-linejoin="round"/><polygon points="190.33,288.67 194.00,288.00 194.00,292.50 190.33,293.33" fill="url(#rb11)" stroke="url(#rb11)" stroke-width="0.6" stroke-linejoin="round"/><polygon points="194.00,288.00 197.67,288.00 197.67,292.67 194.00,292.50" fill="url(#rb12)" stroke="url(#rb12)" stroke-width="0.6" stroke-linejoin="round"/><polygon points="197.67,288.00 201.33,288.00 201.33,292.83 197.67,292.67" fill="url(#rb13)" stroke="url(#rb13)" stroke-width="0.6" stroke-linejoin="round"/><polygon points="201.33,288.00 205.00,288.00 205.00,293.00 201.33,292.83" fill="url(#rb14)" stroke="url(#rb14)" stroke-width="0.6" stroke-linejoin="round"/><polygon points="205.00,288.00 209.00,288.33 209.00,293.33 205.00,293.00" fill="url(#rb15)" stroke="url(#rb15)" stroke-width="0.6" stroke-linejoin="round"/><polygon points="209.00,288.33 213.00,288.67 213.00,293.67 209.00,293.33" fill="url(#rb16)" stroke="url(#rb16)" stroke-width="0.6" stroke-linejoin="round"/><polygon points="213.00,288.67 217.00,289.00 217.00,294.00 213.00,293.67" fill="url(#rb17)" stroke="url(#rb17)" stroke-width="0.6" stroke-linejoin="round"/><polygon points="217.00,289.00 220.75,288.33 221.25,292.67 217.00,294.00" fill="url(#rb18)" stroke="url(#rb18)" stroke-width="0.6" stroke-linejoin="round"/><polygon points="220.75,288.33 224.50,287.67 225.50,291.33 221.25,292.67" fill="url(#rb19)" stroke="url(#rb19)" stroke-width="0.6" stroke-linejoin="round"/><polygon points="224.50,287.67 228.25,287.00 229.75,290.00 225.50,291.33" fill="url(#rb20)" stroke="url(#rb20)" stroke-width="0.6" stroke-linejoin="round"/><polygon points="228.25,287.00 231.60,285.20 233.07,288.13 229.75,290.00" fill="url(#rb21)" stroke="url(#rb21)" stroke-width="0.6" stroke-linejoin="round"/><polygon points="231.60,285.20 234.95,283.40 236.38,286.27 233.07,288.13" fill="url(#rb22)" stroke="url(#rb22)" stroke-width="0.6" stroke-linejoin="round"/><polygon points="234.95,283.40 238.30,281.60 239.70,284.40 236.38,286.27" fill="url(#rb23)" stroke="url(#rb23)" stroke-width="0.6" stroke-linejoin="round"/><polygon points="238.30,281.60 241.71,278.82 243.56,281.28 239.70,284.40" fill="url(#rb24)" stroke="url(#rb24)" stroke-width="0.6" stroke-linejoin="round"/><polygon points="241.71,278.82 245.12,276.05 247.41,278.15 243.56,281.28" fill="url(#rb25)" stroke="url(#rb25)" stroke-width="0.6" stroke-linejoin="round"/><polygon points="245.12,276.05 248.53,273.27 251.27,275.03 247.41,278.15" fill="url(#rb26)" stroke="url(#rb26)" stroke-width="0.6" stroke-linejoin="round"/><polygon points="248.53,273.27 251.92,270.05 254.61,271.98 251.27,275.03" fill="url(#rb27)" stroke="url(#rb27)" stroke-width="0.6" stroke-linejoin="round"/><polygon points="251.92,270.05 255.31,266.83 257.96,268.93 254.61,271.98" fill="url(#rb28)" stroke="url(#rb28)" stroke-width="0.6" stroke-linejoin="round"/><polygon points="255.31,266.83 258.70,263.61 261.30,265.89 257.96,268.93" fill="url(#rb29)" stroke="url(#rb29)" stroke-width="0.6" stroke-linejoin="round"/><polygon points="258.70,263.61 261.77,261.05 264.90,263.25 261.30,265.89" fill="url(#rb30)" stroke="url(#rb30)" stroke-width="0.6" stroke-linejoin="round"/><polygon points="261.77,261.05 264.83,258.49 268.50,260.61 264.90,263.25" fill="url(#rb31)" stroke="url(#rb31)" stroke-width="0.6" stroke-linejoin="round"/><polygon points="264.83,258.49 267.90,255.94 272.10,257.96 268.50,260.61" fill="url(#rb32)" stroke="url(#rb32)" stroke-width="0.6" stroke-linejoin="round"/><polygon points="267.90,255.94 270.20,252.56 275.57,257.78 272.10,257.96" fill="url(#rb33)" stroke="url(#rb33)" stroke-width="0.6" stroke-linejoin="round"/><polygon points="270.20,252.56 272.50,249.18 279.03,257.59 275.57,257.78" fill="url(#rb34)" stroke="url(#rb34)" stroke-width="0.6" stroke-linejoin="round"/><polygon points="272.50,249.18 274.80,245.80 282.50,257.40 279.03,257.59" fill="url(#rb35)" stroke="url(#rb35)" stroke-width="0.6" stroke-linejoin="round"/><polygon points="274.80,245.80 277.87,242.53 286.33,254.27 282.50,257.40" fill="url(#rb36)" stroke="url(#rb36)" stroke-width="0.6" stroke-linejoin="round"/><polygon points="277.87,242.53 280.93,239.27 290.17,251.13 286.33,254.27" fill="url(#rb37)" stroke="url(#rb37)" stroke-width="0.6" stroke-linejoin="round"/><polygon points="280.93,239.27 284.00,236.00 294.00,248.00 290.17,251.13" fill="url(#rb38)" stroke="url(#rb38)" stroke-width="0.6" stroke-linejoin="round"/><polygon points="284.00,236.00 287.33,232.87 297.87,244.67 294.00,248.00" fill="url(#rb39)" stroke="url(#rb39)" stroke-width="0.6" stroke-linejoin="round"/><polygon points="287.33,232.87 290.67,229.73 301.73,241.33 297.87,244.67" fill="url(#rb40)" stroke="url(#rb40)" stroke-width="0.6" stroke-linejoin="round"/><polygon points="290.67,229.73 294.00,226.60 305.60,238.00 301.73,241.33" fill="url(#rb41)" stroke="url(#rb41)" stroke-width="0.6" stroke-linejoin="round"/><polygon points="294.00,226.60 296.67,224.07 308.07,236.33 305.60,238.00" fill="url(#rb42)" stroke="url(#rb42)" stroke-width="0.6" stroke-linejoin="round"/><polygon points="296.67,224.07 299.33,221.53 310.53,234.67 308.07,236.33" fill="url(#rb43)" stroke="url(#rb43)" stroke-width="0.6" stroke-linejoin="round"/><polygon points="299.33,221.53 302.00,219.00 313.00,233.00 310.53,234.67" fill="url(#rb44)" stroke="url(#rb44)" stroke-width="0.6" stroke-linejoin="round"/><polygon points="302.00,219.00 304.50,216.40 315.67,231.50 313.00,233.00" fill="url(#rb45)" stroke="url(#rb45)" stroke-width="0.6" stroke-linejoin="round"/><polygon points="304.50,216.40 307.00,213.80 318.33,230.00 315.67,231.50" fill="url(#rb46)" stroke="url(#rb46)" stroke-width="0.6" stroke-linejoin="round"/><polygon points="307.00,213.80 309.50,211.20 321.00,228.50 318.33,230.00" fill="url(#rb47)" stroke="url(#rb47)" stroke-width="0.6" stroke-linejoin="round"/><polygon points="309.50,211.20 313.00,208.77 323.67,227.83 321.00,228.50" fill="url(#rb48)" stroke="url(#rb48)" stroke-width="0.6" stroke-linejoin="round"/><polygon points="313.00,208.77 316.50,206.33 326.33,227.17 323.67,227.83" fill="url(#rb49)" stroke="url(#rb49)" stroke-width="0.6" stroke-linejoin="round"/><polygon points="316.50,206.33 320.00,203.90 329.00,226.50 326.33,227.17" fill="url(#rb50)" stroke="url(#rb50)" stroke-width="0.6" stroke-linejoin="round"/><polygon points="320.00,203.90 324.00,204.43 331.47,226.20 329.00,226.50" fill="url(#rb51)" stroke="url(#rb51)" stroke-width="0.6" stroke-linejoin="round"/><polygon points="324.00,204.43 328.00,204.97 333.93,225.90 331.47,226.20" fill="url(#rb52)" stroke="url(#rb52)" stroke-width="0.6" stroke-linejoin="round"/><polygon points="328.00,204.97 332.00,205.50 336.40,225.60 333.93,225.90" fill="url(#rb53)" stroke="url(#rb53)" stroke-width="0.6" stroke-linejoin="round"/><polygon points="332.00,205.50 336.00,206.23 338.93,227.40 336.40,225.60" fill="url(#rb54)" stroke="url(#rb54)" stroke-width="0.6" stroke-linejoin="round"/><polygon points="336.00,206.23 340.00,206.97 341.47,229.20 338.93,227.40" fill="url(#rb55)" stroke="url(#rb55)" stroke-width="0.6" stroke-linejoin="round"/><polygon points="340.00,206.97 344.00,207.70 344.00,231.00 341.47,229.20" fill="url(#rb56)" stroke="url(#rb56)" stroke-width="0.6" stroke-linejoin="round"/><polygon points="344.00,207.70 346.60,209.47 346.60,233.33 344.00,231.00" fill="url(#rb57)" stroke="url(#rb57)" stroke-width="0.6" stroke-linejoin="round"/><polygon points="346.60,209.47 349.20,211.23 349.20,235.67 346.60,233.33" fill="url(#rb58)" stroke="url(#rb58)" stroke-width="0.6" stroke-linejoin="round"/><polygon points="349.20,211.23 351.80,213.00 351.80,238.00 349.20,235.67" fill="url(#rb59)" stroke="url(#rb59)" stroke-width="0.6" stroke-linejoin="round"/><polygon points="351.80,213.00 354.37,214.97 354.37,240.33 351.80,238.00" fill="url(#rb60)" stroke="url(#rb60)" stroke-width="0.6" stroke-linejoin="round"/><polygon points="354.37,214.97 356.93,216.93 356.93,242.67 354.37,240.33" fill="url(#rb61)" stroke="url(#rb61)" stroke-width="0.6" stroke-linejoin="round"/><polygon points="356.93,216.93 359.50,218.90 359.50,245.00 356.93,242.67" fill="url(#rb62)" stroke="url(#rb62)" stroke-width="0.6" stroke-linejoin="round"/><polygon points="359.50,218.90 362.33,223.60 362.00,247.20 359.50,245.00" fill="url(#rb63)" stroke="url(#rb63)" stroke-width="0.6" stroke-linejoin="round"/><polygon points="362.00,247.20 362.33,223.60 365.17,228.30 364.50,249.40" fill="url(#rb64)" stroke="url(#rb64)" stroke-width="0.6" stroke-linejoin="round"/><polygon points="364.50,249.40 365.17,228.30 368.00,233.00 367.00,251.60" fill="url(#rb65)" stroke="url(#rb65)" stroke-width="0.6" stroke-linejoin="round"/><polygon points="367.00,251.60 368.00,233.00 370.97,237.93 370.93,255.73" fill="url(#rb66)" stroke="url(#rb66)" stroke-width="0.6" stroke-linejoin="round"/><polygon points="370.93,255.73 370.97,237.93 373.93,242.87 374.87,259.87" fill="url(#rb67)" stroke="url(#rb67)" stroke-width="0.6" stroke-linejoin="round"/><polygon points="373.93,242.87 376.90,247.80 378.80,264.00 374.87,259.87" fill="url(#rb68)" stroke="url(#rb68)" stroke-width="0.6" stroke-linejoin="round"/><polygon points="376.90,247.80 380.27,249.87 381.20,265.17 378.80,264.00" fill="url(#rb69)" stroke="url(#rb69)" stroke-width="0.6" stroke-linejoin="round"/><polygon points="380.27,249.87 383.63,251.93 383.60,266.33 381.20,265.17" fill="url(#rb70)" stroke="url(#rb70)" stroke-width="0.6" stroke-linejoin="round"/><polygon points="383.60,266.33 383.63,251.93 387.00,254.00 386.00,267.50" fill="url(#rb71)" stroke="url(#rb71)" stroke-width="0.6" stroke-linejoin="round"/><polygon points="386.00,267.50 387.00,254.00 390.67,256.10 388.67,268.67" fill="url(#rb72)" stroke="url(#rb72)" stroke-width="0.6" stroke-linejoin="round"/><polygon points="388.67,268.67 390.67,256.10 394.33,258.20 391.33,269.83" fill="url(#rb73)" stroke="url(#rb73)" stroke-width="0.6" stroke-linejoin="round"/><polygon points="391.33,269.83 394.33,258.20 398.00,260.30 394.00,271.00" fill="url(#rb74)" stroke="url(#rb74)" stroke-width="0.6" stroke-linejoin="round"/><polygon points="394.00,271.00 398.00,260.30 400.67,262.70 396.67,273.33" fill="url(#rb75)" stroke="url(#rb75)" stroke-width="0.6" stroke-linejoin="round"/><polygon points="396.67,273.33 400.67,262.70 403.33,265.10 399.33,275.67" fill="url(#rb76)" stroke="url(#rb76)" stroke-width="0.6" stroke-linejoin="round"/><polygon points="399.33,275.67 403.33,265.10 406.00,267.50 402.00,278.00" fill="url(#rb77)" stroke="url(#rb77)" stroke-width="0.6" stroke-linejoin="round"/><polygon points="402.00,278.00 406.00,267.50 408.47,269.90 404.53,280.13" fill="url(#rb78)" stroke="url(#rb78)" stroke-width="0.6" stroke-linejoin="round"/><polygon points="404.53,280.13 408.47,269.90 410.93,272.30 407.07,282.27" fill="url(#rb79)" stroke="url(#rb79)" stroke-width="0.6" stroke-linejoin="round"/><polygon points="407.07,282.27 410.93,272.30 413.40,274.70 409.60,284.40" fill="url(#rb80)" stroke="url(#rb80)" stroke-width="0.6" stroke-linejoin="round"/><polygon points="409.60,284.40 413.40,274.70 415.93,276.63 411.73,285.93" fill="url(#rb81)" stroke="url(#rb81)" stroke-width="0.6" stroke-linejoin="round"/><polygon points="411.73,285.93 415.93,276.63 418.47,278.57 413.87,287.47" fill="url(#rb82)" stroke="url(#rb82)" stroke-width="0.6" stroke-linejoin="round"/><polygon points="413.87,287.47 418.47,278.57 421.00,280.50 416.00,289.00" fill="url(#rb83)" stroke="url(#rb83)" stroke-width="0.6" stroke-linejoin="round"/><polygon points="416.00,289.00 421.00,280.50 423.63,282.43 418.00,290.33" fill="url(#rb84)" stroke="url(#rb84)" stroke-width="0.6" stroke-linejoin="round"/><polygon points="418.00,290.33 423.63,282.43 426.27,284.37 420.00,291.67" fill="url(#rb85)" stroke="url(#rb85)" stroke-width="0.6" stroke-linejoin="round"/><polygon points="420.00,291.67 426.27,284.37 428.90,286.30 422.00,293.00" fill="url(#rb86)" stroke="url(#rb86)" stroke-width="0.6" stroke-linejoin="round"/><polygon points="422.00,293.00 428.90,286.30 431.00,285.77 425.67,291.50" fill="url(#rb87)" stroke="url(#rb87)" stroke-width="0.6" stroke-linejoin="round"/><polygon points="425.67,291.50 431.00,285.77 433.10,285.23 429.33,290.00" fill="url(#rb88)" stroke="url(#rb88)" stroke-width="0.6" stroke-linejoin="round"/><polygon points="429.33,290.00 433.10,285.23 435.20,284.70 433.00,288.50" fill="url(#rb89)" stroke="url(#rb89)" stroke-width="0.6" stroke-linejoin="round"/><polygon points="433.00,288.50 435.20,284.70 437.13,282.63 436.33,287.17" fill="url(#rb90)" stroke="url(#rb90)" stroke-width="0.6" stroke-linejoin="round"/><polygon points="436.33,287.17 437.13,282.63 439.07,280.57 439.67,285.83" fill="url(#rb91)" stroke="url(#rb91)" stroke-width="0.6" stroke-linejoin="round"/><polygon points="439.07,280.57 441.00,278.50 443.00,284.50 439.67,285.83" fill="url(#rb92)" stroke="url(#rb92)" stroke-width="0.6" stroke-linejoin="round"/><polygon points="441.00,278.50 442.93,276.30 446.00,283.50 443.00,284.50" fill="url(#rb93)" stroke="url(#rb93)" stroke-width="0.6" stroke-linejoin="round"/><polygon points="442.93,276.30 444.87,274.10 449.00,282.50 446.00,283.50" fill="url(#rb94)" stroke="url(#rb94)" stroke-width="0.6" stroke-linejoin="round"/><polygon points="444.87,274.10 446.80,271.90 452.00,281.50 449.00,282.50" fill="url(#rb95)" stroke="url(#rb95)" stroke-width="0.6" stroke-linejoin="round"/><polygon points="446.80,271.90 448.53,269.10 454.10,281.30 452.00,281.50" fill="url(#rb96)" stroke="url(#rb96)" stroke-width="0.6" stroke-linejoin="round"/><polygon points="448.53,269.10 450.27,266.30 456.20,281.10 454.10,281.30" fill="url(#rb97)" stroke="url(#rb97)" stroke-width="0.6" stroke-linejoin="round"/><polygon points="450.27,266.30 452.00,263.50 458.30,280.90 456.20,281.10" fill="url(#rb98)" stroke="url(#rb98)" stroke-width="0.6" stroke-linejoin="round"/><polygon points="452.00,263.50 453.67,260.73 459.20,282.60 458.30,280.90" fill="url(#rb99)" stroke="url(#rb99)" stroke-width="0.6" stroke-linejoin="round"/><polygon points="453.67,260.73 455.33,257.97 460.10,284.30 459.20,282.60" fill="url(#rb100)" stroke="url(#rb100)" stroke-width="0.6" stroke-linejoin="round"/><polygon points="455.33,257.97 457.00,255.20 461.00,286.00 460.10,284.30" fill="url(#rb101)" stroke="url(#rb101)" stroke-width="0.6" stroke-linejoin="round"/><polygon points="457.00,255.20 458.33,252.97 462.23,288.13 461.00,286.00" fill="url(#rb102)" stroke="url(#rb102)" stroke-width="0.6" stroke-linejoin="round"/><polygon points="458.33,252.97 459.67,250.73 463.47,290.27 462.23,288.13" fill="url(#rb103)" stroke="url(#rb103)" stroke-width="0.6" stroke-linejoin="round"/><polygon points="459.67,250.73 461.00,248.50 464.70,292.40 463.47,290.27" fill="url(#rb104)" stroke="url(#rb104)" stroke-width="0.6" stroke-linejoin="round"/><polygon points="461.00,248.50 462.23,246.47 465.97,294.60 464.70,292.40" fill="url(#rb105)" stroke="url(#rb105)" stroke-width="0.6" stroke-linejoin="round"/><polygon points="462.23,246.47 463.47,244.43 467.23,296.80 465.97,294.60" fill="url(#rb106)" stroke="url(#rb106)" stroke-width="0.6" stroke-linejoin="round"/><polygon points="463.47,244.43 464.70,242.40 468.50,299.00 467.23,296.80" fill="url(#rb107)" stroke="url(#rb107)" stroke-width="0.6" stroke-linejoin="round"/><polygon points="464.70,242.40 465.97,240.60 469.80,301.10 468.50,299.00" fill="url(#rb108)" stroke="url(#rb108)" stroke-width="0.6" stroke-linejoin="round"/><polygon points="465.97,240.60 467.23,238.80 471.10,303.20 469.80,301.10" fill="url(#rb109)" stroke="url(#rb109)" stroke-width="0.6" stroke-linejoin="round"/><polygon points="467.23,238.80 468.50,237.00 472.40,305.30 471.10,303.20" fill="url(#rb110)" stroke="url(#rb110)" stroke-width="0.6" stroke-linejoin="round"/><polygon points="468.50,237.00 469.80,235.37 473.93,305.80 472.40,305.30" fill="url(#rb111)" stroke="url(#rb111)" stroke-width="0.6" stroke-linejoin="round"/><polygon points="469.80,235.37 471.10,233.73 475.47,306.30 473.93,305.80" fill="url(#rb112)" stroke="url(#rb112)" stroke-width="0.6" stroke-linejoin="round"/><polygon points="471.10,233.73 472.40,232.10 477.00,306.80 475.47,306.30" fill="url(#rb113)" stroke="url(#rb113)" stroke-width="0.6" stroke-linejoin="round"/><polygon points="472.40,232.10 474.53,233.80 478.90,307.13 477.00,306.80" fill="url(#rb114)" stroke="url(#rb114)" stroke-width="0.6" stroke-linejoin="round"/><polygon points="474.53,233.80 476.67,235.50 480.80,307.47 478.90,307.13" fill="url(#rb115)" stroke="url(#rb115)" stroke-width="0.6" stroke-linejoin="round"/><polygon points="476.67,235.50 478.80,237.20 482.70,307.80 480.80,307.47" fill="url(#rb116)" stroke="url(#rb116)" stroke-width="0.6" stroke-linejoin="round"/><polygon points="478.80,237.20 480.97,238.07 484.13,308.87 482.70,307.80" fill="url(#rb117)" stroke="url(#rb117)" stroke-width="0.6" stroke-linejoin="round"/><polygon points="480.97,238.07 483.13,238.93 485.57,309.93 484.13,308.87" fill="url(#rb118)" stroke="url(#rb118)" stroke-width="0.6" stroke-linejoin="round"/><polygon points="483.13,238.93 485.30,239.80 487.00,311.00 485.57,309.93" fill="url(#rb119)" stroke="url(#rb119)" stroke-width="0.6" stroke-linejoin="round"/><polygon points="485.30,239.80 486.57,244.50 487.33,311.33 487.00,311.00" fill="url(#rb120)" stroke="url(#rb120)" stroke-width="0.6" stroke-linejoin="round"/><polygon points="486.57,244.50 487.83,249.20 487.67,311.67 487.33,311.33" fill="url(#rb121)" stroke="url(#rb121)" stroke-width="0.6" stroke-linejoin="round"/><polygon points="487.67,311.67 487.83,249.20 489.10,253.90 488.00,312.00" fill="url(#rb122)" stroke="url(#rb122)" stroke-width="0.6" stroke-linejoin="round"/><polygon points="488.00,312.00 489.10,253.90 489.97,257.33 488.37,312.33" fill="url(#rb123)" stroke="url(#rb123)" stroke-width="0.6" stroke-linejoin="round"/><polygon points="488.37,312.33 489.97,257.33 490.83,260.77 488.73,312.67" fill="url(#rb124)" stroke="url(#rb124)" stroke-width="0.6" stroke-linejoin="round"/><polygon points="488.73,312.67 490.83,260.77 491.70,264.20 489.10,313.00" fill="url(#rb125)" stroke="url(#rb125)" stroke-width="0.6" stroke-linejoin="round"/><polygon points="489.10,313.00 491.70,264.20 492.97,271.90 489.73,314.17" fill="url(#rb126)" stroke="url(#rb126)" stroke-width="0.6" stroke-linejoin="round"/><polygon points="489.73,314.17 492.97,271.90 494.23,279.60 490.37,315.33" fill="url(#rb127)" stroke="url(#rb127)" stroke-width="0.6" stroke-linejoin="round"/><polygon points="490.37,315.33 494.23,279.60 495.50,287.30 491.00,316.50" fill="url(#rb128)" stroke="url(#rb128)" stroke-width="0.6" stroke-linejoin="round"/><polygon points="491.00,316.50 495.50,287.30 497.23,290.30 491.67,317.67" fill="url(#rb129)" stroke="url(#rb129)" stroke-width="0.6" stroke-linejoin="round"/><polygon points="491.67,317.67 497.23,290.30 498.97,293.30 492.33,318.83" fill="url(#rb130)" stroke="url(#rb130)" stroke-width="0.6" stroke-linejoin="round"/><polygon points="492.33,318.83 498.97,293.30 500.70,296.30 493.00,320.00" fill="url(#rb131)" stroke="url(#rb131)" stroke-width="0.6" stroke-linejoin="round"/><polygon points="493.00,320.00 500.70,296.30 501.77,304.20 493.13,320.27" fill="url(#rb132)" stroke="url(#rb132)" stroke-width="0.6" stroke-linejoin="round"/><polygon points="493.13,320.27 501.77,304.20 502.83,312.10 493.27,320.53" fill="url(#rb133)" stroke="url(#rb133)" stroke-width="0.6" stroke-linejoin="round"/><polygon points="493.27,320.53 502.83,312.10 503.90,320.00 493.40,320.80" fill="url(#rb134)" stroke="url(#rb134)" stroke-width="0.6" stroke-linejoin="round"/><polygon points="491.40,324.23 493.40,320.80 503.90,320.00 504.60,324.00" fill="url(#rb135)" stroke="url(#rb135)" stroke-width="0.6" stroke-linejoin="round"/><polygon points="489.40,327.67 491.40,324.23 504.60,324.00 505.30,328.00" fill="url(#rb136)" stroke="url(#rb136)" stroke-width="0.6" stroke-linejoin="round"/><polygon points="487.40,331.10 489.40,327.67 505.30,328.00 506.00,332.00" fill="url(#rb137)" stroke="url(#rb137)" stroke-width="0.6" stroke-linejoin="round"/><polygon points="486.77,334.40 487.40,331.10 506.00,332.00 506.67,335.13" fill="url(#rb138)" stroke="url(#rb138)" stroke-width="0.6" stroke-linejoin="round"/><polygon points="486.13,337.70 486.77,334.40 506.67,335.13 507.33,338.27" fill="url(#rb139)" stroke="url(#rb139)" stroke-width="0.6" stroke-linejoin="round"/><polygon points="485.50,341.00 486.13,337.70 507.33,338.27 508.00,341.40" fill="url(#rb140)" stroke="url(#rb140)" stroke-width="0.6" stroke-linejoin="round"/><polygon points="484.33,346.33 485.50,341.00 508.00,341.40 508.40,346.80" fill="url(#rb141)" stroke="url(#rb141)" stroke-width="0.6" stroke-linejoin="round"/><polygon points="483.17,351.67 484.33,346.33 508.40,346.80 508.80,352.20" fill="url(#rb142)" stroke="url(#rb142)" stroke-width="0.6" stroke-linejoin="round"/><polygon points="482.00,357.00 483.17,351.67 508.80,352.20 509.20,357.60" fill="url(#rb143)" stroke="url(#rb143)" stroke-width="0.6" stroke-linejoin="round"/><polygon points="481.23,360.33 482.00,357.00 509.20,357.60 507.63,360.17" fill="url(#rb144)" stroke="url(#rb144)" stroke-width="0.6" stroke-linejoin="round"/><polygon points="480.47,363.67 481.23,360.33 507.63,360.17 506.07,362.73" fill="url(#rb145)" stroke="url(#rb145)" stroke-width="0.6" stroke-linejoin="round"/><polygon points="479.70,367.00 480.47,363.67 506.07,362.73 504.50,365.30" fill="url(#rb146)" stroke="url(#rb146)" stroke-width="0.6" stroke-linejoin="round"/><polygon points="478.80,370.33 479.70,367.00 504.50,365.30 502.53,369.30" fill="url(#rb147)" stroke="url(#rb147)" stroke-width="0.6" stroke-linejoin="round"/><polygon points="477.90,373.67 478.80,370.33 502.53,369.30 500.57,373.30" fill="url(#rb148)" stroke="url(#rb148)" stroke-width="0.6" stroke-linejoin="round"/><polygon points="477.00,377.00 477.90,373.67 500.57,373.30 498.60,377.30" fill="url(#rb149)" stroke="url(#rb149)" stroke-width="0.6" stroke-linejoin="round"/><polygon points="476.20,379.97 477.00,377.00 498.60,377.30 495.17,380.73" fill="url(#rb150)" stroke="url(#rb150)" stroke-width="0.6" stroke-linejoin="round"/><polygon points="475.40,382.93 476.20,379.97 495.17,380.73 491.73,384.17" fill="url(#rb151)" stroke="url(#rb151)" stroke-width="0.6" stroke-linejoin="round"/><polygon points="474.60,385.90 475.40,382.93 491.73,384.17 488.30,387.60" fill="url(#rb152)" stroke="url(#rb152)" stroke-width="0.6" stroke-linejoin="round"/><polygon points="473.23,388.77 474.60,385.90 488.30,387.60 484.87,392.17" fill="url(#rb153)" stroke="url(#rb153)" stroke-width="0.6" stroke-linejoin="round"/><polygon points="471.87,391.63 473.23,388.77 484.87,392.17 481.43,396.73" fill="url(#rb154)" stroke="url(#rb154)" stroke-width="0.6" stroke-linejoin="round"/><polygon points="470.50,394.50 471.87,391.63 481.43,396.73 478.00,401.30" fill="url(#rb155)" stroke="url(#rb155)" stroke-width="0.6" stroke-linejoin="round"/><polygon points="469.87,396.77 470.50,394.50 478.00,401.30 475.73,402.70" fill="url(#rb156)" stroke="url(#rb156)" stroke-width="0.6" stroke-linejoin="round"/><polygon points="469.23,399.03 469.87,396.77 475.73,402.70 473.47,404.10" fill="url(#rb157)" stroke="url(#rb157)" stroke-width="0.6" stroke-linejoin="round"/><polygon points="468.60,401.30 469.23,399.03 473.47,404.10 471.20,405.50" fill="url(#rb158)" stroke="url(#rb158)" stroke-width="0.6" stroke-linejoin="round"/><polygon points="466.73,403.53 468.60,401.30 471.20,405.50" fill="url(#rb159)" stroke="url(#rb159)" stroke-width="0.6" stroke-linejoin="round"/><polygon points="464.87,405.77 465.07,399.83 468.13,402.67" fill="url(#rb160)" stroke="url(#rb160)" stroke-width="0.6" stroke-linejoin="round"/><polygon points="462.00,397.00 465.07,399.83 464.87,405.77 463.00,408.00" fill="url(#rb161)" stroke="url(#rb161)" stroke-width="0.6" stroke-linejoin="round"/><polygon points="459.93,395.40 462.00,397.00 463.00,408.00 460.00,408.60" fill="url(#rb162)" stroke="url(#rb162)" stroke-width="0.6" stroke-linejoin="round"/><polygon points="457.00,409.20 457.87,393.80 459.93,395.40 460.00,408.60" fill="url(#rb163)" stroke="url(#rb163)" stroke-width="0.6" stroke-linejoin="round"/><polygon points="454.00,409.80 455.80,392.20 457.87,393.80 457.00,409.20" fill="url(#rb164)" stroke="url(#rb164)" stroke-width="0.6" stroke-linejoin="round"/><polygon points="451.33,410.87 453.53,393.47 455.80,392.20 454.00,409.80" fill="url(#rb165)" stroke="url(#rb165)" stroke-width="0.6" stroke-linejoin="round"/><polygon points="448.67,411.93 451.27,394.73 453.53,393.47 451.33,410.87" fill="url(#rb166)" stroke="url(#rb166)" stroke-width="0.6" stroke-linejoin="round"/><polygon points="446.00,413.00 449.00,396.00 451.27,394.73 448.67,411.93" fill="url(#rb167)" stroke="url(#rb167)" stroke-width="0.6" stroke-linejoin="round"/><polygon points="443.00,414.23 446.67,397.17 449.00,396.00 446.00,413.00" fill="url(#rb168)" stroke="url(#rb168)" stroke-width="0.6" stroke-linejoin="round"/><polygon points="440.00,415.47 444.33,398.33 446.67,397.17 443.00,414.23" fill="url(#rb169)" stroke="url(#rb169)" stroke-width="0.6" stroke-linejoin="round"/><polygon points="437.00,416.70 442.00,399.50 444.33,398.33 440.00,415.47" fill="url(#rb170)" stroke="url(#rb170)" stroke-width="0.6" stroke-linejoin="round"/><polygon points="434.00,417.63 438.67,401.00 442.00,399.50 437.00,416.70" fill="url(#rb171)" stroke="url(#rb171)" stroke-width="0.6" stroke-linejoin="round"/><polygon points="431.00,418.57 435.33,402.50 438.67,401.00 434.00,417.63" fill="url(#rb172)" stroke="url(#rb172)" stroke-width="0.6" stroke-linejoin="round"/><polygon points="428.00,419.50 432.00,404.00 435.33,402.50 431.00,418.57" fill="url(#rb173)" stroke="url(#rb173)" stroke-width="0.6" stroke-linejoin="round"/><polygon points="425.27,420.27 429.07,405.10 432.00,404.00 428.00,419.50" fill="url(#rb174)" stroke="url(#rb174)" stroke-width="0.6" stroke-linejoin="round"/><polygon points="422.53,421.03 426.13,406.20 429.07,405.10 425.27,420.27" fill="url(#rb175)" stroke="url(#rb175)" stroke-width="0.6" stroke-linejoin="round"/><polygon points="419.80,421.80 423.20,407.30 426.13,406.20 422.53,421.03" fill="url(#rb176)" stroke="url(#rb176)" stroke-width="0.6" stroke-linejoin="round"/><polygon points="415.87,422.20 418.67,407.87 423.20,407.30 419.80,421.80" fill="url(#rb177)" stroke="url(#rb177)" stroke-width="0.6" stroke-linejoin="round"/><polygon points="411.93,422.60 414.13,408.43 418.67,407.87 415.87,422.20" fill="url(#rb178)" stroke="url(#rb178)" stroke-width="0.6" stroke-linejoin="round"/><polygon points="408.00,423.00 409.60,409.00 414.13,408.43 411.93,422.60" fill="url(#rb179)" stroke="url(#rb179)" stroke-width="0.6" stroke-linejoin="round"/><polygon points="403.97,423.47 405.03,408.70 409.60,409.00 408.00,423.00" fill="url(#rb180)" stroke="url(#rb180)" stroke-width="0.6" stroke-linejoin="round"/><polygon points="399.93,423.93 400.47,408.40 405.03,408.70 403.97,423.47" fill="url(#rb181)" stroke="url(#rb181)" stroke-width="0.6" stroke-linejoin="round"/><polygon points="395.90,408.10 400.47,408.40 399.93,423.93 395.90,424.40" fill="url(#rb182)" stroke="url(#rb182)" stroke-width="0.6" stroke-linejoin="round"/><polygon points="392.60,425.60 393.60,405.83 395.90,408.10 395.90,424.40" fill="url(#rb183)" stroke="url(#rb183)" stroke-width="0.6" stroke-linejoin="round"/><polygon points="389.30,426.80 391.30,403.57 393.60,405.83 392.60,425.60" fill="url(#rb184)" stroke="url(#rb184)" stroke-width="0.6" stroke-linejoin="round"/><polygon points="386.00,428.00 389.00,401.30 391.30,403.57 389.30,426.80" fill="url(#rb185)" stroke="url(#rb185)" stroke-width="0.6" stroke-linejoin="round"/><polygon points="383.00,429.33 385.00,400.60 389.00,401.30 386.00,428.00" fill="url(#rb186)" stroke="url(#rb186)" stroke-width="0.6" stroke-linejoin="round"/><polygon points="380.00,430.67 381.00,399.90 385.00,400.60 383.00,429.33" fill="url(#rb187)" stroke="url(#rb187)" stroke-width="0.6" stroke-linejoin="round"/><polygon points="377.00,399.20 381.00,399.90 380.00,430.67 377.00,432.00" fill="url(#rb188)" stroke="url(#rb188)" stroke-width="0.6" stroke-linejoin="round"/><polygon points="373.00,399.60 377.00,399.20 377.00,432.00 373.67,433.17" fill="url(#rb189)" stroke="url(#rb189)" stroke-width="0.6" stroke-linejoin="round"/><polygon points="369.00,400.00 373.00,399.60 373.67,433.17 370.33,434.33" fill="url(#rb190)" stroke="url(#rb190)" stroke-width="0.6" stroke-linejoin="round"/><polygon points="365.00,400.40 369.00,400.00 370.33,434.33 367.00,435.50" fill="url(#rb191)" stroke="url(#rb191)" stroke-width="0.6" stroke-linejoin="round"/><polygon points="362.17,404.67 365.00,400.40 367.00,435.50 363.50,436.67" fill="url(#rb192)" stroke="url(#rb192)" stroke-width="0.6" stroke-linejoin="round"/><polygon points="359.33,408.93 362.17,404.67 363.50,436.67 360.00,437.83" fill="url(#rb193)" stroke="url(#rb193)" stroke-width="0.6" stroke-linejoin="round"/><polygon points="356.50,413.20 359.33,408.93 360.00,437.83 356.50,439.00" fill="url(#rb194)" stroke="url(#rb194)" stroke-width="0.6" stroke-linejoin="round"/><polygon points="353.67,439.83 354.33,415.30 356.50,413.20 356.50,439.00" fill="url(#rb195)" stroke="url(#rb195)" stroke-width="0.6" stroke-linejoin="round"/><polygon points="350.83,440.67 352.17,417.40 354.33,415.30 353.67,439.83" fill="url(#rb196)" stroke="url(#rb196)" stroke-width="0.6" stroke-linejoin="round"/><polygon points="348.00,441.50 350.00,419.50 352.17,417.40 350.83,440.67" fill="url(#rb197)" stroke="url(#rb197)" stroke-width="0.6" stroke-linejoin="round"/><polygon points="345.33,442.17 348.17,421.40 350.00,419.50 348.00,441.50" fill="url(#rb198)" stroke="url(#rb198)" stroke-width="0.6" stroke-linejoin="round"/><polygon points="342.67,442.83 346.33,423.30 348.17,421.40 345.33,442.17" fill="url(#rb199)" stroke="url(#rb199)" stroke-width="0.6" stroke-linejoin="round"/><polygon points="340.00,443.50 344.50,425.20 346.33,423.30 342.67,442.83" fill="url(#rb200)" stroke="url(#rb200)" stroke-width="0.6" stroke-linejoin="round"/><polygon points="338.33,444.00 342.67,427.97 344.50,425.20 340.00,443.50" fill="url(#rb201)" stroke="url(#rb201)" stroke-width="0.6" stroke-linejoin="round"/><polygon points="336.67,444.50 340.83,430.73 342.67,427.97 338.33,444.00" fill="url(#rb202)" stroke="url(#rb202)" stroke-width="0.6" stroke-linejoin="round"/><polygon points="335.00,445.00 339.00,433.50 340.83,430.73 336.67,444.50" fill="url(#rb203)" stroke="url(#rb203)" stroke-width="0.6" stroke-linejoin="round"/><polygon points="333.60,445.27 337.40,436.17 339.00,433.50 335.00,445.00" fill="url(#rb204)" stroke="url(#rb204)" stroke-width="0.6" stroke-linejoin="round"/><polygon points="332.20,445.53 335.80,438.83 337.40,436.17 333.60,445.27" fill="url(#rb205)" stroke="url(#rb205)" stroke-width="0.6" stroke-linejoin="round"/><polygon points="330.80,445.80 335.80,438.83 332.20,445.53" fill="url(#rb206)" stroke="url(#rb206)" stroke-width="0.6" stroke-linejoin="round"/><polygon points="328.60,445.54 330.36,441.39 334.20,441.50 330.80,445.80" fill="url(#rb207)" stroke="url(#rb207)" stroke-width="0.6" stroke-linejoin="round"/><polygon points="326.41,445.28 326.53,441.29 330.36,441.39 328.60,445.54" fill="url(#rb208)" stroke="url(#rb208)" stroke-width="0.6" stroke-linejoin="round"/><polygon points="322.69,441.18 326.53,441.29 326.41,445.28 324.21,445.02" fill="url(#rb209)" stroke="url(#rb209)" stroke-width="0.6" stroke-linejoin="round"/><polygon points="319.33,439.01 322.69,441.18 324.21,445.02 319.84,443.36" fill="url(#rb210)" stroke="url(#rb210)" stroke-width="0.6" stroke-linejoin="round"/><polygon points="315.46,441.69 315.97,436.84 319.33,439.01 319.84,443.36" fill="url(#rb211)" stroke="url(#rb211)" stroke-width="0.6" stroke-linejoin="round"/><polygon points="311.09,440.03 312.61,434.67 315.97,436.84 315.46,441.69" fill="url(#rb212)" stroke="url(#rb212)" stroke-width="0.6" stroke-linejoin="round"/><polygon points="307.29,437.11 309.38,430.82 312.61,434.67 311.09,440.03" fill="url(#rb213)" stroke="url(#rb213)" stroke-width="0.6" stroke-linejoin="round"/><polygon points="303.49,434.20 306.15,426.97 309.38,430.82 307.29,437.11" fill="url(#rb214)" stroke="url(#rb214)" stroke-width="0.6" stroke-linejoin="round"/><polygon points="299.68,431.28 302.91,423.12 306.15,426.97 303.49,434.20" fill="url(#rb215)" stroke="url(#rb215)" stroke-width="0.6" stroke-linejoin="round"/><polygon points="296.36,426.39 299.81,418.41 302.91,423.12 299.68,431.28" fill="url(#rb216)" stroke="url(#rb216)" stroke-width="0.6" stroke-linejoin="round"/><polygon points="293.03,421.49 296.70,413.71 299.81,418.41 296.36,426.39" fill="url(#rb217)" stroke="url(#rb217)" stroke-width="0.6" stroke-linejoin="round"/><polygon points="289.70,416.60 293.60,409.00 296.70,413.71 293.03,421.49" fill="url(#rb218)" stroke="url(#rb218)" stroke-width="0.6" stroke-linejoin="round"/><polygon points="285.23,412.13 289.10,405.13 293.60,409.00 289.70,416.60" fill="url(#rb219)" stroke="url(#rb219)" stroke-width="0.6" stroke-linejoin="round"/><polygon points="280.77,407.67 284.60,401.27 289.10,405.13 285.23,412.13" fill="url(#rb220)" stroke="url(#rb220)" stroke-width="0.6" stroke-linejoin="round"/><polygon points="276.30,403.20 280.10,397.40 284.60,401.27 280.77,407.67" fill="url(#rb221)" stroke="url(#rb221)" stroke-width="0.6" stroke-linejoin="round"/><polygon points="271.29,398.94 274.84,394.30 280.10,397.40 276.30,403.20" fill="url(#rb222)" stroke="url(#rb222)" stroke-width="0.6" stroke-linejoin="round"/><polygon points="266.29,394.67 269.58,391.19 274.84,394.30 271.29,398.94" fill="url(#rb223)" stroke="url(#rb223)" stroke-width="0.6" stroke-linejoin="round"/><polygon points="261.28,390.41 264.32,388.09 269.58,391.19 266.29,394.67" fill="url(#rb224)" stroke="url(#rb224)" stroke-width="0.6" stroke-linejoin="round"/><polygon points="257.92,388.22 260.48,386.28 264.32,388.09 261.28,390.41" fill="url(#rb225)" stroke="url(#rb225)" stroke-width="0.6" stroke-linejoin="round"/><polygon points="254.56,386.04 256.64,384.46 260.48,386.28 257.92,388.22" fill="url(#rb226)" stroke="url(#rb226)" stroke-width="0.6" stroke-linejoin="round"/><polygon points="251.20,383.85 252.80,382.65 256.64,384.46 254.56,386.04" fill="url(#rb227)" stroke="url(#rb227)" stroke-width="0.6" stroke-linejoin="round"/><polygon points="249.30,382.69 250.37,381.51 252.80,382.65 251.20,383.85" fill="url(#rb228)" stroke="url(#rb228)" stroke-width="0.6" stroke-linejoin="round"/><polygon points="247.40,381.52 247.93,380.38 250.37,381.51 249.30,382.69" fill="url(#rb229)" stroke="url(#rb229)" stroke-width="0.6" stroke-linejoin="round"/><polygon points="245.50,379.24 247.93,380.38 247.40,381.52 245.50,380.36" fill="url(#rb230)" stroke="url(#rb230)" stroke-width="0.6" stroke-linejoin="round"/><polygon points="241.63,380.91 242.30,377.59 245.50,379.24 245.50,380.36" fill="url(#rb231)" stroke="url(#rb231)" stroke-width="0.6" stroke-linejoin="round"/><polygon points="237.77,381.45 239.10,375.95 242.30,377.59 241.63,380.91" fill="url(#rb232)" stroke="url(#rb232)" stroke-width="0.6" stroke-linejoin="round"/><polygon points="233.90,382.00 235.90,374.30 239.10,375.95 237.77,381.45" fill="url(#rb233)" stroke="url(#rb233)" stroke-width="0.6" stroke-linejoin="round"/><polygon points="230.07,383.93 232.03,373.53 235.90,374.30 233.90,382.00" fill="url(#rb234)" stroke="url(#rb234)" stroke-width="0.6" stroke-linejoin="round"/><polygon points="226.23,385.87 228.17,372.77 232.03,373.53 230.07,383.93" fill="url(#rb235)" stroke="url(#rb235)" stroke-width="0.6" stroke-linejoin="round"/><polygon points="222.40,387.80 224.30,372.00 228.17,372.77 226.23,385.87" fill="url(#rb236)" stroke="url(#rb236)" stroke-width="0.6" stroke-linejoin="round"/><polygon points="219.20,391.00 221.10,373.10 224.30,372.00 222.40,387.80" fill="url(#rb237)" stroke="url(#rb237)" stroke-width="0.6" stroke-linejoin="round"/><polygon points="216.00,394.20 217.90,374.20 221.10,373.10 219.20,391.00" fill="url(#rb238)" stroke="url(#rb238)" stroke-width="0.6" stroke-linejoin="round"/><polygon points="212.80,397.40 214.70,375.30 217.90,374.20 216.00,394.20" fill="url(#rb239)" stroke="url(#rb239)" stroke-width="0.6" stroke-linejoin="round"/><polygon points="210.20,399.63 212.13,378.17 214.70,375.30 212.80,397.40" fill="url(#rb240)" stroke="url(#rb240)" stroke-width="0.6" stroke-linejoin="round"/><polygon points="207.60,401.87 209.57,381.03 212.13,378.17 210.20,399.63" fill="url(#rb241)" stroke="url(#rb241)" stroke-width="0.6" stroke-linejoin="round"/><polygon points="205.00,404.10 207.00,383.90 209.57,381.03 207.60,401.87" fill="url(#rb242)" stroke="url(#rb242)" stroke-width="0.6" stroke-linejoin="round"/><polygon points="202.47,402.20 204.43,387.77 207.00,383.90 205.00,404.10" fill="url(#rb243)" stroke="url(#rb243)" stroke-width="0.6" stroke-linejoin="round"/><polygon points="199.93,400.30 201.87,391.63 204.43,387.77 202.47,402.20" fill="url(#rb244)" stroke="url(#rb244)" stroke-width="0.6" stroke-linejoin="round"/><polygon points="197.40,398.40 199.30,395.50 201.87,391.63 199.93,400.30" fill="url(#rb245)" stroke="url(#rb245)" stroke-width="0.6" stroke-linejoin="round"/><polygon points="194.67,395.35 196.47,392.75 199.30,395.50 197.40,398.40" fill="url(#rb246)" stroke="url(#rb246)" stroke-width="0.6" stroke-linejoin="round"/><polygon points="191.93,392.30 193.63,390.00 196.47,392.75 194.67,395.35" fill="url(#rb247)" stroke="url(#rb247)" stroke-width="0.6" stroke-linejoin="round"/><polygon points="189.20,389.25 190.80,387.25 193.63,390.00 191.93,392.30" fill="url(#rb248)" stroke="url(#rb248)" stroke-width="0.6" stroke-linejoin="round"/><polygon points="186.26,386.11 188.37,384.29 190.80,387.25 189.20,389.25" fill="url(#rb249)" stroke="url(#rb249)" stroke-width="0.6" stroke-linejoin="round"/><polygon points="183.33,382.96 185.94,381.34 188.37,384.29 186.26,386.11" fill="url(#rb250)" stroke="url(#rb250)" stroke-width="0.6" stroke-linejoin="round"/><polygon points="180.39,379.82 183.51,378.38 185.94,381.34 183.33,382.96" fill="url(#rb251)" stroke="url(#rb251)" stroke-width="0.6" stroke-linejoin="round"/><polygon points="175.95,375.35 179.31,373.88 183.51,378.38 180.39,379.82" fill="url(#rb252)" stroke="url(#rb252)" stroke-width="0.6" stroke-linejoin="round"/><polygon points="171.52,370.88 175.12,369.39 179.31,373.88 175.95,375.35" fill="url(#rb253)" stroke="url(#rb253)" stroke-width="0.6" stroke-linejoin="round"/><polygon points="167.08,366.41 170.92,364.89 175.12,369.39 171.52,370.88" fill="url(#rb254)" stroke="url(#rb254)" stroke-width="0.6" stroke-linejoin="round"/><polygon points="165.72,365.44 169.05,363.92 170.92,364.89 167.08,366.41" fill="url(#rb255)" stroke="url(#rb255)" stroke-width="0.6" stroke-linejoin="round"/><polygon points="164.35,364.48 167.18,362.96 169.05,363.92 165.72,365.44" fill="url(#rb256)" stroke="url(#rb256)" stroke-width="0.6" stroke-linejoin="round"/><polygon points="162.99,363.51 165.31,361.99 167.18,362.96 164.35,364.48" fill="url(#rb257)" stroke="url(#rb257)" stroke-width="0.6" stroke-linejoin="round"/><polygon points="161.75,361.21 164.31,359.16 165.31,361.99 162.99,363.51" fill="url(#rb258)" stroke="url(#rb258)" stroke-width="0.6" stroke-linejoin="round"/><polygon points="160.52,358.91 163.32,356.32 164.31,359.16 161.75,361.21" fill="url(#rb259)" stroke="url(#rb259)" stroke-width="0.6" stroke-linejoin="round"/><polygon points="159.28,356.61 162.32,353.49 163.32,356.32 160.52,358.91" fill="url(#rb260)" stroke="url(#rb260)" stroke-width="0.6" stroke-linejoin="round"/><polygon points="158.22,353.27 161.85,350.13 162.32,353.49 159.28,356.61" fill="url(#rb261)" stroke="url(#rb261)" stroke-width="0.6" stroke-linejoin="round"/><polygon points="157.16,349.94 161.37,346.76 161.85,350.13 158.22,353.27" fill="url(#rb262)" stroke="url(#rb262)" stroke-width="0.6" stroke-linejoin="round"/><polygon points="156.10,346.60 160.90,343.40 161.37,346.76 157.16,349.94" fill="url(#rb263)" stroke="url(#rb263)" stroke-width="0.6" stroke-linejoin="round"/><polygon points="155.36,343.51 160.61,340.36 160.90,343.40 156.10,346.60" fill="url(#rb264)" stroke="url(#rb264)" stroke-width="0.6" stroke-linejoin="round"/><polygon points="154.61,340.41 160.32,337.32 160.61,340.36 155.36,343.51" fill="url(#rb265)" stroke="url(#rb265)" stroke-width="0.6" stroke-linejoin="round"/><polygon points="153.87,337.32 160.03,334.28 160.32,337.32 154.61,340.41" fill="url(#rb266)" stroke="url(#rb266)" stroke-width="0.6" stroke-linejoin="round"/><polygon points="153.36,330.93 159.44,327.84 160.03,334.28 153.87,337.32" fill="url(#rb267)" stroke="url(#rb267)" stroke-width="0.6" stroke-linejoin="round"/><polygon points="152.86,324.54 158.84,321.39 159.44,327.84 153.36,330.93" fill="url(#rb268)" stroke="url(#rb268)" stroke-width="0.6" stroke-linejoin="round"/><polygon points="152.35,318.15 158.25,314.95 158.84,321.39 152.86,324.54" fill="url(#rb269)" stroke="url(#rb269)" stroke-width="0.6" stroke-linejoin="round"/><polygon points="152.35,318.15 152.61,315.00 158.89,311.73 158.25,314.95" fill="url(#rb270)" stroke="url(#rb270)" stroke-width="0.6" stroke-linejoin="round"/><polygon points="152.61,315.00 152.86,311.85 159.54,308.52 158.89,311.73" fill="url(#rb271)" stroke="url(#rb271)" stroke-width="0.6" stroke-linejoin="round"/><polygon points="152.86,311.85 153.12,308.70 160.18,305.30 159.54,308.52" fill="url(#rb272)" stroke="url(#rb272)" stroke-width="0.6" stroke-linejoin="round"/><polygon points="152.91,310.13 153.12,308.70 157.95,304.87 160.18,305.30" fill="url(#rb273)" stroke="url(#rb273)" stroke-width="0.6" stroke-linejoin="round"/><polygon points="152.71,311.57 152.91,310.13 155.73,304.43 157.95,304.87" fill="url(#rb274)" stroke="url(#rb274)" stroke-width="0.6" stroke-linejoin="round"/><polygon points="152.50,313.00 153.50,304.00 155.73,304.43" fill="url(#rb275)" stroke="url(#rb275)" stroke-width="0.6" stroke-linejoin="round"/></g>
<text x="581.5" y="226.0" font-size="11" text-anchor="start" textLength="78" lengthAdjust="spacingAndGlyphs">A_max(W) [mm]</text>
<text x="619.5" y="250.7" font-size="13" text-anchor="start" textLength="46" lengthAdjust="spacingAndGlyphs">0.00352</text>
<text x="619.5" y="274.7" font-size="13" text-anchor="start" textLength="46" lengthAdjust="spacingAndGlyphs">0.00264</text>
<text x="619.5" y="298.8" font-size="13" text-anchor="start" textLength="46" lengthAdjust="spacingAndGlyphs">0.00176</text>
<text x="619.5" y="322.8" font-size="13" text-anchor="start" textLength="46" lengthAdjust="spacingAndGlyphs">0.00088</text>
<text x="619.5" y="346.8" font-size="13" text-anchor="start" >0</text>
<text x="64.5" y="450.0" font-size="13" text-anchor="middle" >-180</text>
<text x="144.5" y="473.0" font-size="13" text-anchor="middle" >-100</text>
<text x="225.3" y="496.0" font-size="13" text-anchor="middle" >-20</text>
<text x="304.3" y="520.0" font-size="13" text-anchor="middle" >60</text>
<text x="385.0" y="543.0" font-size="13" text-anchor="middle" >140</text>
<text x="213.0" y="519.0" font-size="11" text-anchor="middle" >X [mm]</text>
<text x="433.8" y="535.0" font-size="13" text-anchor="middle" >-160</text>
<text x="476.8" y="495.0" font-size="13" text-anchor="middle" >-80</text>
<text x="517.0" y="455.0" font-size="13" text-anchor="middle" >0</text>
<text x="566.3" y="415.0" font-size="13" text-anchor="middle" >80</text>
<text x="616.0" y="375.3" font-size="13" text-anchor="middle" >160</text>
<text x="562.0" y="470.0" font-size="11" text-anchor="middle" >Y [mm]</text></svg>
<svg width="1612" height="935" viewBox="0 0 1612 935"><defs>
<clipPath id="imgclip"><rect x="870" y="47" width="573" height="573"/></clipPath>
<clipPath id="discclip"><ellipse cx="1146.7" cy="336.3" rx="259.2" ry="274.9" transform="rotate(-9.4 1146.7 336.3)"/></clipPath>
<clipPath id="hubclip"><ellipse cx="1143.7" cy="335.5" rx="162.3" ry="173.5"/></clipPath>
<filter id="disctex" x="0" y="0" width="100%" height="100%" color-interpolation-filters="sRGB">
 <feTurbulence type="fractalNoise" baseFrequency="0.24" numOctaves="1" seed="5"/>
 <feColorMatrix type="matrix" values="1 0 0 0 0  1 0 0 0 0  1 0 0 0 0  0 0 0 0 1"/>
 <feComponentTransfer result="a"><feFuncR type="table" tableValues="0.870 0.870 0.870 0.870 0.870 0.870 0.870 0.870 0.870 0.870 0.870 0.870 0.870 0.870 0.870 0.870 0.870 0.870 0.870 0.870 0.870 0.870 0.870 0.870 0.870 0.866 0.862 0.858 0.853 0.849 0.845 0.841 0.837 0.833 0.828 0.824 0.820 0.816 0.812 0.807 0.803 0.799 0.795 0.791 0.787 0.782 0.778 0.774 0.770 0.766 0.762 0.758 0.753 0.709 0.507 0.304 0.101 0.020 0.020 0.020 0.020 0.020 0.020 0.020 0.020 0.020 0.020 0.020 0.020 0.020 0.020 0.020 0.020 0.020 0.020 0.020 0.020 0.020 0.020 0.020 0.020"/><feFuncG type="table" tableValues="0.870 0.870 0.870 0.870 0.870 0.870 0.870 0.870 0.870 0.870 0.870 0.870 0.870 0.870 0.870 0.870 0.870 0.870 0.870 0.870 0.870 0.870 0.870 0.870 0.870 0.866 0.862 0.858 0.853 0.849 0.845 0.841 0.837 0.833 0.828 0.824 0.820 0.816 0.812 0.807 0.803 0.799 0.795 0.791 0.787 0.782 0.778 0.774 0.770 0.766 0.762 0.758 0.753 0.709 0.507 0.304 0.101 0.020 0.020 0.020 0.020 0.020 0.020 0.020 0.020 0.020 0.020 0.020 0.020 0.020 0.020 0.020 0.020 0.020 0.020 0.020 0.020 0.020 0.020 0.020 0.020"/><feFuncB type="table" tableValues="0.870 0.870 0.870 0.870 0.870 0.870 0.870 0.870 0.870 0.870 0.870 0.870 0.870 0.870 0.870 0.870 0.870 0.870 0.870 0.870 0.870 0.870 0.870 0.870 0.870 0.866 0.862 0.858 0.853 0.849 0.845 0.841 0.837 0.833 0.828 0.824 0.820 0.816 0.812 0.807 0.803 0.799 0.795 0.791 0.787 0.782 0.778 0.774 0.770 0.766 0.762 0.758 0.753 0.709 0.507 0.304 0.101 0.020 0.020 0.020 0.020 0.020 0.020 0.020 0.020 0.020 0.020 0.020 0.020 0.020 0.020 0.020 0.020 0.020 0.020 0.020 0.020 0.020 0.020 0.020 0.020"/></feComponentTransfer>
 <feTurbulence type="fractalNoise" baseFrequency="0.5" numOctaves="1" seed="11"/>
 <feColorMatrix type="matrix" values="1 0 0 0 0  1 0 0 0 0  1 0 0 0 0  0 0 0 0 1"/>
 <feComponentTransfer result="b"><feFuncR type="table" tableValues="0.980 0.980 0.980 0.980 0.980 0.980 0.980 0.980 0.980 0.980 0.980 0.980 0.980 0.980 0.980 0.980 0.980 0.980 0.980 0.980 0.980 0.980 0.980 0.980 0.980 0.977 0.975 0.972 0.970 0.967 0.965 0.962 0.959 0.957 0.954 0.952 0.949 0.947 0.944 0.941 0.939 0.936 0.934 0.931 0.929 0.926 0.923 0.921 0.918 0.916 0.913 0.911 0.768 0.591 0.414 0.237 0.060 0.060 0.060 0.060 0.060 0.060 0.060 0.060 0.060 0.060 0.060 0.060 0.060 0.060 0.060 0.060 0.060 0.060 0.060 0.060 0.060 0.060 0.060 0.060 0.060"/><feFuncG type="table" tableValues="0.980 0.980 0.980 0.980 0.980 0.980 0.980 0.980 0.980 0.980 0.980 0.980 0.980 0.980 0.980 0.980 0.980 0.980 0.980 0.980 0.980 0.980 0.980 0.980 0.980 0.977 0.975 0.972 0.970 0.967 0.965 0.962 0.959 0.957 0.954 0.952 0.949 0.947 0.944 0.941 0.939 0.936 0.934 0.931 0.929 0.926 0.923 0.921 0.918 0.916 0.913 0.911 0.768 0.591 0.414 0.237 0.060 0.060 0.060 0.060 0.060 0.060 0.060 0.060 0.060 0.060 0.060 0.060 0.060 0.060 0.060 0.060 0.060 0.060 0.060 0.060 0.060 0.060 0.060 0.060 0.060"/><feFuncB type="table" tableValues="0.980 0.980 0.980 0.980 0.980 0.980 0.980 0.980 0.980 0.980 0.980 0.980 0.980 0.980 0.980 0.980 0.980 0.980 0.980 0.980 0.980 0.980 0.980 0.980 0.980 0.977 0.975 0.972 0.970 0.967 0.965 0.962 0.959 0.957 0.954 0.952 0.949 0.947 0.944 0.941 0.939 0.936 0.934 0.931 0.929 0.926 0.923 0.921 0.918 0.916 0.913 0.911 0.768 0.591 0.414 0.237 0.060 0.060 0.060 0.060 0.060 0.060 0.060 0.060 0.060 0.060 0.060 0.060 0.060 0.060 0.060 0.060 0.060 0.060 0.060 0.060 0.060 0.060 0.060 0.060 0.060"/></feComponentTransfer>
 <feBlend in="a" in2="b" mode="multiply"/>
 <feGaussianBlur stdDeviation="0.45"/>
</filter>
<filter id="grain" x="0" y="0" width="100%" height="100%" color-interpolation-filters="sRGB">
 <feTurbulence type="fractalNoise" baseFrequency="0.9" numOctaves="2" seed="2"/>
 <feColorMatrix type="matrix" values="0 0 0 0 1  0 0 0 0 1  0 0 0 0 1  5 0 0 0 -2.6"/>
</filter>
<linearGradient id="discg" gradientUnits="userSpaceOnUse" x1="1330" y1="120" x2="960" y2="560">
 <stop offset="0" stop-color="#fff" stop-opacity="0.10"/><stop offset="0.45" stop-color="#000" stop-opacity="0.0"/><stop offset="1" stop-color="#000" stop-opacity="0.28"/>
</linearGradient>
<radialGradient id="edgeg" gradientUnits="userSpaceOnUse" cx="1146.7" cy="336.3" r="259.2" gradientTransform="translate(1146.7 336.3) rotate(-9.4) scale(1 1.0606) translate(-1146.7 -336.3)">
 <stop offset="0.78" stop-color="#000" stop-opacity="0"/><stop offset="0.9" stop-color="#000" stop-opacity="0.16"/><stop offset="0.97" stop-color="#000" stop-opacity="0.36"/><stop offset="1" stop-color="#000" stop-opacity="0.62"/>
</radialGradient>
<linearGradient id="ringg" gradientUnits="userSpaceOnUse" x1="1040" y1="300" x2="1296" y2="360">
 <stop offset="0" stop-color="#808080"/><stop offset="0.3" stop-color="#6e6e6e"/><stop offset="0.55" stop-color="#6c6c6c"/>
 <stop offset="0.75" stop-color="#9c9c9c"/><stop offset="0.9" stop-color="#e4e4e4"/><stop offset="1" stop-color="#ffffff"/>
</linearGradient>
<radialGradient id="ringhl" gradientUnits="userSpaceOnUse" cx="1290" cy="335" r="92">
 <stop offset="0" stop-color="#fff" stop-opacity="1"/><stop offset="0.45" stop-color="#fff" stop-opacity="0.9"/><stop offset="1" stop-color="#fff" stop-opacity="0"/>
</radialGradient>
<radialGradient id="ringhl2" gradientUnits="userSpaceOnUse" cx="1050" cy="320" r="55">
 <stop offset="0" stop-color="#fff" stop-opacity="0.22"/><stop offset="1" stop-color="#fff" stop-opacity="0"/>
</radialGradient>
<linearGradient id="rimg" gradientUnits="userSpaceOnUse" x1="1000" y1="200" x2="1300" y2="480">
 <stop offset="0" stop-color="#3e3e3e"/><stop offset="0.5" stop-color="#353535"/><stop offset="1" stop-color="#4c4c4c"/>
</linearGradient>
<linearGradient id="bandg" gradientUnits="userSpaceOnUse" x1="1240" y1="200" x2="1060" y2="470">
 <stop offset="0" stop-color="#343434"/><stop offset="0.55" stop-color="#282828"/><stop offset="1" stop-color="#101010"/>
</linearGradient>
<radialGradient id="ringsh" gradientUnits="userSpaceOnUse" cx="1095" cy="445" r="105">
 <stop offset="0" stop-color="#000" stop-opacity="0.42"/><stop offset="0.6" stop-color="#000" stop-opacity="0.25"/><stop offset="1" stop-color="#000" stop-opacity="0"/>
</radialGradient>
<radialGradient id="holeg" cx="0.42" cy="0.42" r="0.62">
 <stop offset="0" stop-color="#2a2a2a"/><stop offset="0.7" stop-color="#141414"/><stop offset="1" stop-color="#050505"/>
</radialGradient>
</defs><g clip-path="url(#imgclip)"><rect x="870" y="47" width="573" height="573" fill="#030303"/>
<path d="M1270 47 C1340 70 1400 110 1443 170 L1443 47 Z" fill="#0a0a0a"/>
<path d="M1340 47 C1385 75 1420 100 1443 128 L1443 47 Z" fill="#070707"/>
<path d="M870 135 L960 140 L935 240 L870 250 Z" fill="#0a0a0a"/>
<path d="M1290 575 C1340 560 1400 565 1443 545 L1443 620 L1250 620 Z" fill="#101010"/>
<rect x="1322" y="560.5" width="9" height="2.5" fill="#fff"/><rect x="1312" y="561" width="5" height="1.5" fill="#ddd"/><rect x="1334" y="561.5" width="4" height="1.5" fill="#bbb"/>
<g clip-path="url(#discclip)">
<rect x="876" y="52" width="548" height="568" filter="url(#disctex)"/>
<rect x="876" y="52" width="548" height="568" fill="url(#discg)"/>
<rect x="876" y="52" width="548" height="568" fill="url(#edgeg)"/>
</g>
<path d="M1155.5 72.3 L1168.5 85.7 L1226.9 85.7 L1240.8 99.6 L1256.4 99.6 L1285.8 129.1 L1299.8 129.1 L1343.2 172.6 L1343.2 186.5 L1356.3 199.5 L1356.3 214.4 L1371.2 229.3 L1371.2 243.9 L1385.1 257.9 L1385.1 415.3 L1371.2 429.3 L1371.2 444.8 L1356.3 458.8 L1356.3 474.3 L1327.7 500.6 L1327.7 517.7 L1301.3 544.0 L1285.8 544.0 L1271.9 559.0 L1256.4 559.0 L1242.4 572.6 L1055.3 572.6 L1041.3 559.0 L1027.4 559.0 L1013.4 544.0 L997.9 544.0 L970.0 516.2 L970.0 502.2 L941.1 474.3 L941.1 458.8 L926.5 444.8 L926.5 429.3 L912.6 416.9 L912.6 357.9 L898.6 344.0 L898.6 327.7 L912.6 313.7 L912.6 254.8 L926.5 240.8 L926.5 230.0 L942.0 214.4 L942.0 200.5 L955.4 186.5 L955.4 171.0 L996.3 129.1 L1013.4 129.1 L1042.9 99.6 L1069.3 99.6 L1083.2 85.7 L1142.2 85.7 Z M1069.3 143.1 L1199.0 143.1 L1212.9 157.0 L1226.9 157.0 L1299.8 230.0 L1299.8 243.9 L1313.8 257.9 L1313.8 285.8 L1327.7 299.8 L1327.7 373.4 L1313.8 387.4 L1313.8 415.3 L1299.8 429.3 L1299.8 444.8 L1228.4 516.2 L1212.9 516.2 L1199.0 530.1 L1083.2 530.1 L1069.3 516.2 L1055.3 516.2 L1041.3 501.3 L1029.0 501.3 L984.0 457.2 L984.0 444.8 L955.4 416.9 L955.4 371.9 L942.0 357.9 L942.0 312.2 L956.0 298.2 L956.0 256.3 L970.0 242.4 L970.0 228.4 L1041.3 157.0 L1055.3 157.0 Z" fill="#cc00f8" fill-opacity="0.66" fill-rule="evenodd"/>
<ellipse cx="1137.7" cy="333.4" rx="169.5" ry="176.5" fill="#080808"/>
<ellipse cx="1139.5" cy="333.4" rx="171" ry="177.5" fill="none" stroke="#8a8a8a" stroke-width="1.2" stroke-opacity="0.7"/>
<ellipse cx="1143.7" cy="335.5" rx="162.3" ry="173.5" fill="url(#rimg)"/>
<ellipse cx="1154" cy="336" rx="146.5" ry="154.5" fill="#0e0e0e"/>
<ellipse cx="1155" cy="336.3" rx="144" ry="152" fill="url(#bandg)"/>
<ellipse cx="1160" cy="346" rx="140" ry="146" fill="#0b0b0b"/>
<g clip-path="url(#hubclip)" opacity="0.16"><rect x="970" y="155" width="345" height="360" filter="url(#grain)"/></g>
<ellipse cx="1168" cy="335" rx="128.5" ry="135" fill="#0a0a0a"/>
<ellipse cx="1168" cy="335" rx="127" ry="133.5" fill="url(#ringg)"/>
<clipPath id="ringclip"><ellipse cx="1168" cy="335" rx="127" ry="133.5"/></clipPath>
<g clip-path="url(#ringclip)"><rect x="1030" y="190" width="280" height="290" fill="url(#ringhl)"/><rect x="1030" y="190" width="280" height="290" fill="url(#ringhl2)"/><rect x="1030" y="190" width="280" height="290" fill="url(#ringsh)"/><rect x="1030" y="190" width="280" height="290" filter="url(#grain)" opacity="0.22"/></g>
<circle cx="1116" cy="238" r="12.5" fill="#3a3a3a" fill-opacity="0.55"/>
<circle cx="1116" cy="238" r="11.5" fill="url(#holeg)"/>
<circle cx="1179.9" cy="223.4" r="12.5" fill="#3a3a3a" fill-opacity="0.55"/>
<circle cx="1179.9" cy="223.4" r="11.5" fill="url(#holeg)"/>
<circle cx="1240.8" cy="256" r="12.5" fill="#3a3a3a" fill-opacity="0.55"/>
<circle cx="1240.8" cy="256" r="11.5" fill="url(#holeg)"/>
<circle cx="1241.8" cy="257" r="6.5" fill="#3c3c3c"/>
<circle cx="1242.3" cy="257.5" r="4.3" fill="#777" stroke="#e8e8e8" stroke-width="1.6"/>
<circle cx="1242.3" cy="257.5" r="1.8" fill="#333"/>
<circle cx="1272.5" cy="315.2" r="12.5" fill="#3a3a3a" fill-opacity="0.55"/>
<circle cx="1272.5" cy="315.2" r="11.5" fill="url(#holeg)"/>
<circle cx="1260.8" cy="386" r="12.5" fill="#3a3a3a" fill-opacity="0.55"/>
<circle cx="1260.8" cy="386" r="11.5" fill="url(#holeg)"/>
<circle cx="1212" cy="436" r="12.5" fill="#3a3a3a" fill-opacity="0.55"/>
<circle cx="1212" cy="436" r="11.5" fill="url(#holeg)"/>
<circle cx="1213" cy="437" r="6.5" fill="#3c3c3c"/>
<circle cx="1213.5" cy="437.5" r="4.3" fill="#777" stroke="#e8e8e8" stroke-width="1.6"/>
<circle cx="1213.5" cy="437.5" r="1.8" fill="#333"/>
<circle cx="1146" cy="443.3" r="12.5" fill="#3a3a3a" fill-opacity="0.55"/>
<circle cx="1146" cy="443.3" r="11.5" fill="url(#holeg)"/>
<circle cx="1089.8" cy="411" r="12.5" fill="#3a3a3a" fill-opacity="0.55"/>
<circle cx="1089.8" cy="411" r="11.5" fill="url(#holeg)"/>
<circle cx="1061.8" cy="352" r="11.5" fill="#3a3a3a" fill-opacity="0.55"/>
<circle cx="1061.8" cy="352" r="10.5" fill="url(#holeg)"/>
<circle cx="1064.8" cy="352" r="5" fill="#555"/>
<circle cx="1065.8" cy="352" r="2.8" fill="#cfcfcf"/>
<circle cx="1071" cy="286" r="12.5" fill="#3a3a3a" fill-opacity="0.55"/>
<circle cx="1071" cy="286" r="11.5" fill="url(#holeg)"/>
<ellipse cx="1167" cy="334" rx="84" ry="88.2" fill="#060606"/>
<ellipse cx="1168.6" cy="334" rx="79.5" ry="84" fill="#1d1d1d"/>
<ellipse cx="1166" cy="331" rx="80" ry="84.5" fill="none" stroke="#2e2e2e" stroke-width="1.2" stroke-opacity="0.8"/>
<clipPath id="capclip"><ellipse cx="1168.6" cy="334" rx="79.5" ry="84"/></clipPath>
<g clip-path="url(#capclip)" opacity="0.07"><rect x="1085" y="248" width="168" height="174" filter="url(#grain)"/></g></g></svg>
<svg width="1612" height="935" viewBox="0 0 1612 935"><rect x="84.0" y="639.0" width="703.0" height="240.0" fill="#fffff3"/>
<path d="M243.5 639.0 V879.0 M402.5 639.0 V879.0 M562.5 639.0 V879.0 M721.5 639.0 V879.0 M84.0 807.5 H787.0 M84.0 763.5 H787.0 M84.0 718.5 H787.0 M84.0 674.5 H787.0" stroke="#85857e" stroke-width="1" fill="none" shape-rendering="crispEdges"/>
<path d="M84.0 851.5 H787.0" stroke="#1c1c1c" stroke-width="1.1" fill="none"/>
<path d="M84.5 879.0 v-11 M116.5 879.0 v-7 M148.5 879.0 v-7 M180.5 879.0 v-7 M212.5 879.0 v-7 M243.5 879.0 v-11 M275.5 879.0 v-7 M307.5 879.0 v-7 M339.5 879.0 v-7 M371.5 879.0 v-7 M403.5 879.0 v-11 M435.5 879.0 v-7 M467.5 879.0 v-7 M498.5 879.0 v-7 M530.5 879.0 v-7 M562.5 879.0 v-11 M594.5 879.0 v-7 M626.5 879.0 v-7 M658.5 879.0 v-7 M690.5 879.0 v-7 M722.5 879.0 v-11 M753.5 879.0 v-7 M785.5 879.0 v-7 M84.0 878.5 h7 M84.0 869.5 h7 M84.0 860.5 h7 M84.0 852.5 h11 M84.0 843.5 h7 M84.0 834.5 h7 M84.0 825.5 h7 M84.0 816.5 h7 M84.0 807.5 h11 M84.0 798.5 h7 M84.0 789.5 h7 M84.0 780.5 h7 M84.0 772.5 h7 M84.0 763.5 h11 M84.0 754.5 h7 M84.0 745.5 h7 M84.0 736.5 h7 M84.0 727.5 h7 M84.0 718.5 h11 M84.0 709.5 h7 M84.0 701.5 h7 M84.0 692.5 h7 M84.0 683.5 h7 M84.0 674.5 h11 M84.0 665.5 h7 M84.0 656.5 h7 M84.0 647.5 h7" stroke="#3c3c3c" stroke-width="1.5" fill="none"/>
<path d="M87.6 640.0 L88.6 700 L89.4 766 L90.2 700 L91.2 640.0 M92.2 640.0 L92.8 700 L93.6 763" stroke="#ff0000" stroke-width="1.9" fill="none" stroke-linejoin="round"/>
<path d="M93.6 763.0 L93.9 771.0 L94.2 780.6 L94.5 785.8 L94.8 795.3 L95.2 810.6 L95.5 795.4 L95.8 815.8 L96.1 802.9 L96.4 817.6 L96.8 824.5 L97.1 823.9 L97.4 832.0 L97.7 824.7 L98.0 830.3 L98.3 832.0 L98.7 836.9 L99.0 839.1 L99.3 835.4 L99.6 837.1 L99.9 839.4 L100.3 836.0 L100.6 840.3 L100.9 837.9 L101.2 840.8 L101.5 840.9 L101.9 840.9 L102.2 843.9 L102.5 844.0 L102.8 841.3 L103.1 842.1 L103.4 842.1 L103.8 843.4 L104.1 840.5 L104.4 843.5 L104.7 845.6 L105.0 841.8 L105.4 843.6 L105.7 844.5 L106.0 847.1 L106.3 846.4 L106.6 846.7 L107.0 847.1 L107.3 843.7 L107.6 846.8 L107.9 846.3 L108.2 845.7 L108.5 843.4 L108.9 847.3 L109.2 845.5 L109.5 845.0 L109.8 843.4 L110.1 843.8 L110.5 843.6 L110.8 846.5 L111.1 845.8 L111.4 846.1 L111.7 843.6 L112.1 843.2 L112.4 847.2 L112.7 847.0 L113.0 846.8 L113.3 846.8 L113.6 845.6 L114.0 845.1 L114.3 846.7 L114.6 847.9 L114.9 845.9 L115.2 846.2 L115.6 845.2 L115.9 843.3 L116.2 844.6 L116.5 845.4 L116.8 844.9 L117.2 844.6 L117.5 847.6 L117.8 843.5 L118.1 844.0 L118.4 843.5 L118.7 843.8 L119.1 845.7 L119.4 845.5 L119.7 846.7 L120.0 843.8 L120.3 846.1 L120.7 845.2 L121.0 842.5 L121.3 837.9 L121.6 819.7 L121.9 779.4 L122.3 821.3 L122.6 837.8 L122.9 842.8 L123.2 843.3 L123.5 845.7 L123.8 841.8 L124.2 842.9 L124.5 844.5 L124.8 842.6 L125.1 839.8 L125.4 838.2 L125.8 841.1 L126.1 840.0 L126.4 840.9 L126.7 844.3 L127.0 844.8 L127.4 847.0 L127.7 847.2 L128.0 846.2 L128.3 846.7 L128.6 844.0 L129.0 847.3 L129.3 848.0 L129.6 843.6 L129.9 845.7 L130.2 847.6 L130.5 845.6 L130.9 848.2 L131.2 845.8 L131.5 843.6 L131.8 844.2 L132.1 845.0 L132.5 847.1 L132.8 846.6 L133.1 847.6 L133.4 844.7 L133.7 845.9 L134.1 844.7 L134.4 846.9 L134.7 847.4 L135.0 845.5 L135.3 845.1 L135.6 845.4 L136.0 845.5 L136.3 845.5 L136.6 845.6 L136.9 846.7 L137.2 846.1 L137.6 846.4 L137.9 847.1 L138.2 847.1 L138.5 846.6 L138.8 846.6 L139.2 845.8 L139.5 845.3 L139.8 846.3 L140.1 845.3 L140.4 845.2 L140.7 845.3 L141.1 846.5 L141.4 846.8 L141.7 846.8 L142.0 846.8 L142.3 846.8 L142.7 846.0 L143.0 845.5 L143.3 845.6 L143.6 846.3 L143.9 846.0 L144.3 845.7 L144.6 847.1 L144.9 846.0 L145.2 845.5 L145.5 845.7 L145.8 845.8 L146.2 846.3 L146.5 846.9 L146.8 845.8 L147.1 846.6 L147.4 845.7 L147.8 845.4 L148.4 846.5 L149.0 846.5 L149.7 845.5 L150.3 845.9 L150.9 847.0 L151.6 847.1 L152.2 847.1 L152.9 845.6 L153.5 845.8 L154.1 847.1 L154.8 845.8 L155.4 845.5 L156.0 846.1 L156.7 846.7 L157.3 846.4 L158.0 847.2 L158.6 847.4 L159.2 845.6 L159.9 846.2 L160.5 846.5 L161.1 845.7 L161.8 846.6 L162.4 845.8 L163.1 845.9 L163.7 847.1 L164.3 847.0 L165.0 847.0 L165.6 847.1 L166.3 846.4 L166.9 847.0 L167.5 846.7 L168.2 847.3 L168.8 845.8 L169.4 846.9 L170.1 846.7 L170.7 846.4 L171.4 845.8 L172.0 846.8 L172.6 845.8 L173.3 846.6 L173.9 846.6 L174.5 846.6 L175.2 847.6 L175.8 846.8 L176.5 847.3 L177.1 847.6 L177.7 846.1 L178.4 847.3 L179.0 846.7 L179.6 846.2 L180.3 846.6 L180.9 847.0 L181.6 846.7 L182.2 846.6 L182.8 846.1 L183.5 847.5 L184.1 846.6 L184.7 847.2 L185.4 847.2 L186.0 846.2 L186.7 846.7 L187.3 846.6 L187.9 846.2 L188.6 845.9 L189.2 846.9 L189.8 846.5 L190.5 846.7 L191.1 846.7 L191.8 846.4 L192.4 846.9 L193.0 846.7 L193.7 846.8 L194.3 845.9 L194.9 846.4 L195.6 846.0 L196.2 845.9 L196.9 847.3 L197.5 846.7 L198.1 845.9 L198.8 846.1 L199.4 847.5 L200.0 847.5 L200.7 846.9 L201.3 847.6 L202.0 847.3 L202.6 847.6 L203.2 846.5 L203.9 846.3 L204.5 846.0 L205.1 847.5 L205.8 846.4 L206.4 846.5 L207.1 847.5 L207.7 846.1 L208.3 845.9 L209.0 847.4 L209.6 846.0 L210.2 847.0 L210.9 846.9 L211.5 845.9 L212.2 846.2 L212.8 847.5 L213.4 847.0 L214.1 846.8 L214.7 847.2 L215.3 847.5 L216.0 847.2 L216.6 846.4 L217.3 847.8 L217.9 846.8 L218.5 847.0 L219.2 847.8 L219.8 847.2 L220.4 846.6 L221.1 846.9 L221.7 847.7 L222.4 845.9 L223.0 846.3 L223.6 846.0 L224.3 847.7 L224.9 847.3 L225.5 847.8 L226.2 846.3 L226.8 847.3 L227.5 847.6 L228.1 847.1 L228.7 846.1 L229.4 846.3 L230.0 847.4 L230.6 847.6 L231.3 846.1 L231.9 846.8 L232.6 846.5 L233.2 847.7 L233.8 847.8 L234.5 846.5 L235.1 847.1 L235.7 847.7 L236.4 846.1 L237.0 846.7 L237.7 846.3 L238.3 847.7 L238.9 846.2 L239.6 847.8 L240.2 846.2 L240.8 847.0 L241.5 847.2 L242.1 846.8 L242.8 846.1 L243.4 847.4 L244.0 847.7 L244.7 846.9 L245.3 847.4 L246.0 847.7 L246.6 847.6 L247.2 847.8 L247.9 847.5 L248.5 847.3 L249.1 847.3 L249.8 846.4 L250.4 847.3 L251.1 846.9 L251.7 847.6 L252.3 847.2 L253.0 847.9 L253.6 847.4 L254.2 847.9 L254.9 846.5 L255.5 846.8 L256.2 847.5 L256.8 847.0 L257.4 846.1 L258.1 847.7 L258.7 846.3 L259.3 847.1 L260.0 847.0 L260.6 846.3 L261.3 847.2 L261.9 846.9 L262.5 846.6 L263.2 846.0 L263.8 847.3 L264.4 846.3 L265.1 846.5 L265.7 846.7 L266.4 847.1 L267.0 847.2 L267.6 847.8 L268.3 847.7 L268.9 847.8 L269.5 846.5 L270.2 847.4 L270.8 847.6 L271.5 847.8 L272.1 846.3 L272.7 846.2 L273.4 846.6 L274.0 847.4 L274.6 847.5 L275.3 847.4 L275.9 847.0 L276.6 847.6 L277.2 847.1 L277.8 847.4 L278.5 846.0 L279.1 846.0 L279.7 846.9 L280.4 847.4 L281.0 846.0 L281.7 847.3 L282.3 847.2 L282.9 847.9 L283.6 847.2 L284.2 847.0 L284.8 846.9 L285.5 847.5 L286.1 846.9 L286.8 847.9 L287.4 847.4 L288.0 847.7 L288.7 847.1 L289.3 847.8 L289.9 847.9 L290.6 847.3 L291.2 847.5 L291.9 846.8 L292.5 846.9 L293.1 846.4 L293.8 846.6 L294.4 846.5 L295.0 846.2 L295.7 847.1 L296.3 847.3 L297.0 846.0 L297.6 847.6 L298.2 846.5 L298.9 846.6 L299.5 847.8 L300.1 846.3 L300.8 846.2 L301.4 846.7 L302.1 846.5 L302.7 846.3 L303.3 847.6 L304.0 846.9 L304.6 846.9 L305.2 846.3 L305.9 846.3 L306.5 846.3 L307.2 846.7 L307.8 846.1 L308.4 846.5 L309.1 846.5 L309.7 847.4 L310.3 847.8 L311.0 847.6 L311.6 847.2 L312.3 847.7 L312.9 846.2 L313.5 846.8 L314.2 846.6 L314.8 846.6 L315.4 846.5 L316.1 846.9 L316.7 847.8 L317.4 846.3 L318.0 846.4 L318.6 846.9 L319.3 846.8 L319.9 846.5 L320.5 847.7 L321.2 846.4 L321.8 847.3 L322.5 847.7 L323.1 847.3 L323.7 846.4 L324.4 847.4 L325.0 846.4 L325.7 845.9 L326.3 846.8 L326.9 847.0 L327.6 846.8 L328.2 846.4 L328.8 846.3 L329.5 846.6 L330.1 846.5 L330.8 847.6 L331.4 847.5 L332.0 847.2 L332.7 846.3 L333.3 847.1 L333.9 846.6 L334.6 847.7 L335.2 847.6 L335.9 847.2 L336.5 846.4 L337.1 846.3 L337.8 846.3 L338.4 847.1 L339.0 846.6 L339.7 846.7 L340.3 846.7 L341.0 847.4 L341.6 845.8 L342.2 847.2 L342.9 845.7 L343.5 845.7 L344.1 847.5 L344.8 846.6 L345.4 845.9 L346.1 845.6 L346.7 846.6 L347.3 846.9 L348.0 847.0 L348.6 845.5 L349.2 847.0 L349.9 846.2 L350.5 847.0 L351.2 846.3 L351.8 845.4 L352.4 847.0 L353.1 845.6 L353.7 846.2 L354.3 845.4 L355.0 845.7 L355.6 846.6 L356.3 845.2 L356.9 846.0 L357.5 846.8 L358.2 846.8 L358.8 845.8 L359.4 845.8 L360.1 846.0 L360.7 846.2 L361.4 845.7 L362.0 845.7 L362.6 844.6 L363.3 846.1 L363.9 844.5 L364.5 844.2 L365.2 845.4 L365.8 843.7 L366.5 843.9 L367.1 843.3 L367.7 844.3 L368.4 843.9 L369.0 843.6 L369.6 842.1 L370.3 842.5 L370.9 842.5 L371.6 841.9 L371.9 842.0 L372.2 842.1 L372.5 841.7 L372.8 840.0 L373.2 840.7 L373.5 839.1 L373.8 840.0 L374.1 839.6 L374.4 838.6 L374.7 838.8 L375.1 837.9 L375.4 836.2 L375.7 835.7 L376.0 835.1 L376.3 834.7 L376.7 833.2 L377.0 832.2 L377.3 831.8 L377.6 830.1 L377.9 829.7 L378.3 826.3 L378.6 824.1 L378.9 820.0 L379.2 815.1 L379.5 808.4 L379.8 797.4 L380.2 777.2 L380.5 749.5 L380.8 710.6 L381.1 689.3 L381.4 711.0 L381.8 748.3 L382.1 777.1 L382.4 796.9 L382.7 807.7 L383.0 815.8 L383.4 820.3 L383.7 824.3 L384.0 827.4 L384.3 829.5 L384.6 831.1 L384.9 831.1 L385.3 833.0 L385.6 834.6 L385.9 834.1 L386.2 834.7 L386.5 836.5 L386.9 837.8 L387.2 838.2 L387.5 839.0 L387.8 839.0 L388.1 839.9 L388.5 840.1 L388.8 840.4 L389.1 840.2 L389.4 839.9 L389.7 840.5 L390.0 841.4 L390.7 841.9 L391.3 842.2 L392.0 842.9 L392.6 843.3 L393.2 844.2 L393.9 844.1 L394.5 843.0 L395.1 844.9 L395.8 844.3 L396.4 844.3 L397.1 844.0 L397.7 845.4 L398.3 845.4 L399.0 845.6 L399.6 845.4 L400.2 845.5 L400.9 844.6 L401.5 844.9 L402.2 844.9 L402.8 846.6 L403.4 846.7 L404.1 845.4 L404.7 845.1 L405.4 846.0 L406.0 845.8 L406.6 847.0 L407.3 846.3 L407.9 845.3 L408.5 845.5 L409.2 845.5 L409.8 845.3 L410.5 846.8 L411.1 847.1 L411.7 847.0 L412.4 846.3 L413.0 846.0 L413.6 845.6 L414.3 846.0 L414.9 846.2 L415.6 846.0 L416.2 846.6 L416.8 846.4 L417.5 847.4 L418.1 846.0 L418.7 847.1 L419.4 845.8 L420.0 846.3 L420.7 847.0 L421.3 847.4 L421.9 847.1 L422.6 846.4 L423.2 846.3 L423.8 847.4 L424.5 847.5 L425.1 846.7 L425.8 846.6 L426.4 846.9 L427.0 847.3 L427.7 846.5 L428.3 847.7 L428.9 847.1 L429.6 846.8 L430.2 845.9 L430.9 846.5 L431.5 846.0 L432.1 846.8 L432.8 847.3 L433.4 847.3 L434.0 845.9 L434.7 846.4 L435.3 847.2 L436.0 847.8 L436.6 846.8 L437.2 846.5 L437.9 847.0 L438.5 847.3 L439.1 846.5 L439.8 846.0 L440.4 847.4 L441.1 847.8 L441.7 847.2 L442.3 847.0 L443.0 846.5 L443.6 847.5 L444.2 846.3 L444.9 846.4 L445.5 846.9 L446.2 847.5 L446.8 846.0 L447.4 847.3 L448.1 846.3 L448.7 847.4 L449.3 847.5 L450.0 846.4 L450.6 847.3 L451.3 846.0 L451.9 846.9 L452.5 847.5 L453.2 847.5 L453.8 847.1 L454.4 846.6 L455.1 846.1 L455.7 847.6 L456.4 847.1 L457.0 847.5 L457.6 846.0 L458.3 847.6 L458.9 847.8 L459.5 847.8 L460.2 847.2 L460.8 846.2 L461.5 846.2 L462.1 846.5 L462.7 846.0 L463.4 846.1 L464.0 847.3 L464.6 847.6 L465.3 846.1 L465.9 846.5 L466.6 847.9 L467.2 846.6 L467.8 847.2 L468.5 847.2 L469.1 847.3 L469.7 847.6 L470.4 847.9 L471.0 847.4 L471.7 847.3 L472.3 846.1 L472.9 847.7 L473.6 846.1 L474.2 847.5 L474.8 847.3 L475.5 846.4 L476.1 846.4 L476.8 847.1 L477.4 847.9 L478.0 847.0 L478.7 847.2 L479.3 846.2 L479.9 847.6 L480.6 847.3 L481.2 846.2 L481.9 847.9 L482.5 847.2 L483.1 846.4 L483.8 846.5 L484.4 847.9 L485.1 847.9 L485.7 847.8 L486.3 846.2 L487.0 847.5 L487.6 846.5 L488.2 846.2 L488.9 847.3 L489.5 847.4 L490.2 846.1 L490.8 846.8 L491.4 847.5 L492.1 846.6 L492.7 847.4 L493.3 847.4 L494.0 848.0 L494.6 846.5 L495.3 846.2 L495.9 846.7 L496.5 846.1 L497.2 847.9 L497.8 847.5 L498.4 847.1 L499.1 846.1 L499.7 846.1 L500.4 847.2 L501.0 847.5 L501.6 847.1 L502.3 847.0 L502.9 846.2 L503.5 847.6 L504.2 846.4 L504.8 846.5 L505.5 846.4 L506.1 846.5 L506.7 846.8 L507.4 847.4 L508.0 847.4 L508.6 847.3 L509.3 846.5 L509.9 847.8 L510.6 847.6 L511.2 846.5 L511.8 847.5 L512.5 847.9 L513.1 847.9 L513.7 846.9 L514.4 847.4 L515.0 846.1 L515.7 846.3 L516.3 846.1 L516.9 847.5 L517.6 847.8 L518.2 847.8 L518.8 847.0 L519.5 846.6 L520.1 847.1 L520.8 847.5 L521.4 847.2 L522.0 846.8 L522.7 846.7 L523.3 846.5 L523.9 846.3 L524.6 846.7 L525.2 847.8 L525.9 846.4 L526.5 847.4 L527.1 846.9 L527.8 847.3 L528.4 846.6 L529.0 847.6 L529.7 847.5 L530.3 847.5 L531.0 847.7 L531.6 846.3 L532.2 846.9 L532.9 847.4 L533.5 847.2 L534.1 846.1 L534.8 847.0 L535.4 847.6 L536.1 846.4 L536.7 846.7 L537.3 846.1 L538.0 847.8 L538.6 847.1 L539.2 846.4 L539.9 846.4 L540.5 846.2 L541.2 847.9 L541.8 847.4 L542.4 847.8 L543.1 847.6 L543.7 846.1 L544.3 846.9 L545.0 846.2 L545.6 847.3 L546.3 846.3 L546.9 847.1 L547.5 847.5 L548.2 846.5 L548.8 846.2 L549.4 847.8 L550.1 846.8 L550.7 846.8 L551.4 847.6 L552.0 847.3 L552.6 847.7 L553.3 847.6 L553.9 847.5 L554.5 846.8 L555.2 846.7 L555.8 847.6 L556.5 848.0 L557.1 847.4 L557.7 846.7 L558.4 847.7 L559.0 847.4 L559.6 847.6 L560.3 846.5 L560.9 846.9 L561.6 847.9 L562.2 847.8 L562.8 847.2 L563.5 846.9 L564.1 846.8 L564.8 847.8 L565.4 847.7 L566.0 846.7 L566.7 847.2 L567.3 847.5 L567.9 847.4 L568.6 846.2 L569.2 847.4 L569.9 846.9 L570.5 847.3 L571.1 847.2 L571.8 846.3 L572.4 846.1 L573.0 847.3 L573.7 847.6 L574.3 846.6 L575.0 847.6 L575.6 848.0 L576.2 846.3 L576.9 847.2 L577.5 846.4 L578.1 847.2 L578.8 846.3 L579.4 847.1 L580.1 847.7 L580.7 848.0 L581.3 846.9 L582.0 846.8 L582.6 846.2 L583.2 847.8 L583.9 846.8 L584.5 847.3 L585.2 847.0 L585.8 847.7 L586.4 847.5 L587.1 847.0 L587.7 846.2 L588.3 847.8 L589.0 847.1 L589.6 846.4 L590.3 846.1 L590.9 847.6 L591.5 847.8 L592.2 846.2 L592.8 846.1 L593.4 847.1 L594.1 847.9 L594.7 846.2 L595.4 847.3 L596.0 846.3 L596.6 846.8 L597.3 846.4 L597.9 847.7 L598.5 846.5 L599.2 847.6 L599.8 847.2 L600.5 846.4 L601.1 846.4 L601.7 847.7 L602.4 847.6 L603.0 847.2 L603.6 847.0 L604.3 847.3 L604.9 847.8 L605.6 847.5 L606.2 846.6 L606.8 846.3 L607.5 847.9 L608.1 846.9 L608.7 846.5 L609.4 847.9 L610.0 846.4 L610.7 847.8 L611.3 846.8 L611.9 846.9 L612.6 846.8 L613.2 847.4 L613.8 847.2 L614.5 846.9 L615.1 847.2 L615.8 846.7 L616.4 847.1 L617.0 847.2 L617.7 848.0 L618.3 846.8 L618.9 847.1 L619.6 847.6 L620.2 846.5 L620.9 846.5 L621.5 847.1 L622.1 847.7 L622.8 847.1 L623.4 847.8 L624.0 847.8 L624.7 847.2 L625.3 847.8 L626.0 847.2 L626.6 847.0 L627.2 847.9 L627.9 846.8 L628.5 847.9 L629.1 846.6 L629.8 846.5 L630.4 847.0 L631.1 847.9 L631.7 847.0 L632.3 847.3 L633.0 846.2 L633.6 847.8 L634.2 846.3 L634.9 846.1 L635.5 846.6 L636.2 846.4 L636.8 847.6 L637.4 846.1 L638.1 847.1 L638.7 846.2 L639.3 846.2 L640.0 847.7 L640.6 846.5 L641.3 846.2 L641.9 847.9 L642.5 847.3 L643.2 846.5 L643.8 847.7 L644.5 846.3 L645.1 847.5 L645.7 846.4 L646.4 847.7 L647.0 847.0 L647.6 846.2 L648.3 847.6 L648.9 847.5 L649.6 847.0 L650.2 847.4 L650.8 847.9 L651.5 847.7 L652.1 847.7 L652.7 846.2 L653.4 846.7 L654.0 846.3 L654.7 847.7 L655.3 846.5 L655.9 847.8 L656.6 847.0 L657.2 846.8 L657.8 847.3 L658.5 846.3 L659.1 846.9 L659.8 846.9 L660.4 846.3 L661.0 847.8 L661.7 846.1 L662.3 846.8 L662.9 847.2 L663.6 846.5 L664.2 847.5 L664.9 846.1 L665.5 846.9 L666.1 847.3 L666.8 846.5 L667.4 847.2 L668.0 847.7 L668.7 846.6 L669.3 847.9 L670.0 846.4 L670.6 847.5 L671.2 846.8 L671.9 846.1 L672.5 846.9 L673.1 846.7 L673.8 847.4 L674.4 848.0 L675.1 847.9 L675.7 847.7 L676.3 846.8 L677.0 847.2 L677.6 847.0 L678.2 846.3 L678.9 847.8 L679.5 847.6 L680.2 846.7 L680.8 848.0 L681.4 848.0 L682.1 847.3 L682.7 847.8 L683.3 847.3 L684.0 847.6 L684.6 846.9 L685.3 846.9 L685.9 847.6 L686.5 846.8 L687.2 847.1 L687.8 847.7 L688.4 846.2 L689.1 847.5 L689.7 847.7 L690.4 847.8 L691.0 846.8 L691.6 846.3 L692.3 846.5 L692.9 847.2 L693.5 847.5 L694.2 848.0 L694.8 846.7 L695.5 846.9 L696.1 847.3 L696.7 846.7 L697.4 847.1 L698.0 846.2 L698.6 846.6 L699.3 847.5 L699.9 846.2 L700.6 847.9 L701.2 847.0 L701.8 847.2 L702.5 847.5 L703.1 847.9 L703.7 846.5 L704.4 848.0 L705.0 846.9 L705.7 846.1 L706.3 847.7 L706.9 847.6 L707.6 846.8 L708.2 847.0 L708.8 846.7 L709.5 846.4 L710.1 847.6 L710.8 847.4 L711.4 847.4 L712.0 847.9 L712.7 846.2 L713.3 846.4 L713.9 846.6 L714.6 847.9 L715.2 846.3 L715.9 846.5 L716.5 847.0 L717.1 846.5 L717.8 847.1 L718.4 847.5 L719.0 847.7 L719.7 847.5 L720.3 847.9 L721.0 847.3 L721.6 846.5 L722.2 846.6 L722.9 846.3 L723.5 846.5 L724.2 847.4 L724.8 846.8 L725.4 847.0 L726.1 846.3 L726.7 846.8 L727.3 847.3 L728.0 846.6 L728.6 846.0 L729.3 847.4 L729.9 846.1 L730.5 847.8 L731.2 847.3 L731.8 847.3 L732.4 846.3 L733.1 845.9 L733.7 846.2 L734.4 847.0 L735.0 845.9 L735.6 847.0 L736.3 847.1 L736.9 845.8 L737.5 846.2 L738.2 846.1 L738.8 846.0 L739.5 845.4 L740.1 846.3 L740.7 845.4 L741.4 845.6 L741.7 845.2 L742.0 845.9 L742.3 845.2 L742.6 845.4 L743.0 845.8 L743.3 845.9 L743.6 844.9 L743.9 845.8 L744.2 844.0 L744.6 845.2 L744.9 845.2 L745.2 844.7 L745.5 842.8 L745.8 843.5 L746.1 843.4 L746.5 843.0 L746.8 842.4 L747.1 840.3 L747.4 839.5 L747.7 838.4 L748.1 837.1 L748.4 837.1 L748.7 834.8 L749.0 833.9 L749.3 831.9 L749.7 831.2 L750.0 830.8 L750.3 832.6 L750.6 831.8 L750.9 832.8 L751.2 834.1 L751.6 837.1 L751.9 838.2 L752.2 839.5 L752.5 840.7 L752.8 840.0 L753.2 840.9 L753.5 841.9 L753.8 842.1 L754.1 842.9 L754.4 844.0 L754.8 844.7 L755.1 845.0 L755.4 844.0 L755.7 845.3 L756.0 845.3 L756.3 845.3 L756.7 846.2 L757.0 845.9 L757.3 846.0 L757.6 845.3 L757.9 846.0 L758.3 846.2 L758.6 845.0 L758.9 846.0 L759.2 845.4 L759.5 845.9 L759.9 847.1 L760.5 846.5 L761.1 846.5 L761.8 845.9 L762.4 846.8 L763.0 846.2 L763.7 846.5 L764.3 847.2 L765.0 846.0 L765.6 847.5 L766.2 846.1 L766.9 847.4 L767.5 847.7 L768.1 847.4 L768.8 846.3 L769.4 845.9 L770.1 847.8 L770.7 846.9 L771.3 846.9 L772.0 846.3 L772.6 847.5 L773.2 846.9 L773.9 847.2 L774.5 846.3 L775.2 847.4 L775.8 846.1 L776.4 847.4 L777.1 847.5 L777.7 846.6 L778.3 846.9 L779.0 847.7 L779.6 846.7 L780.3 847.8 L780.9 846.4 L781.5 846.6 L782.2 846.4 L782.8 846.7 L783.4 847.3 L784.1 847.2 L784.7 847.2 L785.4 846.2 L786.0 847.8 L786.6 846.2" stroke="#ff0000" stroke-width="1.15" fill="none" stroke-linejoin="round"/>
<rect x="650.5" y="643.5" width="133" height="25.5" rx="2" fill="#fffff3" stroke="#a6a69c" stroke-width="1"/>
<line x1="656" y1="655.5" x2="684" y2="655.5" stroke="#ff5a5a" stroke-width="1.5"/>
<text x="688.7" y="660.0" font-size="11" text-anchor="start" textLength="90.6" lengthAdjust="spacingAndGlyphs">Average Amplitude</text>
<rect x="84.0" y="639.0" width="703.0" height="240.0" fill="none" stroke="#5e5e5e" stroke-width="1.5"/>
<text x="80.5" y="678.7" font-size="11" text-anchor="end" >0.0002</text>
<text x="80.5" y="723.1" font-size="11" text-anchor="end" >0.00015</text>
<text x="80.5" y="767.5" font-size="11" text-anchor="end" >0.0001</text>
<text x="80.5" y="811.9" font-size="11" text-anchor="end" >5e-05</text>
<text x="80.5" y="856.3" font-size="11" text-anchor="end" >0</text>
<text x="84.0" y="892.0" font-size="11" text-anchor="middle" >0</text>
<text x="243.4" y="892.0" font-size="11" text-anchor="middle" >500</text>
<text x="402.8" y="892.0" font-size="11" text-anchor="middle" >1000</text>
<text x="562.2" y="892.0" font-size="11" text-anchor="middle" >1500</text>
<text x="721.6" y="892.0" font-size="11" text-anchor="middle" >2000</text>
<text x="435.5" y="904.5" font-size="11" text-anchor="middle" textLength="72.7" lengthAdjust="spacingAndGlyphs">Frequency [Hz]</text>
<text font-size="11" text-anchor="middle" transform="translate(40.5 758) rotate(-90)">W [mm]</text>
<rect x="875.0" y="639.0" width="712.0" height="240.0" fill="#fffff3"/>
<path d="M946.5 639.0 V879.0 M1017.5 639.0 V879.0 M1088.5 639.0 V879.0 M1159.5 639.0 V879.0 M1230.5 639.0 V879.0 M1301.5 639.0 V879.0 M1372.5 639.0 V879.0 M1443.5 639.0 V879.0 M1514.5 639.0 V879.0 M875.0 673.5 H1587.0 M875.0 741.5 H1587.0 M875.0 775.5 H1587.0 M875.0 809.5 H1587.0 M875.0 844.5 H1587.0" stroke="#85857e" stroke-width="1" fill="none" shape-rendering="crispEdges"/>
<path d="M875.0 707.6 H1587.0" stroke="#1c1c1c" stroke-width="1.1" fill="none"/>
<path d="M875.5 879.0 v-11 M889.5 879.0 v-7 M903.5 879.0 v-7 M918.5 879.0 v-7 M932.5 879.0 v-7 M946.5 879.0 v-11 M960.5 879.0 v-7 M975.5 879.0 v-7 M989.5 879.0 v-7 M1003.5 879.0 v-7 M1017.5 879.0 v-11 M1031.5 879.0 v-7 M1046.5 879.0 v-7 M1060.5 879.0 v-7 M1074.5 879.0 v-7 M1088.5 879.0 v-11 M1103.5 879.0 v-7 M1117.5 879.0 v-7 M1131.5 879.0 v-7 M1145.5 879.0 v-7 M1159.5 879.0 v-11 M1174.5 879.0 v-7 M1188.5 879.0 v-7 M1202.5 879.0 v-7 M1216.5 879.0 v-7 M1230.5 879.0 v-11 M1245.5 879.0 v-7 M1259.5 879.0 v-7 M1273.5 879.0 v-7 M1287.5 879.0 v-7 M1302.5 879.0 v-11 M1316.5 879.0 v-7 M1330.5 879.0 v-7 M1344.5 879.0 v-7 M1358.5 879.0 v-7 M1373.5 879.0 v-11 M1387.5 879.0 v-7 M1401.5 879.0 v-7 M1415.5 879.0 v-7 M1430.5 879.0 v-7 M1444.5 879.0 v-11 M1458.5 879.0 v-7 M1472.5 879.0 v-7 M1486.5 879.0 v-7 M1501.5 879.0 v-7 M1515.5 879.0 v-11 M1529.5 879.0 v-7 M1543.5 879.0 v-7 M1558.5 879.0 v-7 M1572.5 879.0 v-7 M875.0 878.5 h11 M875.0 869.5 h7 M875.0 861.5 h7 M875.0 852.5 h7 M875.0 844.5 h11 M875.0 835.5 h7 M875.0 826.5 h7 M875.0 818.5 h7 M875.0 809.5 h11 M875.0 801.5 h7 M875.0 792.5 h7 M875.0 784.5 h7 M875.0 775.5 h11 M875.0 767.5 h7 M875.0 758.5 h7 M875.0 750.5 h7 M875.0 741.5 h11 M875.0 733.5 h7 M875.0 724.5 h7 M875.0 716.5 h7 M875.0 707.5 h11 M875.0 699.5 h7 M875.0 690.5 h7 M875.0 682.5 h7 M875.0 673.5 h11 M875.0 664.5 h7 M875.0 656.5 h7 M875.0 647.5 h7 M875.0 639.5 h11" stroke="#3c3c3c" stroke-width="1.5" fill="none"/>
<path d="M877.3 732.9 V772.6 M876.8 736.5 V843.9 M876.7 735.8 V793.0 M877.6 707.7 V820.9 M877.8 723.2 V822.9 M878.1 732.1 V815.7 M876.7 717.5 V844.6 M877.1 707.1 V774.7 M877.3 708.8 V827.7 M876.9 709.8 V823.8 M876.6 718.3 V808.7 M877.1 736.7 V828.7 M876.5 734.5 V837.5 M877.9 733.5 V835.7" stroke="#ff0000" stroke-width="1" fill="none"/>
<path d="M879.5 707 V772" stroke="#ff5a5a" stroke-width="1" fill="none"/>
<path d="M878.0 704.7 L878.3 706.9 L878.6 705.0 L878.8 703.2 L879.1 706.0 L879.4 702.4 L879.7 703.4 L880.0 704.9 L880.2 708.1 L880.5 705.8 L880.8 702.1 L881.1 704.1 L881.4 702.7 L881.6 702.4 L881.9 705.2 L882.2 705.2 L882.5 705.1 L882.8 704.1 L883.0 708.3 L883.3 706.9 L883.6 703.3 L883.9 702.9 L884.2 705.9 L884.4 706.3 L884.7 707.8 L885.0 701.7 L885.3 706.8 L885.6 707.0 L885.8 702.9 L886.1 705.7 L886.4 702.4 L886.7 707.6 L887.0 702.4 L887.2 701.9 L887.5 705.6 L887.8 705.0 L888.1 703.7 L888.4 703.2 L888.6 702.7 L888.9 702.9 L889.2 707.8 L889.5 704.6 L889.8 703.1 L890.0 706.9 L890.3 703.8 L890.6 702.9 L890.9 705.8 L891.2 702.9 L891.4 702.9 L891.7 703.7 L892.0 704.1 L892.3 707.1 L892.6 705.9 L892.8 702.5 L893.1 707.5 L893.4 702.9 L893.7 706.9 L894.0 704.2 L894.2 706.9 L894.5 703.6 L894.8 703.4 L895.1 703.9 L895.4 704.2 L895.6 704.9 L895.9 703.6 L896.2 702.1 L896.5 705.8 L896.8 704.9 L897.0 706.3 L897.3 701.9 L897.6 703.6 L897.9 702.9 L898.2 704.4 L898.4 704.9 L898.7 707.5 L899.0 705.9 L899.3 702.1 L899.6 703.2 L899.8 706.7 L900.1 702.7 L900.4 705.2 L900.7 704.9 L901.0 702.8 L901.2 706.8 L901.5 706.4 L901.8 707.1 L902.1 704.4 L902.4 707.5 L902.6 705.0 L902.9 706.8 L903.2 705.2 L903.5 705.4 L903.8 703.0 L904.0 708.0 L904.3 705.7 L904.6 706.1 L904.9 705.2 L905.2 703.2 L905.4 702.6 L905.7 704.2 L906.0 705.8 L906.3 706.2 L906.6 702.6 L906.8 704.1 L907.1 702.6 L907.4 707.1 L907.7 705.3 L908.0 704.2 L908.2 703.1 L908.5 707.1 L908.8 706.4 L909.1 704.8 L909.4 702.9 L909.6 707.2 L909.9 706.7 L910.2 703.0 L910.5 704.1 L910.8 703.2 L911.0 705.4 L911.3 704.5 L911.6 707.1 L911.9 701.7 L912.2 705.7 L912.4 705.9 L912.7 704.4 L913.0 701.6 L913.3 703.6 L913.6 705.9 L913.8 702.1 L914.1 705.3 L914.4 705.7 L914.7 707.2 L915.0 705.1 L915.2 704.0 L915.5 702.2 L915.8 705.2 L916.1 703.3 L916.4 705.8 L916.6 705.8 L916.9 704.8 L917.2 705.9 L917.5 707.3 L917.8 702.8 L918.0 706.2 L918.3 704.3 L918.6 707.2 L918.9 706.9 L919.2 704.9 L919.4 706.5 L919.7 705.9 L920.0 704.1 L920.3 708.1 L920.6 705.5 L920.8 704.6 L921.1 706.2 L921.4 702.5 L921.7 705.5 L922.0 703.7 L922.2 705.4 L922.5 705.6 L922.8 704.5 L923.1 702.2 L923.4 705.2 L923.6 706.8 L923.9 706.9 L924.2 706.1 L924.5 703.4 L924.8 704.1 L925.0 705.4 L925.3 706.5 L925.6 703.5 L925.9 707.2 L926.2 703.9 L926.4 707.1 L926.7 704.5 L927.0 704.9 L927.3 704.3 L927.6 707.1 L927.8 704.8 L928.1 705.0 L928.4 704.8 L928.7 704.7 L929.0 707.8 L929.2 703.5 L929.5 702.7 L929.8 707.1 L930.1 704.2 L930.4 703.4 L930.6 706.1 L930.9 705.1 L931.2 702.6 L931.5 705.2 L931.8 704.2 L932.0 703.2 L932.3 702.8 L932.6 702.8 L932.9 704.7 L933.2 703.9 L933.4 704.1 L933.7 703.4 L934.0 705.4 L934.3 706.6 L934.6 705.9 L934.8 706.5 L935.1 706.3 L935.4 704.6 L935.7 704.2 L936.0 705.9 L936.2 703.8 L936.5 702.6 L936.8 706.1 L937.1 705.3 L937.4 704.5 L937.6 701.6 L937.9 706.4 L938.2 706.2 L938.5 705.2 L938.8 705.0 L939.0 702.2 L939.3 701.7 L939.6 704.9 L939.9 704.3 L940.2 702.5 L940.4 707.3 L940.7 706.0 L941.0 703.3 L941.3 705.0 L941.6 703.7 L941.8 704.6 L942.1 704.2 L942.4 706.3 L942.7 702.9 L943.0 705.6 L943.2 702.4 L943.5 703.7 L943.8 707.2 L944.1 706.4 L944.4 705.1 L944.6 705.1 L944.9 707.6 L945.2 704.2 L945.5 706.4 L945.8 706.0 L946.0 707.4 L946.3 706.1 L946.6 705.7 L946.9 704.9 L947.2 703.8 L947.4 701.9 L947.7 705.5 L948.0 704.2 L948.3 705.1 L948.6 705.5 L948.8 704.5 L949.1 707.4 L949.4 706.1 L949.7 706.0 L950.0 705.7 L950.2 703.2 L950.5 701.7 L950.8 703.2 L951.1 704.2 L951.4 704.9 L951.6 707.1 L951.9 707.3 L952.2 705.3 L952.5 705.6 L952.8 703.2 L953.0 702.8 L953.3 702.9 L953.6 704.2 L953.9 706.6 L954.2 704.9 L954.4 703.5 L954.7 705.5 L955.0 703.9 L955.3 702.6 L955.6 702.4 L955.8 703.3 L956.1 704.8 L956.4 704.9 L956.7 707.9 L957.0 703.2 L957.2 704.1 L957.5 706.4 L957.8 705.5 L958.1 705.6 L958.4 707.6 L958.6 704.3 L958.9 705.1 L959.2 702.1 L959.5 703.9 L959.8 704.6 L960.0 703.8 L960.3 704.8 L960.6 706.0 L960.9 707.9 L961.2 705.1 L961.4 703.3 L961.7 706.2 L962.0 703.3 L962.3 705.5 L962.6 705.2 L962.8 705.1 L963.1 704.2 L963.4 707.3 L963.7 701.3 L964.0 703.2 L964.2 704.3 L964.5 703.8 L964.8 702.7 L965.1 705.0 L965.4 703.8 L965.6 702.7 L965.9 706.3 L966.2 701.5 L966.5 706.2 L966.8 705.2 L967.0 703.6 L967.3 705.7 L967.6 706.2 L967.9 703.6 L968.2 706.5 L968.4 703.8 L968.7 703.1 L969.0 701.4 L969.3 704.7 L969.6 704.9 L969.8 704.9 L970.1 703.3 L970.4 701.9 L970.7 705.9 L971.0 702.6 L971.2 704.1 L971.5 702.9 L971.8 705.5 L972.1 707.3 L972.4 706.3 L972.6 705.5 L972.9 703.2 L973.2 707.3 L973.5 702.8 L973.8 703.4 L974.0 703.6 L974.3 702.9 L974.6 705.9 L974.9 706.1 L975.2 703.2 L975.4 705.8 L975.7 701.9 L976.0 704.6 L976.3 706.9 L976.6 704.9 L976.8 705.1 L977.1 701.4 L977.4 706.2 L977.7 702.5 L978.0 703.0 L978.2 704.5 L978.5 703.4 L978.8 704.9 L979.1 703.4 L979.4 706.9 L979.6 704.3 L979.9 705.7 L980.2 706.1 L980.5 706.2 L980.8 706.6 L981.0 706.7 L981.3 706.8 L981.6 704.7 L981.9 705.6 L982.2 703.1 L982.4 706.4 L982.7 702.9 L983.0 702.6 L983.3 704.1 L983.6 701.6 L983.8 702.5 L984.1 704.9 L984.4 701.9 L984.7 705.4 L985.0 701.1 L985.2 702.0 L985.5 703.3 L985.8 704.1 L986.1 702.1 L986.4 703.0 L986.6 703.3 L986.9 705.7 L987.2 703.7 L987.5 705.9 L987.8 705.3 L988.0 703.5 L988.3 702.8 L988.6 705.4 L988.9 704.3 L989.2 704.0 L989.4 704.4 L989.7 701.6 L990.0 704.0 L990.3 705.4 L990.6 701.7 L990.8 702.7 L991.1 706.0 L991.4 705.7 L991.7 703.0 L992.0 702.9 L992.2 702.2 L992.5 706.4 L992.8 701.5 L993.1 704.3 L993.4 703.9 L993.6 706.5 L993.9 705.4 L994.2 705.3 L994.5 705.3 L994.8 705.1 L995.0 704.3 L995.3 703.0 L995.6 702.7 L995.9 701.5 L996.2 704.3 L996.4 703.7 L996.7 701.8 L997.0 704.8 L997.3 706.0 L997.6 701.3 L997.8 704.5 L998.1 704.2 L998.4 702.5 L998.7 704.9 L999.0 704.2 L999.2 703.5 L999.5 702.7 L999.8 703.8 L1000.1 702.2 L1000.4 704.8 L1000.6 706.3 L1000.9 704.8 L1001.2 704.8 L1001.5 701.4 L1001.8 705.3 L1002.0 702.2 L1002.3 705.8 L1002.6 701.4 L1002.9 701.5 L1003.2 702.6 L1003.4 705.9 L1003.7 704.3 L1004.0 705.9 L1004.3 703.0 L1004.6 702.5 L1004.8 703.8 L1005.1 706.9 L1005.4 704.9 L1005.7 701.1 L1006.0 703.4 L1006.2 701.6 L1006.5 704.5 L1006.8 705.7 L1007.1 702.6 L1007.4 705.9 L1007.6 703.1 L1007.9 702.4 L1008.2 706.2 L1008.5 705.5 L1008.8 703.1 L1009.0 703.8 L1009.3 701.1 L1009.6 704.5 L1009.9 703.7 L1010.2 702.9 L1010.4 702.8 L1010.7 702.7 L1011.0 704.0 L1011.3 703.5 L1011.6 706.7 L1011.8 705.4 L1012.1 702.4 L1012.4 703.3 L1012.7 702.5 L1013.0 704.6 L1013.2 703.0 L1013.5 700.6 L1013.8 706.9 L1014.1 704.0 L1014.4 704.9 L1014.6 703.1 L1014.9 704.1 L1015.2 701.9 L1015.5 701.5 L1015.8 703.2 L1016.0 703.1 L1016.3 703.5 L1016.6 703.3 L1016.9 703.6 L1017.2 706.0 L1017.4 703.1 L1017.7 704.4 L1018.0 705.2 L1018.3 704.4 L1018.6 705.8 L1018.8 702.8 L1019.1 704.6 L1019.4 703.6 L1019.7 703.9 L1020.0 701.6 L1020.2 705.3 L1020.5 704.7 L1020.8 704.2 L1021.1 703.0 L1021.4 701.4 L1021.6 703.1 L1021.9 701.5 L1022.2 702.9 L1022.5 702.1 L1022.8 701.1 L1023.0 706.2 L1023.3 704.8 L1023.6 703.4 L1023.9 702.3 L1024.2 704.3 L1024.4 701.7 L1024.7 701.3 L1025.0 704.4 L1025.3 701.4 L1025.6 701.3 L1025.8 705.7 L1026.1 702.2 L1026.4 702.5 L1026.7 701.4 L1027.0 702.0 L1027.2 706.1 L1027.5 702.2 L1027.8 702.7 L1028.1 704.3 L1028.4 704.3 L1028.6 702.0 L1028.9 705.7 L1029.2 701.6 L1029.5 702.0 L1029.8 699.7 L1030.0 703.5 L1030.3 705.5 L1030.6 703.0 L1030.9 704.5 L1031.2 701.6 L1031.4 700.9 L1031.7 703.1 L1032.0 700.5 L1032.3 704.0 L1032.6 702.3 L1032.8 704.7 L1033.1 700.8 L1033.4 704.9 L1033.7 701.4 L1034.0 701.0 L1034.2 701.7 L1034.5 700.9 L1034.8 701.5 L1035.1 700.6 L1035.4 698.5 L1035.6 701.6 L1035.9 699.6 L1036.2 699.6 L1036.5 701.7 L1036.8 700.4 L1037.0 700.2 L1037.3 698.3 L1037.6 698.3 L1037.9 695.8 L1038.2 696.0 L1038.4 693.5 L1038.7 691.9 L1039.0 690.6 L1039.3 687.8 L1039.6 685.2 L1039.8 683.7 L1040.1 683.8 L1040.4 679.0 L1040.7 677.8 L1041.0 677.2 L1041.2 678.4 L1041.5 677.9 L1041.8 673.6 L1042.1 672.5 L1042.4 673.4 L1042.6 672.1 L1042.9 670.2 L1043.2 670.7 L1043.5 670.1 L1043.8 665.8 L1044.0 664.2 L1044.3 666.5 L1044.6 663.9 L1044.9 662.8 L1045.2 661.4 L1045.4 662.3 L1045.7 666.2 L1046.0 661.9 L1046.3 663.3 L1046.6 666.4 L1046.8 665.8 L1047.1 667.5 L1047.4 666.5 L1047.7 663.8 L1048.0 668.2 L1048.2 666.4 L1048.5 666.4 L1048.8 666.5 L1049.1 669.9 L1049.4 666.8 L1049.6 669.1 L1049.9 670.9 L1050.2 670.1 L1050.5 674.7 L1050.8 670.6 L1051.0 674.0 L1051.3 674.8 L1051.6 678.2 L1051.9 679.0 L1052.2 678.2 L1052.4 678.8 L1052.7 677.8 L1053.0 678.5 L1053.3 678.0 L1053.6 679.2 L1053.8 680.1 L1054.1 684.5 L1054.4 683.5 L1054.7 681.4 L1055.0 684.2 L1055.2 682.0 L1055.5 682.7 L1055.8 685.8 L1056.1 686.7 L1056.4 685.4 L1056.6 689.2 L1056.9 689.7 L1057.2 689.5 L1057.5 687.7 L1057.8 687.9 L1058.0 689.1 L1058.3 688.5 L1058.6 687.9 L1058.9 685.7 L1059.2 687.8 L1059.4 686.8 L1059.7 687.0 L1060.0 687.6 L1060.3 688.1 L1060.6 683.8 L1060.8 685.0 L1061.1 684.6 L1061.4 686.1 L1061.7 683.1 L1062.0 681.7 L1062.2 681.6 L1062.5 684.3 L1062.8 685.1 L1063.1 684.6 L1063.4 681.6 L1063.6 683.9 L1063.9 683.0 L1064.2 681.0 L1064.5 680.0 L1064.8 677.6 L1065.0 678.5 L1065.3 677.0 L1065.6 677.7 L1065.9 676.3 L1066.2 675.0 L1066.4 675.7 L1066.7 674.7 L1067.0 677.1 L1067.3 675.9 L1067.6 674.9 L1067.8 673.2 L1068.1 673.1 L1068.4 675.5 L1068.7 673.5 L1069.0 671.9 L1069.2 676.5 L1069.5 673.3 L1069.8 672.3 L1070.1 675.1 L1070.4 672.9 L1070.6 676.0 L1070.9 674.0 L1071.2 672.4 L1071.5 672.8 L1071.8 675.3 L1072.0 675.1 L1072.3 672.7 L1072.6 673.8 L1072.9 677.2 L1073.2 674.0 L1073.4 677.0 L1073.7 674.8 L1074.0 676.8 L1074.3 678.7 L1074.6 679.4 L1074.8 680.4 L1075.1 681.9 L1075.4 680.3 L1075.7 680.2 L1076.0 682.3 L1076.2 684.4 L1076.5 680.6 L1076.8 682.8 L1077.1 682.4 L1077.4 685.7 L1077.6 683.5 L1077.9 684.8 L1078.2 686.7 L1078.5 685.4 L1078.8 688.0 L1079.0 688.6 L1079.3 693.1 L1079.6 691.9 L1079.9 694.9 L1080.2 693.7 L1080.4 697.2 L1080.7 697.4 L1081.0 698.4 L1081.3 698.2 L1081.6 701.5 L1081.8 699.9 L1082.1 701.4 L1082.4 702.8 L1082.7 698.8 L1083.0 701.8 L1083.2 699.5 L1083.5 703.9 L1083.8 704.9 L1084.1 704.7 L1084.4 705.1 L1084.6 708.5 L1084.9 704.3 L1085.2 704.1 L1085.5 707.1 L1085.8 710.2 L1086.0 707.4 L1086.3 710.2 L1086.6 709.7 L1086.9 713.6 L1087.2 710.8 L1087.4 713.9 L1087.7 715.6 L1088.0 715.0 L1088.3 715.3 L1088.6 712.5 L1088.8 717.0 L1089.1 714.7 L1089.4 713.7 L1089.7 715.2 L1090.0 715.8 L1090.2 714.3 L1090.5 714.6 L1090.8 712.7 L1091.1 717.5 L1091.4 713.2 L1091.6 716.9 L1091.9 715.3 L1092.2 715.9 L1092.5 717.6 L1092.8 714.2 L1093.0 717.4 L1093.3 716.2 L1093.6 719.3 L1093.9 716.9 L1094.2 717.0 L1094.4 713.4 L1094.7 713.7 L1095.0 716.2 L1095.3 715.4 L1095.6 713.3 L1095.8 717.6 L1096.1 717.0 L1096.4 718.1 L1096.7 716.2 L1097.0 718.3 L1097.2 717.7 L1097.5 718.0 L1097.8 716.5 L1098.1 717.0 L1098.4 715.7 L1098.6 715.0 L1098.9 717.1 L1099.2 715.3 L1099.5 714.5 L1099.8 717.3 L1100.0 713.2 L1100.3 716.2 L1100.6 716.8 L1100.9 715.8 L1101.2 713.1 L1101.4 715.1 L1101.7 713.9 L1102.0 715.8 L1102.3 718.2 L1102.6 716.7 L1102.8 717.5 L1103.1 717.3 L1103.4 719.3 L1103.7 717.6 L1104.0 720.0 L1104.2 719.3 L1104.5 722.3 L1104.8 718.9 L1105.1 722.9 L1105.4 721.9 L1105.6 721.9 L1105.9 723.3 L1106.2 724.2 L1106.5 722.5 L1106.8 721.3 L1107.0 723.6 L1107.3 723.7 L1107.6 722.2 L1107.9 724.3 L1108.2 723.1 L1108.4 724.8 L1108.7 725.3 L1109.0 726.5 L1109.3 726.2 L1109.6 726.6 L1109.8 728.3 L1110.1 726.8 L1110.4 726.0 L1110.7 726.7 L1111.0 729.6 L1111.2 730.8 L1111.5 729.8 L1111.8 730.2 L1112.1 731.1 L1112.4 728.5 L1112.6 729.2 L1112.9 730.8 L1113.2 728.9 L1113.5 727.6 L1113.8 730.8 L1114.0 728.4 L1114.3 731.1 L1114.6 729.5 L1114.9 728.8 L1115.2 726.1 L1115.4 724.5 L1115.7 729.1 L1116.0 723.6 L1116.3 725.8 L1116.6 726.6 L1116.8 723.6 L1117.1 723.1 L1117.4 726.2 L1117.7 722.3 L1118.0 721.7 L1118.2 721.5 L1118.5 722.6 L1118.8 723.1 L1119.1 719.6 L1119.4 722.4 L1119.6 718.5 L1119.9 723.0 L1120.2 718.7 L1120.5 722.3 L1120.8 719.6 L1121.0 716.9 L1121.3 715.8 L1121.6 716.8 L1121.9 715.3 L1122.2 716.0 L1122.4 714.0 L1122.7 712.4 L1123.0 712.5 L1123.3 711.8 L1123.6 712.3 L1123.8 712.8 L1124.1 711.8 L1124.4 708.7 L1124.7 708.6 L1125.0 709.7 L1125.2 708.1 L1125.5 708.7 L1125.8 706.8 L1126.1 709.0 L1126.4 706.3 L1126.6 708.7 L1126.9 706.4 L1127.2 704.0 L1127.5 702.3 L1127.8 703.8 L1128.0 703.8 L1128.3 705.5 L1128.6 699.8 L1128.9 700.9 L1129.2 700.2 L1129.4 701.2 L1129.7 702.9 L1130.0 701.3 L1130.3 700.5 L1130.6 700.1 L1130.8 695.5 L1131.1 697.3 L1131.4 696.9 L1131.7 695.5 L1132.0 695.1 L1132.2 697.3 L1132.5 695.3 L1132.8 697.6 L1133.1 695.7 L1133.4 697.8 L1133.6 693.8 L1133.9 693.9 L1134.2 698.3 L1134.5 692.4 L1134.8 695.1 L1135.0 693.2 L1135.3 693.3 L1135.6 692.3 L1135.9 691.2 L1136.2 693.3 L1136.4 694.3 L1136.7 691.9 L1137.0 691.5 L1137.3 693.0 L1137.6 693.7 L1137.8 693.6 L1138.1 694.9 L1138.4 692.2 L1138.7 695.1 L1139.0 690.9 L1139.2 691.2 L1139.5 693.8 L1139.8 690.5 L1140.1 689.0 L1140.4 692.0 L1140.6 693.4 L1140.9 689.4 L1141.2 689.2 L1141.5 690.6 L1141.8 690.7 L1142.0 693.1 L1142.3 693.8 L1142.6 692.2 L1142.9 690.4 L1143.2 691.9 L1143.4 690.3 L1143.7 690.6 L1144.0 690.5 L1144.3 689.3 L1144.6 688.7 L1144.8 690.8 L1145.1 688.5 L1145.4 689.6 L1145.7 690.0 L1146.0 691.8 L1146.2 687.9 L1146.5 691.6 L1146.8 691.2 L1147.1 688.8 L1147.4 687.7 L1147.6 688.9 L1147.9 686.6 L1148.2 687.4 L1148.5 683.0 L1148.8 683.6 L1149.0 685.9 L1149.3 685.4 L1149.6 682.3 L1149.9 681.2 L1150.2 682.9 L1150.4 680.6 L1150.7 681.9 L1151.0 677.9 L1151.3 677.1 L1151.6 679.7 L1151.8 677.9 L1152.1 680.5 L1152.4 676.7 L1152.7 677.6 L1153.0 677.7 L1153.2 676.2 L1153.5 675.4 L1153.8 674.1 L1154.1 671.7 L1154.4 668.8 L1154.6 670.3 L1154.9 667.7 L1155.2 668.8 L1155.5 664.2 L1155.8 666.0 L1156.0 666.3 L1156.3 662.8 L1156.6 664.6 L1156.9 662.1 L1157.2 661.8 L1157.4 662.0 L1157.7 664.0 L1158.0 662.2 L1158.3 661.4 L1158.6 659.5 L1158.8 659.0 L1159.1 658.2 L1159.4 657.5 L1159.7 659.5 L1160.0 658.1 L1160.2 659.5 L1160.5 658.0 L1160.8 659.3 L1161.1 657.3 L1161.4 655.9 L1161.6 656.6 L1161.9 655.6 L1162.2 657.5 L1162.5 658.2 L1162.8 660.2 L1163.0 661.7 L1163.3 659.9 L1163.6 661.8 L1163.9 661.9 L1164.2 661.0 L1164.4 664.2 L1164.7 662.9 L1165.0 668.0 L1165.3 666.5 L1165.6 667.2 L1165.8 665.4 L1166.1 667.1 L1166.4 669.5 L1166.7 671.8 L1167.0 670.7 L1167.2 673.9 L1167.5 672.2 L1167.8 674.5 L1168.1 673.1 L1168.4 676.5 L1168.6 676.7 L1168.9 677.8 L1169.2 679.6 L1169.5 681.4 L1169.8 685.0 L1170.0 687.5 L1170.3 686.7 L1170.6 688.2 L1170.9 689.4 L1171.2 689.1 L1171.4 687.4 L1171.7 689.3 L1172.0 688.7 L1172.3 690.7 L1172.6 694.0 L1172.8 692.7 L1173.1 693.2 L1173.4 693.5 L1173.7 695.5 L1174.0 697.8 L1174.2 697.1 L1174.5 700.6 L1174.8 700.5 L1175.1 700.3 L1175.4 699.0 L1175.6 704.8 L1175.9 705.0 L1176.2 702.6 L1176.5 703.3 L1176.8 703.9 L1177.0 703.5 L1177.3 705.1 L1177.6 703.5 L1177.9 704.6 L1178.2 707.2 L1178.4 702.6 L1178.7 704.6 L1179.0 708.4 L1179.3 708.5 L1179.6 708.2 L1179.8 703.4 L1180.1 706.8 L1180.4 706.9 L1180.7 707.7 L1181.0 707.5 L1181.2 703.6 L1181.5 709.6 L1181.8 703.7 L1182.1 709.2 L1182.4 707.5 L1182.6 709.3 L1182.9 704.1 L1183.2 710.0 L1183.5 709.1 L1183.8 706.5 L1184.0 705.8 L1184.3 706.8 L1184.6 707.7 L1184.9 708.7 L1185.2 707.5 L1185.4 705.8 L1185.7 706.9 L1186.0 709.4 L1186.3 707.4 L1186.6 707.4 L1186.8 708.1 L1187.1 706.6 L1187.4 707.5 L1187.7 710.4 L1188.0 710.5 L1188.2 707.5 L1188.5 707.3 L1188.8 709.8 L1189.1 708.4 L1189.4 712.4 L1189.6 708.1 L1189.9 711.5 L1190.2 709.3 L1190.5 708.8 L1190.8 711.0 L1191.0 710.9 L1191.3 708.3 L1191.6 709.6 L1191.9 712.9 L1192.2 711.2 L1192.4 715.5 L1192.7 712.9 L1193.0 711.9 L1193.3 715.4 L1193.6 712.8 L1193.8 717.1 L1194.1 717.4 L1194.4 714.3 L1194.7 715.9 L1195.0 713.8 L1195.2 715.4 L1195.5 715.8 L1195.8 716.0 L1196.1 718.5 L1196.4 719.8 L1196.6 720.1 L1196.9 716.7 L1197.2 718.7 L1197.5 721.4 L1197.8 717.5 L1198.0 719.7 L1198.3 722.4 L1198.6 720.3 L1198.9 722.3 L1199.2 720.3 L1199.4 722.7 L1199.7 722.7 L1200.0 719.1 L1200.3 721.2 L1200.6 720.3 L1200.8 722.3 L1201.1 723.8 L1201.4 723.0 L1201.7 721.4 L1202.0 721.8 L1202.2 725.3 L1202.5 725.4 L1202.8 724.5 L1203.1 728.1 L1203.4 726.0 L1203.6 726.1 L1203.9 728.5 L1204.2 730.1 L1204.5 728.7 L1204.8 728.7 L1205.0 726.1 L1205.3 728.6 L1205.6 727.6 L1205.9 729.4 L1206.2 725.7 L1206.4 726.4 L1206.7 727.5 L1207.0 726.2 L1207.3 723.5 L1207.6 724.7 L1207.8 726.0 L1208.1 723.0 L1208.4 725.0 L1208.7 726.5 L1209.0 723.3 L1209.2 725.1 L1209.5 726.1 L1209.8 723.0 L1210.1 722.9 L1210.4 723.8 L1210.6 722.0 L1210.9 721.2 L1211.2 720.7 L1211.5 718.3 L1211.8 722.1 L1212.0 722.4 L1212.3 720.1 L1212.6 719.7 L1212.9 718.2 L1213.2 717.9 L1213.4 715.7 L1213.7 713.2 L1214.0 714.8 L1214.3 715.8 L1214.6 716.4 L1214.8 711.6 L1215.1 712.1 L1215.4 714.1 L1215.7 711.1 L1216.0 714.3 L1216.2 711.7 L1216.5 711.8 L1216.8 713.6 L1217.1 713.0 L1217.4 711.7 L1217.6 710.7 L1217.9 708.7 L1218.2 706.0 L1218.5 709.5 L1218.8 709.4 L1219.0 708.6 L1219.3 705.7 L1219.6 705.2 L1219.9 707.8 L1220.2 705.4 L1220.4 706.5 L1220.7 706.8 L1221.0 706.6 L1221.3 701.9 L1221.6 702.8 L1221.8 700.6 L1222.1 701.8 L1222.4 702.0 L1222.7 699.4 L1223.0 698.7 L1223.2 697.0 L1223.5 699.0 L1223.8 701.9 L1224.1 698.5 L1224.4 697.7 L1224.6 700.7 L1224.9 699.3 L1225.2 700.8 L1225.5 701.1 L1225.8 701.2 L1226.0 701.0 L1226.3 699.5 L1226.6 700.6 L1226.9 698.6 L1227.2 699.8 L1227.4 701.4 L1227.7 702.5 L1228.0 701.9 L1228.3 700.1 L1228.6 702.1 L1228.8 702.6 L1229.1 699.1 L1229.4 702.7 L1229.7 700.0 L1230.0 703.0 L1230.2 702.1 L1230.5 703.5 L1230.8 700.6 L1231.1 699.7 L1231.4 701.3 L1231.6 699.9 L1231.9 701.2 L1232.2 705.0 L1232.5 702.0 L1232.8 701.8 L1233.0 699.3 L1233.3 700.8 L1233.6 701.2 L1233.9 701.4 L1234.2 700.3 L1234.4 701.7 L1234.7 699.8 L1235.0 699.8 L1235.3 700.7 L1235.6 699.7 L1235.8 699.7 L1236.1 701.6 L1236.4 699.8 L1236.7 702.4 L1237.0 699.2 L1237.2 700.0 L1237.5 701.2 L1237.8 700.2 L1238.1 698.9 L1238.4 697.9 L1238.6 699.6 L1238.9 697.7 L1239.2 695.1 L1239.5 698.1 L1239.8 696.8 L1240.0 696.8 L1240.3 695.1 L1240.6 693.3 L1240.9 697.1 L1241.2 694.0 L1241.4 695.5 L1241.7 694.9 L1242.0 692.2 L1242.3 693.1 L1242.6 694.1 L1242.8 693.2 L1243.1 694.0 L1243.4 690.9 L1243.7 692.0 L1244.0 690.3 L1244.2 693.9 L1244.5 691.1 L1244.8 690.3 L1245.1 691.7 L1245.4 692.3 L1245.6 692.3 L1245.9 690.7 L1246.2 688.2 L1246.5 692.0 L1246.8 691.9 L1247.0 688.9 L1247.3 689.5 L1247.6 689.8 L1247.9 687.8 L1248.2 692.6 L1248.4 687.9 L1248.7 686.9 L1249.0 691.5 L1249.3 688.3 L1249.6 689.6 L1249.8 692.1 L1250.1 688.9 L1250.4 690.9 L1250.7 691.8 L1251.0 690.2 L1251.2 691.4 L1251.5 691.9 L1251.8 693.5 L1252.1 690.8 L1252.4 691.5 L1252.6 691.8 L1252.9 693.3 L1253.2 695.8 L1253.5 691.8 L1253.8 694.5 L1254.0 697.0 L1254.3 693.0 L1254.6 694.0 L1254.9 693.3 L1255.2 693.9 L1255.4 696.0 L1255.7 692.9 L1256.0 696.2 L1256.3 697.4 L1256.6 693.4 L1256.8 694.7 L1257.1 694.9 L1257.4 698.5 L1257.7 696.7 L1258.0 697.0 L1258.2 697.3 L1258.5 697.1 L1258.8 697.0 L1259.1 698.8 L1259.4 698.0 L1259.6 702.1 L1259.9 700.5 L1260.2 703.6 L1260.5 702.5 L1260.8 703.0 L1261.0 701.7 L1261.3 702.7 L1261.6 703.3 L1261.9 705.6 L1262.2 701.3 L1262.4 701.9 L1262.7 705.8 L1263.0 702.6 L1263.3 707.0 L1263.6 706.1 L1263.8 706.3 L1264.1 705.1 L1264.4 708.8 L1264.7 709.1 L1265.0 704.2 L1265.2 709.8 L1265.5 707.5 L1265.8 710.2 L1266.1 710.4 L1266.4 710.8 L1266.6 707.9 L1266.9 710.2 L1267.2 712.0 L1267.5 711.4 L1267.8 712.3 L1268.0 710.3 L1268.3 714.7 L1268.6 711.1 L1268.9 712.8 L1269.2 713.7 L1269.4 710.3 L1269.7 713.6 L1270.0 712.0 L1270.3 713.9 L1270.6 713.6 L1270.8 714.5 L1271.1 716.6 L1271.4 715.3 L1271.7 713.4 L1272.0 713.1 L1272.2 712.8 L1272.5 716.9 L1272.8 715.0 L1273.1 717.7 L1273.4 717.9 L1273.6 718.6 L1273.9 717.7 L1274.2 719.0 L1274.5 718.6 L1274.8 719.4 L1275.0 717.0 L1275.3 721.4 L1275.6 716.3 L1275.9 717.6 L1276.2 721.6 L1276.4 722.3 L1276.7 719.8 L1277.0 720.3 L1277.3 716.8 L1277.6 718.2 L1277.8 715.2 L1278.1 720.3 L1278.4 716.2 L1278.7 718.7 L1279.0 715.5 L1279.2 717.3 L1279.5 716.2 L1279.8 715.0 L1280.1 714.3 L1280.4 712.4 L1280.6 715.6 L1280.9 715.9 L1281.2 716.3 L1281.5 712.7 L1281.8 711.7 L1282.0 710.7 L1282.3 715.5 L1282.6 710.8 L1282.9 715.6 L1283.2 714.7 L1283.4 711.0 L1283.7 710.9 L1284.0 711.8 L1284.3 710.5 L1284.6 712.6 L1284.8 710.8 L1285.1 712.1 L1285.4 711.0 L1285.7 711.8 L1286.0 709.8 L1286.2 713.6 L1286.5 710.8 L1286.8 712.6 L1287.1 710.8 L1287.4 710.6 L1287.6 711.8 L1287.9 709.1 L1288.2 712.3 L1288.5 712.4 L1288.8 708.8 L1289.0 712.9 L1289.3 709.7 L1289.6 712.7 L1289.9 710.4 L1290.2 714.0 L1290.4 712.2 L1290.7 714.3 L1291.0 712.9 L1291.3 709.3 L1291.6 711.0 L1291.8 712.0 L1292.1 711.8 L1292.4 711.0 L1292.7 710.1 L1293.0 714.6 L1293.2 710.4 L1293.5 712.3 L1293.8 713.1 L1294.1 712.0 L1294.4 708.6 L1294.6 709.3 L1294.9 712.1 L1295.2 712.2 L1295.5 713.0 L1295.8 712.9 L1296.0 715.4 L1296.3 712.1 L1296.6 712.1 L1296.9 714.2 L1297.2 713.5 L1297.4 715.7 L1297.7 712.2 L1298.0 711.0 L1298.3 712.7 L1298.6 715.2 L1298.8 715.8 L1299.1 711.1 L1299.4 711.8 L1299.7 716.2 L1300.0 715.2 L1300.2 712.8 L1300.5 713.8 L1300.8 711.5 L1301.1 711.1 L1301.4 712.8 L1301.6 714.3 L1301.9 711.4 L1302.2 713.9 L1302.5 714.4 L1302.8 713.2 L1303.0 713.6 L1303.3 710.9 L1303.6 711.7 L1303.9 708.3 L1304.2 709.5 L1304.4 710.2 L1304.7 706.9 L1305.0 710.4 L1305.3 712.3 L1305.6 707.8 L1305.8 709.3 L1306.1 708.7 L1306.4 707.8 L1306.7 707.5 L1307.0 709.2 L1307.2 706.1 L1307.5 707.4 L1307.8 705.2 L1308.1 708.0 L1308.4 706.1 L1308.6 706.8 L1308.9 704.1 L1309.2 708.2 L1309.5 703.5 L1309.8 708.3 L1310.0 703.7 L1310.3 703.8 L1310.6 704.7 L1310.9 706.6 L1311.2 703.2 L1311.4 701.3 L1311.7 704.5 L1312.0 706.1 L1312.3 700.9 L1312.6 703.4 L1312.8 702.5 L1313.1 701.1 L1313.4 700.7 L1313.7 704.2 L1314.0 701.0 L1314.2 703.7 L1314.5 698.6 L1314.8 698.9 L1315.1 703.3 L1315.4 699.0 L1315.6 698.3 L1315.9 701.4 L1316.2 698.5 L1316.5 700.8 L1316.8 698.3 L1317.0 696.5 L1317.3 700.9 L1317.6 699.7 L1317.9 698.0 L1318.2 702.0 L1318.4 698.0 L1318.7 700.2 L1319.0 701.1 L1319.3 702.4 L1319.6 699.5 L1319.8 698.9 L1320.1 699.4 L1320.4 698.8 L1320.7 702.2 L1321.0 701.4 L1321.2 699.6 L1321.5 698.3 L1321.8 698.6 L1322.1 701.7 L1322.4 698.7 L1322.6 698.6 L1322.9 701.3 L1323.2 699.5 L1323.5 699.7 L1323.8 699.6 L1324.0 698.6 L1324.3 699.7 L1324.6 700.9 L1324.9 702.0 L1325.2 699.3 L1325.4 698.1 L1325.7 702.6 L1326.0 698.5 L1326.3 701.2 L1326.6 698.7 L1326.8 701.4 L1327.1 701.3 L1327.4 703.0 L1327.7 699.6 L1328.0 698.8 L1328.2 697.8 L1328.5 699.3 L1328.8 702.8 L1329.1 702.9 L1329.4 701.4 L1329.6 700.0 L1329.9 699.6 L1330.2 699.2 L1330.5 699.5 L1330.8 699.8 L1331.0 700.6 L1331.3 695.6 L1331.6 695.1 L1331.9 699.8 L1332.2 697.3 L1332.4 697.3 L1332.7 698.3 L1333.0 699.4 L1333.3 694.5 L1333.6 695.4 L1333.8 693.9 L1334.1 697.9 L1334.4 696.9 L1334.7 695.6 L1335.0 695.3 L1335.2 696.0 L1335.5 693.5 L1335.8 696.1 L1336.1 694.2 L1336.4 697.0 L1336.6 694.4 L1336.9 697.1 L1337.2 697.2 L1337.5 696.7 L1337.8 692.4 L1338.0 694.3 L1338.3 696.7 L1338.6 692.4 L1338.9 693.5 L1339.2 696.0 L1339.4 693.8 L1339.7 693.6 L1340.0 694.0 L1340.3 694.5 L1340.6 693.2 L1340.8 691.0 L1341.1 691.7 L1341.4 691.0 L1341.7 696.0 L1342.0 690.3 L1342.2 691.8 L1342.5 691.1 L1342.8 694.1 L1343.1 690.2 L1343.4 690.6 L1343.6 691.5 L1343.9 693.1 L1344.2 690.7 L1344.5 694.7 L1344.8 692.0 L1345.0 692.6 L1345.3 694.7 L1345.6 696.4 L1345.9 695.8 L1346.2 696.3 L1346.4 696.9 L1346.7 696.2 L1347.0 694.7 L1347.3 698.3 L1347.6 695.9 L1347.8 698.8 L1348.1 694.6 L1348.4 696.4 L1348.7 700.3 L1349.0 698.9 L1349.2 697.6 L1349.5 697.3 L1349.8 695.8 L1350.1 698.7 L1350.4 698.9 L1350.6 697.5 L1350.9 700.3 L1351.2 699.7 L1351.5 698.3 L1351.8 699.3 L1352.0 698.2 L1352.3 700.4 L1352.6 703.4 L1352.9 702.0 L1353.2 699.5 L1353.4 704.6 L1353.7 703.1 L1354.0 705.2 L1354.3 706.4 L1354.6 707.1 L1354.8 705.9 L1355.1 705.8 L1355.4 706.6 L1355.7 707.1 L1356.0 708.0 L1356.2 708.1 L1356.5 704.8 L1356.8 707.6 L1357.1 706.0 L1357.4 706.4 L1357.6 708.1 L1357.9 707.5 L1358.2 704.8 L1358.5 709.8 L1358.8 708.8 L1359.0 706.3 L1359.3 708.3 L1359.6 710.3 L1359.9 705.8 L1360.2 706.7 L1360.4 711.1 L1360.7 706.4 L1361.0 707.7 L1361.3 706.3 L1361.6 708.2 L1361.8 708.7 L1362.1 712.0 L1362.4 711.7 L1362.7 707.2 L1363.0 709.3 L1363.2 709.5 L1363.5 711.4 L1363.8 706.2 L1364.1 708.5 L1364.4 710.4 L1364.6 707.9 L1364.9 712.0 L1365.2 707.9 L1365.5 713.2 L1365.8 711.1 L1366.0 711.9 L1366.3 709.8 L1366.6 710.7 L1366.9 709.7 L1367.2 709.5 L1367.4 708.4 L1367.7 713.7 L1368.0 713.3 L1368.3 712.9 L1368.6 710.0 L1368.8 712.3 L1369.1 711.3 L1369.4 708.8 L1369.7 711.3 L1370.0 712.9 L1370.2 711.8 L1370.5 711.3 L1370.8 710.4 L1371.1 713.0 L1371.4 712.0 L1371.6 709.0 L1371.9 711.6 L1372.2 707.7 L1372.5 709.6 L1372.8 708.7 L1373.0 710.7 L1373.3 713.1 L1373.6 709.0 L1373.9 711.7 L1374.2 711.0 L1374.4 709.1 L1374.7 710.7 L1375.0 712.5 L1375.3 711.8 L1375.6 713.3 L1375.8 713.4 L1376.1 709.7 L1376.4 711.7 L1376.7 712.9 L1377.0 709.2 L1377.2 712.8 L1377.5 713.5 L1377.8 713.2 L1378.1 713.3 L1378.4 712.7 L1378.6 708.1 L1378.9 711.2 L1379.2 710.0 L1379.5 711.1 L1379.8 709.8 L1380.0 709.3 L1380.3 711.2 L1380.6 711.1 L1380.9 709.5 L1381.2 708.4 L1381.4 710.3 L1381.7 709.2 L1382.0 709.6 L1382.3 708.9 L1382.6 708.0 L1382.8 711.0 L1383.1 709.6 L1383.4 710.4 L1383.7 704.7 L1384.0 709.1 L1384.2 709.7 L1384.5 704.7 L1384.8 706.7 L1385.1 704.6 L1385.4 704.6 L1385.6 706.8 L1385.9 702.4 L1386.2 702.1 L1386.5 702.7 L1386.8 702.6 L1387.0 705.8 L1387.3 705.3 L1387.6 701.7 L1387.9 700.2 L1388.2 699.0 L1388.4 703.2 L1388.7 702.7 L1389.0 699.4 L1389.3 699.7 L1389.6 702.4 L1389.8 699.3 L1390.1 700.3 L1390.4 700.9 L1390.7 699.7 L1391.0 700.8 L1391.2 698.6 L1391.5 698.8 L1391.8 697.9 L1392.1 697.6 L1392.4 697.3 L1392.6 695.9 L1392.9 695.3 L1393.2 698.7 L1393.5 695.8 L1393.8 693.3 L1394.0 696.4 L1394.3 697.2 L1394.6 693.1 L1394.9 692.1 L1395.2 694.4 L1395.4 694.6 L1395.7 693.9 L1396.0 693.4 L1396.3 691.9 L1396.6 695.1 L1396.8 694.7 L1397.1 695.9 L1397.4 695.0 L1397.7 693.6 L1398.0 697.4 L1398.2 693.9 L1398.5 694.9 L1398.8 692.3 L1399.1 693.4 L1399.4 693.5 L1399.6 693.9 L1399.9 695.2 L1400.2 695.4 L1400.5 694.8 L1400.8 696.0 L1401.0 695.2 L1401.3 694.4 L1401.6 696.5 L1401.9 696.5 L1402.2 698.2 L1402.4 696.8 L1402.7 694.9 L1403.0 695.6 L1403.3 695.0 L1403.6 695.5 L1403.8 695.9 L1404.1 699.5 L1404.4 697.5 L1404.7 696.0 L1405.0 698.9 L1405.2 694.1 L1405.5 695.9 L1405.8 697.9 L1406.1 695.9 L1406.4 695.0 L1406.6 698.3 L1406.9 699.8 L1407.2 695.5 L1407.5 695.9 L1407.8 696.2 L1408.0 699.4 L1408.3 698.7 L1408.6 700.3 L1408.9 699.0 L1409.2 696.4 L1409.4 699.4 L1409.7 700.2 L1410.0 698.7 L1410.3 701.2 L1410.6 701.2 L1410.8 697.6 L1411.1 696.8 L1411.4 701.0 L1411.7 697.1 L1412.0 696.6 L1412.2 696.7 L1412.5 701.1 L1412.8 700.8 L1413.1 698.0 L1413.4 700.8 L1413.6 698.2 L1413.9 698.3 L1414.2 696.7 L1414.5 698.4 L1414.8 701.5 L1415.0 701.6 L1415.3 697.6 L1415.6 701.7 L1415.9 700.9 L1416.2 697.1 L1416.4 700.3 L1416.7 702.4 L1417.0 698.0 L1417.3 700.2 L1417.6 701.7 L1417.8 697.7 L1418.1 698.5 L1418.4 701.5 L1418.7 698.2 L1419.0 699.5 L1419.2 703.2 L1419.5 699.9 L1419.8 700.4 L1420.1 700.6 L1420.4 702.9 L1420.6 701.6 L1420.9 701.5 L1421.2 702.1 L1421.5 699.1 L1421.8 702.1 L1422.0 700.8 L1422.3 701.2 L1422.6 701.3 L1422.9 705.7 L1423.2 705.7 L1423.4 704.6 L1423.7 704.2 L1424.0 702.5 L1424.3 703.7 L1424.6 705.5 L1424.8 704.8 L1425.1 701.8 L1425.4 705.0 L1425.7 705.1 L1426.0 705.6 L1426.2 706.2 L1426.5 705.1 L1426.8 703.5 L1427.1 708.5 L1427.4 705.0 L1427.6 706.0 L1427.9 705.1 L1428.2 703.7 L1428.5 704.7 L1428.8 704.2 L1429.0 706.1 L1429.3 707.7 L1429.6 707.5 L1429.9 707.1 L1430.2 707.2 L1430.4 706.2 L1430.7 708.6 L1431.0 708.0 L1431.3 708.3 L1431.6 706.8 L1431.8 709.3 L1432.1 707.1 L1432.4 710.3 L1432.7 710.8 L1433.0 706.8 L1433.2 706.1 L1433.5 709.8 L1433.8 710.0 L1434.1 710.3 L1434.4 709.8 L1434.6 710.1 L1434.9 707.6 L1435.2 710.4 L1435.5 712.0 L1435.8 708.2 L1436.0 708.7 L1436.3 711.5 L1436.6 710.8 L1436.9 711.6 L1437.2 709.4 L1437.4 709.4 L1437.7 713.0 L1438.0 711.8 L1438.3 709.4 L1438.6 712.0 L1438.8 709.8 L1439.1 711.8 L1439.4 713.6 L1439.7 712.1 L1440.0 712.2 L1440.2 713.3 L1440.5 710.4 L1440.8 712.0 L1441.1 710.3 L1441.4 712.2 L1441.6 712.7 L1441.9 713.2 L1442.2 714.8 L1442.5 712.3 L1442.8 712.6 L1443.0 711.9 L1443.3 712.8 L1443.6 712.2 L1443.9 712.3 L1444.2 712.2 L1444.4 713.1 L1444.7 713.1 L1445.0 715.4 L1445.3 711.6 L1445.6 709.4 L1445.8 713.8 L1446.1 709.7 L1446.4 713.4 L1446.7 709.6 L1447.0 709.4 L1447.2 711.8 L1447.5 715.3 L1447.8 714.7 L1448.1 715.1 L1448.4 711.1 L1448.6 711.8 L1448.9 714.8 L1449.2 711.2 L1449.5 713.8 L1449.8 712.3 L1450.0 710.8 L1450.3 713.1 L1450.6 711.6 L1450.9 713.5 L1451.2 714.7 L1451.4 714.9 L1451.7 711.8 L1452.0 710.6 L1452.3 709.4 L1452.6 710.3 L1452.8 710.2 L1453.1 713.3 L1453.4 710.6 L1453.7 714.7 L1454.0 711.7 L1454.2 713.5 L1454.5 712.7 L1454.8 712.3 L1455.1 709.8 L1455.4 710.1 L1455.6 711.3 L1455.9 711.7 L1456.2 713.5 L1456.5 712.6 L1456.8 710.0 L1457.0 712.8 L1457.3 711.7 L1457.6 710.9 L1457.9 711.1 L1458.2 708.5 L1458.4 710.3 L1458.7 711.5 L1459.0 709.8 L1459.3 711.0 L1459.6 711.3 L1459.8 712.0 L1460.1 708.3 L1460.4 708.5 L1460.7 712.2 L1461.0 710.4 L1461.2 709.6 L1461.5 707.4 L1461.8 707.8 L1462.1 711.2 L1462.4 707.0 L1462.6 708.7 L1462.9 709.1 L1463.2 707.7 L1463.5 709.1 L1463.8 708.8 L1464.0 708.5 L1464.3 705.3 L1464.6 706.1 L1464.9 707.8 L1465.2 708.1 L1465.4 707.6 L1465.7 708.7 L1466.0 709.7 L1466.3 708.8 L1466.6 707.6 L1466.8 704.3 L1467.1 706.6 L1467.4 706.8 L1467.7 706.5 L1468.0 704.3 L1468.2 707.7 L1468.5 704.6 L1468.8 705.4 L1469.1 706.8 L1469.4 707.5 L1469.6 707.5 L1469.9 704.9 L1470.2 705.6 L1470.5 706.5 L1470.8 705.2 L1471.0 703.1 L1471.3 703.4 L1471.6 706.0 L1471.9 707.2 L1472.2 705.1 L1472.4 702.3 L1472.7 701.2 L1473.0 706.1 L1473.3 705.7 L1473.6 701.7 L1473.8 700.8 L1474.1 703.5 L1474.4 702.0 L1474.7 700.3 L1475.0 700.4 L1475.2 703.1 L1475.5 702.6 L1475.8 703.2 L1476.1 703.1 L1476.4 700.8 L1476.6 703.0 L1476.9 701.4 L1477.2 703.5 L1477.5 700.3 L1477.8 702.5 L1478.0 700.8 L1478.3 700.7 L1478.6 700.3 L1478.9 698.5 L1479.2 697.8 L1479.4 701.1 L1479.7 700.6 L1480.0 701.0 L1480.3 699.7 L1480.6 699.7 L1480.8 699.1 L1481.1 699.6 L1481.4 699.5 L1481.7 698.0 L1482.0 697.5 L1482.2 696.5 L1482.5 696.7 L1482.8 697.6 L1483.1 698.2 L1483.4 699.7 L1483.6 699.6 L1483.9 698.8 L1484.2 696.2 L1484.5 695.3 L1484.8 695.7 L1485.0 696.3 L1485.3 695.2 L1485.6 697.4 L1485.9 693.8 L1486.2 693.9 L1486.4 695.3 L1486.7 693.9 L1487.0 694.4 L1487.3 693.0 L1487.6 694.7 L1487.8 695.4 L1488.1 693.6 L1488.4 694.3 L1488.7 693.9 L1489.0 690.9 L1489.2 692.1 L1489.5 691.7 L1489.8 691.2 L1490.1 694.0 L1490.4 691.7 L1490.6 690.3 L1490.9 692.6 L1491.2 694.3 L1491.5 692.6 L1491.8 690.9 L1492.0 692.6 L1492.3 690.3 L1492.6 691.8 L1492.9 690.9 L1493.2 695.2 L1493.4 692.5 L1493.7 692.2 L1494.0 690.2 L1494.3 691.5 L1494.6 688.6 L1494.8 689.7 L1495.1 690.5 L1495.4 692.3 L1495.7 689.5 L1496.0 687.3 L1496.2 689.1 L1496.5 692.4 L1496.8 692.6 L1497.1 690.3 L1497.4 690.0 L1497.6 689.9 L1497.9 689.4 L1498.2 688.4 L1498.5 689.5 L1498.8 687.0 L1499.0 690.2 L1499.3 690.7 L1499.6 690.9 L1499.9 692.2 L1500.2 689.2 L1500.4 690.4 L1500.7 689.6 L1501.0 691.0 L1501.3 692.2 L1501.6 690.6 L1501.8 692.2 L1502.1 691.2 L1502.4 690.6 L1502.7 688.7 L1503.0 692.5 L1503.2 689.0 L1503.5 693.2 L1503.8 690.6 L1504.1 689.8 L1504.4 690.7 L1504.6 689.9 L1504.9 689.2 L1505.2 692.9 L1505.5 691.6 L1505.8 691.6 L1506.0 694.6 L1506.3 692.6 L1506.6 693.2 L1506.9 690.8 L1507.2 694.0 L1507.4 691.2 L1507.7 691.7 L1508.0 693.7 L1508.3 690.5 L1508.6 693.3 L1508.8 690.5 L1509.1 695.1 L1509.4 690.9 L1509.7 695.6 L1510.0 693.7 L1510.2 693.6 L1510.5 691.5 L1510.8 695.0 L1511.1 692.5 L1511.4 694.7 L1511.6 692.6 L1511.9 697.3 L1512.2 693.8 L1512.5 695.9 L1512.8 696.7 L1513.0 695.7 L1513.3 694.6 L1513.6 696.3 L1513.9 696.5 L1514.2 695.0 L1514.4 697.1 L1514.7 693.5 L1515.0 697.3 L1515.3 696.7 L1515.6 696.7 L1515.8 697.0 L1516.1 694.5 L1516.4 696.3 L1516.7 696.6 L1517.0 695.1 L1517.2 698.9 L1517.5 697.6 L1517.8 696.0 L1518.1 696.9 L1518.4 694.9 L1518.6 696.3 L1518.9 695.3 L1519.2 698.2 L1519.5 695.7 L1519.8 697.7 L1520.0 696.1 L1520.3 698.0 L1520.6 699.4 L1520.9 698.0 L1521.2 698.4 L1521.4 698.1 L1521.7 701.5 L1522.0 701.0 L1522.3 703.3 L1522.6 699.5 L1522.8 700.9 L1523.1 698.9 L1523.4 702.2 L1523.7 704.7 L1524.0 702.1 L1524.2 700.8 L1524.5 701.7 L1524.8 701.3 L1525.1 705.7 L1525.4 705.2 L1525.6 705.7 L1525.9 704.6 L1526.2 703.2 L1526.5 704.5 L1526.8 702.2 L1527.0 703.9 L1527.3 708.7 L1527.6 705.1 L1527.9 707.3 L1528.2 707.7 L1528.4 705.9 L1528.7 703.7 L1529.0 705.8 L1529.3 708.1 L1529.6 707.4 L1529.8 706.0 L1530.1 706.1 L1530.4 707.8 L1530.7 706.4 L1531.0 708.8 L1531.2 709.5 L1531.5 706.3 L1531.8 709.0 L1532.1 709.2 L1532.4 708.3 L1532.6 708.9 L1532.9 708.2 L1533.2 709.9 L1533.5 710.6 L1533.8 711.0 L1534.0 712.7 L1534.3 709.4 L1534.6 711.5 L1534.9 713.4 L1535.2 710.9 L1535.4 713.1 L1535.7 710.4 L1536.0 713.3 L1536.3 710.7 L1536.6 713.2 L1536.8 711.4 L1537.1 716.0 L1537.4 714.9 L1537.7 712.9 L1538.0 714.4 L1538.2 713.2 L1538.5 711.3 L1538.8 711.2 L1539.1 711.9 L1539.4 714.6 L1539.6 715.5 L1539.9 710.1 L1540.2 711.6 L1540.5 709.8 L1540.8 709.8 L1541.0 711.6 L1541.3 715.0 L1541.6 712.5 L1541.9 711.5 L1542.2 712.7 L1542.4 712.4 L1542.7 709.5 L1543.0 709.7 L1543.3 709.8 L1543.6 712.7 L1543.8 713.3 L1544.1 712.2 L1544.4 712.4 L1544.7 711.4 L1545.0 710.8 L1545.2 712.2 L1545.5 708.8 L1545.8 709.7 L1546.1 709.7 L1546.4 708.7 L1546.6 709.6 L1546.9 708.6 L1547.2 711.3 L1547.5 707.4 L1547.8 709.8 L1548.0 708.8 L1548.3 711.8 L1548.6 708.7 L1548.9 709.6 L1549.2 709.6 L1549.4 705.8 L1549.7 710.0 L1550.0 706.0 L1550.3 709.6 L1550.6 708.2 L1550.8 708.1 L1551.1 708.5 L1551.4 707.5 L1551.7 704.9 L1552.0 708.8 L1552.2 707.6 L1552.5 707.1 L1552.8 708.6 L1553.1 703.8 L1553.4 703.4 L1553.6 705.3 L1553.9 702.4 L1554.2 706.3 L1554.5 702.6 L1554.8 706.3 L1555.0 704.7 L1555.3 701.9 L1555.6 705.1 L1555.9 702.1 L1556.2 703.8 L1556.4 700.3 L1556.7 703.3 L1557.0 699.8 L1557.3 702.6 L1557.6 700.6 L1557.8 699.0 L1558.1 700.2 L1558.4 697.1 L1558.7 698.4 L1559.0 696.4 L1559.2 700.2 L1559.5 699.7 L1559.8 696.2 L1560.1 697.6 L1560.4 698.0 L1560.6 700.0 L1560.9 694.8 L1561.2 694.6 L1561.5 695.3 L1561.8 694.4 L1562.0 697.2 L1562.3 694.7 L1562.6 694.0 L1562.9 695.7 L1563.2 695.0 L1563.4 694.3 L1563.7 693.5 L1564.0 694.9 L1564.3 695.9 L1564.6 692.4 L1564.8 694.4 L1565.1 691.1 L1565.4 693.1 L1565.7 692.7 L1566.0 692.1 L1566.2 690.3 L1566.5 691.6 L1566.8 690.2 L1567.1 689.2 L1567.4 688.8 L1567.6 687.0 L1567.9 687.6 L1568.2 691.1 L1568.5 689.9 L1568.8 686.4 L1569.0 688.6 L1569.3 690.0 L1569.6 683.9 L1569.9 685.9 L1570.2 683.8 L1570.4 685.1 L1570.7 684.1 L1571.0 684.7 L1571.3 683.3 L1571.6 683.2 L1571.8 687.7 L1572.1 685.5 L1572.4 687.7 L1572.7 684.3 L1573.0 681.9" stroke="#ff0000" stroke-width="1.5" fill="none" stroke-linejoin="round"/>
<rect x="1472.5" y="643.5" width="111" height="25.5" rx="2" fill="#fffff3" stroke="#a6a69c" stroke-width="1"/>
<line x1="1478" y1="655.5" x2="1506" y2="655.5" stroke="#ff5a5a" stroke-width="1.5"/>
<text x="1510.5" y="660.0" font-size="11" text-anchor="start" textLength="68.5" lengthAdjust="spacingAndGlyphs">Average Value</text>
<rect x="875.0" y="639.0" width="712.0" height="240.0" fill="none" stroke="#5e5e5e" stroke-width="1.5"/>
<text x="871.5" y="644.4" font-size="11" text-anchor="end" >0.0004</text>
<text x="871.5" y="677.5" font-size="11" text-anchor="end" >0.0002</text>
<text x="871.5" y="711.6" font-size="11" text-anchor="end" >0</text>
<text x="871.5" y="745.7" font-size="11" text-anchor="end" >-0.0002</text>
<text x="871.5" y="779.8" font-size="11" text-anchor="end" >-0.0004</text>
<text x="871.5" y="813.9" font-size="11" text-anchor="end" >-0.0006</text>
<text x="871.5" y="848.0" font-size="11" text-anchor="end" >-0.0008</text>
<text x="871.5" y="882.1" font-size="11" text-anchor="end" >-0.001</text>
<text x="875.0" y="892.0" font-size="11" text-anchor="middle" >0</text>
<text x="946.1" y="892.0" font-size="11" text-anchor="middle" >0.1</text>
<text x="1017.2" y="892.0" font-size="11" text-anchor="middle" >0.2</text>
<text x="1088.3" y="892.0" font-size="11" text-anchor="middle" >0.3</text>
<text x="1159.4" y="892.0" font-size="11" text-anchor="middle" >0.4</text>
<text x="1230.5" y="892.0" font-size="11" text-anchor="middle" >0.5</text>
<text x="1301.6" y="892.0" font-size="11" text-anchor="middle" >0.6</text>
<text x="1372.7" y="892.0" font-size="11" text-anchor="middle" >0.7</text>
<text x="1443.8" y="892.0" font-size="11" text-anchor="middle" >0.8</text>
<text x="1514.9" y="892.0" font-size="11" text-anchor="middle" >0.9</text>
<text x="1585.0" y="892.0" font-size="11" text-anchor="middle" >1</text>
<text x="1231.0" y="904.5" font-size="11" text-anchor="middle" textLength="37" lengthAdjust="spacingAndGlyphs">Time [s]</text>
<text font-size="11" text-anchor="middle" transform="translate(832 758) rotate(-90)">W [mm]</text></svg>
</body></html>
